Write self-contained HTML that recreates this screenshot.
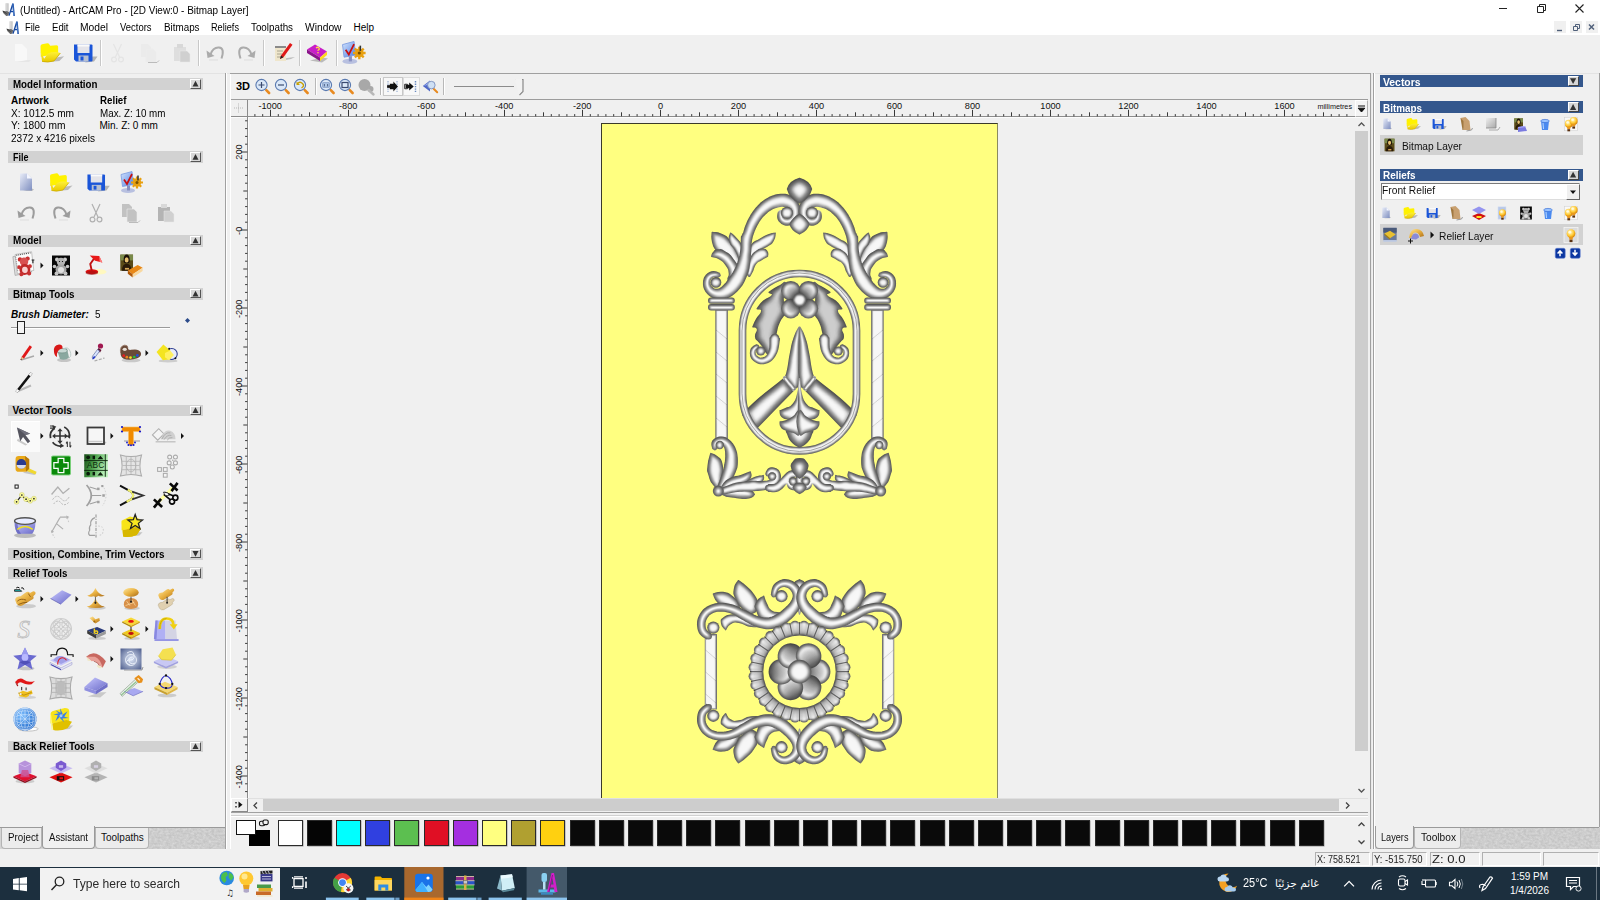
<!DOCTYPE html>
<html lang="en"><head><meta charset="utf-8"><title>(Untitled) - ArtCAM Pro - [2D View:0 - Bitmap Layer]</title>
<style>
html,body{margin:0;padding:0;}
body{width:1600px;height:900px;position:relative;overflow:hidden;background:#f0f0f0;font-family:"Liberation Sans","DejaVu Sans",sans-serif;font-size:10px;color:#000;}
body>div,body>span,body>svg{position:absolute;}
.t{white-space:nowrap;transform-origin:0 50%;display:block;}
.ov{pointer-events:none;}
svg{overflow:visible;display:block;}
</style></head><body>
<div style="left:0px;top:0px;width:1600px;height:35px;background:#fff;"></div>
<div style="left:0px;top:35px;width:1600px;height:832px;background:#f0f0f0;"></div>
<span class="t" style="left:19.5px;top:3.8px;font-size:10px;line-height:14px;transform:scaleX(0.994);">(Untitled) - ArtCAM Pro - [2D View:0 - Bitmap Layer]</span>
<span class="t" style="left:25px;top:20.6px;font-size:10px;line-height:14px;transform:scaleX(0.931);">File</span>
<span class="t" style="left:51.5px;top:20.6px;font-size:10px;line-height:14px;transform:scaleX(0.958);">Edit</span>
<span class="t" style="left:80px;top:20.6px;font-size:10px;line-height:14px;transform:scaleX(1.028);">Model</span>
<span class="t" style="left:120px;top:20.6px;font-size:10px;line-height:14px;transform:scaleX(0.945);">Vectors</span>
<span class="t" style="left:163.5px;top:20.6px;font-size:10px;line-height:14px;transform:scaleX(0.983);">Bitmaps</span>
<span class="t" style="left:211px;top:20.6px;font-size:10px;line-height:14px;transform:scaleX(0.916);">Reliefs</span>
<span class="t" style="left:251px;top:20.6px;font-size:10px;line-height:14px;transform:scaleX(0.981);">Toolpaths</span>
<span class="t" style="left:305px;top:20.6px;font-size:10px;line-height:14px;transform:scaleX(1.026);">Window</span>
<span class="t" style="left:353.5px;top:20.6px;font-size:10px;line-height:14px;">Help</span>
<svg style="left:2px;top:3px;" width="14" height="14" viewBox="0 0 14 14"><path d="M3.6 0.300h3v8.500h-3z" fill="#bdbdbd"/><path d="M4.4 0.300h1v8h-1z" fill="#e6e6e6"/><path d="M0.4 7.600q2.5 1 4.5 0.500l2.3 1.2-0.6 2.600q-1.2 1.4-2.6 0.800l-2.8-2.600z" fill="#6a6a6a"/><path d="M1 8.200l3.5 2.3" stroke="#3a3a3a" stroke-width="1"/><path d="M6.3 12.800l3.9-12.400h1.500l1.2 12.500h-1.500l-0.3-3.600h-2.300l-1.1 3.500z" fill="#17479e"/><path d="M9.3 8l1.3-4.6 0.3 4.600z" fill="#fff"/><path d="M10.7 0.400l1.2 12.5" stroke="#4f86d6" stroke-width="0.7"/></svg>
<svg style="left:6.3px;top:20.6px;" width="14" height="14" viewBox="0 0 14 14"><path d="M3.6 0.300h3v8.500h-3z" fill="#bdbdbd"/><path d="M4.4 0.300h1v8h-1z" fill="#e6e6e6"/><path d="M0.4 7.600q2.5 1 4.5 0.500l2.3 1.2-0.6 2.600q-1.2 1.4-2.6 0.800l-2.8-2.600z" fill="#6a6a6a"/><path d="M1 8.200l3.5 2.3" stroke="#3a3a3a" stroke-width="1"/><path d="M6.3 12.800l3.9-12.400h1.500l1.2 12.500h-1.500l-0.3-3.600h-2.300l-1.1 3.500z" fill="#17479e"/><path d="M9.3 8l1.3-4.6 0.3 4.600z" fill="#fff"/><path d="M10.7 0.400l1.2 12.5" stroke="#4f86d6" stroke-width="0.7"/></svg>
<svg style="left:1495px;top:0px;" width="105" height="18" viewBox="0 0 105 18"><path d="M4 8.5h8" stroke="#222" stroke-width="1" fill="none"/><path d="M42.5 6.5h6v6h-6z M44.5 6.5v-2h6v6h-2" stroke="#222" stroke-width="1" fill="none"/><path d="M80.5 4.5l8 8m0-8l-8 8" stroke="#222" stroke-width="1.1" fill="none"/></svg>
<div style="left:1552.5px;top:19.5px;width:14px;height:14px;background:#f0f0f0;border:1px solid #fff;box-sizing:border-box;"></div>
<div style="left:1568.5px;top:19.5px;width:14px;height:14px;background:#f0f0f0;border:1px solid #fff;box-sizing:border-box;"></div>
<div style="left:1584.5px;top:19.5px;width:14px;height:14px;background:#f0f0f0;border:1px solid #fff;box-sizing:border-box;"></div>
<svg style="left:1552px;top:19px;" width="48" height="16" viewBox="0 0 48 16"><path d="M5 11.5h5" stroke="#50607a" stroke-width="1.4"/><path d="M21.5 7.5h4v4h-4z M23.5 7.5v-2h4v4h-2" stroke="#50607a" stroke-width="1" fill="none"/><path d="M37 5.5l5 5m0-5l-5 5" stroke="#50607a" stroke-width="1.5" fill="none"/></svg>
<div style="left:99.5px;top:40px;width:1px;height:26px;background:#c8c8c8;"></div>
<div style="left:100.5px;top:40px;width:1px;height:26px;background:#fff;"></div>
<div style="left:197.5px;top:40px;width:1px;height:26px;background:#c8c8c8;"></div>
<div style="left:198.5px;top:40px;width:1px;height:26px;background:#fff;"></div>
<div style="left:263px;top:40px;width:1px;height:26px;background:#c8c8c8;"></div>
<div style="left:264px;top:40px;width:1px;height:26px;background:#fff;"></div>
<div style="left:299px;top:40px;width:1px;height:26px;background:#c8c8c8;"></div>
<div style="left:300px;top:40px;width:1px;height:26px;background:#fff;"></div>
<div style="left:335.5px;top:40px;width:1px;height:26px;background:#c8c8c8;"></div>
<div style="left:336.5px;top:40px;width:1px;height:26px;background:#fff;"></div>
<div style="left:0px;top:72.5px;width:1600px;height:1px;background:#e3e3e3;"></div>
<div style="left:225px;top:73px;width:1px;height:776px;background:#a0a0a0;"></div>
<div style="left:226px;top:73px;width:1px;height:776px;background:#fff;"></div>
<div style="left:230px;top:73px;width:1px;height:776px;background:#fff;"></div>
<div style="left:230px;top:73px;width:1140px;height:1px;background:#a0a0a0;"></div>
<div style="left:1370px;top:73px;width:1px;height:776px;background:#a0a0a0;"></div>
<div style="left:1371px;top:73px;width:1px;height:776px;background:#e8e8e8;"></div>
<div style="left:1373px;top:73px;width:1px;height:776px;background:#a0a0a0;"></div>
<div style="left:1374px;top:73px;width:1px;height:776px;background:#fff;"></div>
<div style="left:1598.5px;top:73px;width:1px;height:754px;background:#a0a0a0;"></div>
<div style="left:8px;top:77.5px;width:195px;height:12.5px;background:#d2d2d2;"></div>
<span class="t" style="left:12.5px;top:77.65px;font-size:10px;line-height:14px;font-weight:bold;transform:scaleX(0.975);">Model Information</span>
<div style="left:190px;top:78.7px;width:11px;height:10.1px;background:#d8d8d8;border-top:1px solid #fff;border-left:1px solid #fff;border-right:1px solid #555;border-bottom:1px solid #555;box-sizing:border-box;"></div>
<svg style="left:0;top:0" width="1600" height="900" class="ov"><polygon points="192.5,86.55 198.5,86.55 195.5,80.75" fill="#333"/></svg>
<span class="t" style="left:11px;top:94.1px;font-size:10px;line-height:14px;font-weight:bold;">Artwork</span>
<span class="t" style="left:99.5px;top:94.1px;font-size:10px;line-height:14px;font-weight:bold;transform:scaleX(0.973);">Relief</span>
<span class="t" style="left:11px;top:106.6px;font-size:10px;line-height:14px;transform:scaleX(1.012);">X: 1012.5 mm</span>
<span class="t" style="left:99.5px;top:106.6px;font-size:10px;line-height:14px;transform:scaleX(0.982);">Max. Z: 10 mm</span>
<span class="t" style="left:11px;top:119.1px;font-size:10px;line-height:14px;transform:scaleX(1.021);">Y: 1800 mm</span>
<span class="t" style="left:99.5px;top:119.1px;font-size:10px;line-height:14px;">Min. Z: 0 mm</span>
<span class="t" style="left:11px;top:131.6px;font-size:10px;line-height:14px;transform:scaleX(1.007);">2372 x 4216 pixels</span>
<div style="left:8px;top:151px;width:195px;height:12px;background:#d2d2d2;"></div>
<span class="t" style="left:12.5px;top:150.9px;font-size:10px;line-height:14px;font-weight:bold;transform:scaleX(0.900);">File</span>
<div style="left:190px;top:152.2px;width:11px;height:9.6px;background:#d8d8d8;border-top:1px solid #fff;border-left:1px solid #fff;border-right:1px solid #555;border-bottom:1px solid #555;box-sizing:border-box;"></div>
<svg style="left:0;top:0" width="1600" height="900" class="ov"><polygon points="192.5,159.8 198.5,159.8 195.5,154" fill="#333"/></svg>
<div style="left:8px;top:234.5px;width:195px;height:12px;background:#d2d2d2;"></div>
<span class="t" style="left:12.5px;top:234.4px;font-size:10px;line-height:14px;font-weight:bold;transform:scaleX(0.987);">Model</span>
<div style="left:190px;top:235.7px;width:11px;height:9.6px;background:#d8d8d8;border-top:1px solid #fff;border-left:1px solid #fff;border-right:1px solid #555;border-bottom:1px solid #555;box-sizing:border-box;"></div>
<svg style="left:0;top:0" width="1600" height="900" class="ov"><polygon points="192.5,243.3 198.5,243.3 195.5,237.5" fill="#333"/></svg>
<div style="left:8px;top:288px;width:195px;height:11.5px;background:#d2d2d2;"></div>
<span class="t" style="left:12.5px;top:287.65px;font-size:10px;line-height:14px;font-weight:bold;transform:scaleX(0.983);">Bitmap Tools</span>
<div style="left:190px;top:289.2px;width:11px;height:9.1px;background:#d8d8d8;border-top:1px solid #fff;border-left:1px solid #fff;border-right:1px solid #555;border-bottom:1px solid #555;box-sizing:border-box;"></div>
<svg style="left:0;top:0" width="1600" height="900" class="ov"><polygon points="192.5,296.55 198.5,296.55 195.5,290.75" fill="#333"/></svg>
<span class="t" style="left:11px;top:308.1px;font-size:10px;line-height:14px;font-weight:bold;font-style:italic;">Brush Diameter:</span>
<span class="t" style="left:94.5px;top:308.1px;font-size:10px;line-height:14px;transform:scaleX(0.989);">5</span>
<div style="left:11px;top:326.5px;width:159px;height:1px;background:#9a9a9a;"></div>
<div style="left:11px;top:327.5px;width:159px;height:1px;background:#fff;"></div>
<div style="left:16.5px;top:321px;width:8.5px;height:13px;background:#f4f4f4;border:1px solid #222;box-sizing:border-box;"></div>
<svg style="left:184px;top:317px;" width="7" height="7" viewBox="0 0 7 7"><path d="M3.5 1L6 3.5 3.5 6 1 3.5z" fill="#2b4a8a"/></svg>
<div style="left:8px;top:404.5px;width:195px;height:11.5px;background:#d2d2d2;"></div>
<span class="t" style="left:12.5px;top:404.15px;font-size:10px;line-height:14px;font-weight:bold;">Vector Tools</span>
<div style="left:190px;top:405.7px;width:11px;height:9.1px;background:#d8d8d8;border-top:1px solid #fff;border-left:1px solid #fff;border-right:1px solid #555;border-bottom:1px solid #555;box-sizing:border-box;"></div>
<svg style="left:0;top:0" width="1600" height="900" class="ov"><polygon points="192.5,413.05 198.5,413.05 195.5,407.25" fill="#333"/></svg>
<div style="left:8px;top:548px;width:195px;height:11.5px;background:#d2d2d2;"></div>
<span class="t" style="left:12.5px;top:547.65px;font-size:10px;line-height:14px;font-weight:bold;transform:scaleX(0.988);">Position, Combine, Trim Vectors</span>
<div style="left:190px;top:549.2px;width:11px;height:9.1px;background:#d8d8d8;border-top:1px solid #fff;border-left:1px solid #fff;border-right:1px solid #555;border-bottom:1px solid #555;box-sizing:border-box;"></div>
<svg style="left:0;top:0" width="1600" height="900" class="ov"><polygon points="192.5,550.95 198.5,550.95 195.5,556.75" fill="#333"/></svg>
<div style="left:8px;top:567px;width:195px;height:12px;background:#d2d2d2;"></div>
<span class="t" style="left:12.5px;top:566.9px;font-size:10px;line-height:14px;font-weight:bold;transform:scaleX(0.974);">Relief Tools</span>
<div style="left:190px;top:568.2px;width:11px;height:9.6px;background:#d8d8d8;border-top:1px solid #fff;border-left:1px solid #fff;border-right:1px solid #555;border-bottom:1px solid #555;box-sizing:border-box;"></div>
<svg style="left:0;top:0" width="1600" height="900" class="ov"><polygon points="192.5,575.8 198.5,575.8 195.5,570" fill="#333"/></svg>
<div style="left:8px;top:740.5px;width:195px;height:11.5px;background:#d2d2d2;"></div>
<span class="t" style="left:12.5px;top:740.15px;font-size:10px;line-height:14px;font-weight:bold;transform:scaleX(0.986);">Back Relief Tools</span>
<div style="left:190px;top:741.7px;width:11px;height:9.1px;background:#d8d8d8;border-top:1px solid #fff;border-left:1px solid #fff;border-right:1px solid #555;border-bottom:1px solid #555;box-sizing:border-box;"></div>
<svg style="left:0;top:0" width="1600" height="900" class="ov"><polygon points="192.5,749.05 198.5,749.05 195.5,743.25" fill="#333"/></svg>
<div style="left:11px;top:421px;width:28px;height:30px;background:#fafafa;border-top:1px solid #fff;border-left:1px solid #fff;"></div>
<div style="left:0px;top:827px;width:225px;height:22px;background:#d4d4d4;"></div>
<svg style="left:149px;top:827px" width="76" height="22"><filter id="tx" x="0" y="0" width="100%" height="100%"><feTurbulence type="fractalNoise" baseFrequency="0.35 0.5" numOctaves="2" seed="3"/><feColorMatrix type="matrix" values="0 0 0 0 0.86  0 0 0 0 0.86  0 0 0 0 0.86  0.9 0 0 0 -0.25"/></filter><rect width="76" height="22" fill="#c4c4c4"/><rect width="76" height="22" filter="url(#tx)"/></svg>
<div style="left:0px;top:826.5px;width:225px;height:1px;background:#9a9a9a;"></div>
<div style="left:1px;top:828px;width:41px;height:20.5px;background:#ececec;border:1px solid #b4b4b4;border-top:none;border-radius:0 0 4px 4px;box-sizing:border-box;"></div>
<span class="t" style="left:7.5px;top:831.3px;font-size:10px;line-height:14px;color:#111;transform:scaleX(0.980);">Project</span>
<div style="left:95px;top:828px;width:53.5px;height:20.5px;background:#ececec;border:1px solid #b4b4b4;border-top:none;border-radius:0 0 4px 4px;box-sizing:border-box;"></div>
<span class="t" style="left:101px;top:831.3px;font-size:10px;line-height:14px;color:#111;">Toolpaths</span>
<div style="left:42px;top:826px;width:53px;height:22.5px;background:#f0f0f0;border:1px solid #9a9a9a;border-top:none;border-radius:0 0 4px 4px;box-sizing:border-box;"></div>
<span class="t" style="left:49px;top:830.6px;font-size:10px;line-height:14px;color:#111;transform:scaleX(0.961);">Assistant</span>
<span class="t" style="left:236px;top:79.1px;font-size:11px;line-height:15px;font-weight:bold;">3D</span>
<div style="left:314.5px;top:78px;width:1px;height:17px;background:#b8b8b8;"></div>
<div style="left:315.5px;top:78px;width:1px;height:17px;background:#fff;"></div>
<div style="left:379.5px;top:78px;width:1px;height:17px;background:#b8b8b8;"></div>
<div style="left:380.5px;top:78px;width:1px;height:17px;background:#fff;"></div>
<div style="left:443px;top:78px;width:1px;height:17px;background:#b8b8b8;"></div>
<div style="left:444px;top:78px;width:1px;height:17px;background:#fff;"></div>
<div style="left:382.5px;top:77px;width:20px;height:19px;background:#f8f8f8;border:1px solid #c8c8c8;box-sizing:border-box;"></div>
<div style="left:403px;top:77px;width:17px;height:19px;background:#f8f8f8;border:1px solid #dcdcdc;box-sizing:border-box;"></div>
<div style="left:454px;top:85.5px;width:60px;height:1.6px;background:#8c8c8c;"></div>
<svg style="left:513px;top:78px;" width="12" height="19" viewBox="0 0 12 19"><path d="M2.5 1.5h7.5v12l-3.5 3.5" fill="none" stroke="#8a8a8a" stroke-width="1.2"/><path d="M2 1h7v12l-3 3" fill="#f2f2f2" stroke="none"/></svg>
<div style="left:231px;top:99px;width:1137px;height:1px;background:#9c9c9c;"></div>
<div style="left:231px;top:116.3px;width:1137px;height:1px;background:#8c8c8c;"></div>
<div style="left:231px;top:117.3px;width:1137px;height:1px;background:#fcfcfc;"></div>
<div style="left:247.3px;top:100px;width:1px;height:712px;background:#8c8c8c;"></div>
<div style="left:248.3px;top:117px;width:1px;height:695px;background:#fcfcfc;"></div>
<div style="left:231px;top:797.5px;width:1137px;height:1px;background:#e0e0e0;"></div>
<svg style="left:0;top:0" width="1600" height="900" class="ov"><path d="M254.90 114.10v2.20M262.70 114.10v2.20M270.50 109.80v6.50M278.30 114.10v2.20M286.10 114.10v2.20M293.90 114.10v2.20M301.70 114.10v2.20M309.50 112.30v4.00M317.30 114.10v2.20M325.10 114.10v2.20M332.90 114.10v2.20M340.70 114.10v2.20M348.50 109.80v6.50M356.30 114.10v2.20M364.10 114.10v2.20M371.90 114.10v2.20M379.70 114.10v2.20M387.50 112.30v4.00M395.30 114.10v2.20M403.10 114.10v2.20M410.90 114.10v2.20M418.70 114.10v2.20M426.50 109.80v6.50M434.30 114.10v2.20M442.10 114.10v2.20M449.90 114.10v2.20M457.70 114.10v2.20M465.50 112.30v4.00M473.30 114.10v2.20M481.10 114.10v2.20M488.90 114.10v2.20M496.70 114.10v2.20M504.50 109.80v6.50M512.30 114.10v2.20M520.10 114.10v2.20M527.90 114.10v2.20M535.70 114.10v2.20M543.50 112.30v4.00M551.30 114.10v2.20M559.10 114.10v2.20M566.90 114.10v2.20M574.70 114.10v2.20M582.50 109.80v6.50M590.30 114.10v2.20M598.10 114.10v2.20M605.90 114.10v2.20M613.70 114.10v2.20M621.50 112.30v4.00M629.30 114.10v2.20M637.10 114.10v2.20M644.90 114.10v2.20M652.70 114.10v2.20M660.50 109.80v6.50M668.30 114.10v2.20M676.10 114.10v2.20M683.90 114.10v2.20M691.70 114.10v2.20M699.50 112.30v4.00M707.30 114.10v2.20M715.10 114.10v2.20M722.90 114.10v2.20M730.70 114.10v2.20M738.50 109.80v6.50M746.30 114.10v2.20M754.10 114.10v2.20M761.90 114.10v2.20M769.70 114.10v2.20M777.50 112.30v4.00M785.30 114.10v2.20M793.10 114.10v2.20M800.90 114.10v2.20M808.70 114.10v2.20M816.50 109.80v6.50M824.30 114.10v2.20M832.10 114.10v2.20M839.90 114.10v2.20M847.70 114.10v2.20M855.50 112.30v4.00M863.30 114.10v2.20M871.10 114.10v2.20M878.90 114.10v2.20M886.70 114.10v2.20M894.50 109.80v6.50M902.30 114.10v2.20M910.10 114.10v2.20M917.90 114.10v2.20M925.70 114.10v2.20M933.50 112.30v4.00M941.30 114.10v2.20M949.10 114.10v2.20M956.90 114.10v2.20M964.70 114.10v2.20M972.50 109.80v6.50M980.30 114.10v2.20M988.10 114.10v2.20M995.90 114.10v2.20M1003.70 114.10v2.20M1011.50 112.30v4.00M1019.30 114.10v2.20M1027.10 114.10v2.20M1034.90 114.10v2.20M1042.70 114.10v2.20M1050.50 109.80v6.50M1058.30 114.10v2.20M1066.10 114.10v2.20M1073.90 114.10v2.20M1081.70 114.10v2.20M1089.50 112.30v4.00M1097.30 114.10v2.20M1105.10 114.10v2.20M1112.90 114.10v2.20M1120.70 114.10v2.20M1128.50 109.80v6.50M1136.30 114.10v2.20M1144.10 114.10v2.20M1151.90 114.10v2.20M1159.70 114.10v2.20M1167.50 112.30v4.00M1175.30 114.10v2.20M1183.10 114.10v2.20M1190.90 114.10v2.20M1198.70 114.10v2.20M1206.50 109.80v6.50M1214.30 114.10v2.20M1222.10 114.10v2.20M1229.90 114.10v2.20M1237.70 114.10v2.20M1245.50 112.30v4.00M1253.30 114.10v2.20M1261.10 114.10v2.20M1268.90 114.10v2.20M1276.70 114.10v2.20M1284.50 109.80v6.50M1292.30 114.10v2.20M1300.10 114.10v2.20M1307.90 114.10v2.20M1315.70 114.10v2.20M1323.50 112.30v4.00M1331.30 114.10v2.20M1339.10 114.10v2.20M1346.90 114.10v2.20M245.10 791.60h2.20M245.10 783.80h2.20M240.80 776.00h6.50M245.10 768.20h2.20M245.10 760.40h2.20M245.10 752.60h2.20M245.10 744.80h2.20M243.30 737.00h4.00M245.10 729.20h2.20M245.10 721.40h2.20M245.10 713.60h2.20M245.10 705.80h2.20M240.80 698.00h6.50M245.10 690.20h2.20M245.10 682.40h2.20M245.10 674.60h2.20M245.10 666.80h2.20M243.30 659.00h4.00M245.10 651.20h2.20M245.10 643.40h2.20M245.10 635.60h2.20M245.10 627.80h2.20M240.80 620.00h6.50M245.10 612.20h2.20M245.10 604.40h2.20M245.10 596.60h2.20M245.10 588.80h2.20M243.30 581.00h4.00M245.10 573.20h2.20M245.10 565.40h2.20M245.10 557.60h2.20M245.10 549.80h2.20M240.80 542.00h6.50M245.10 534.20h2.20M245.10 526.40h2.20M245.10 518.60h2.20M245.10 510.80h2.20M243.30 503.00h4.00M245.10 495.20h2.20M245.10 487.40h2.20M245.10 479.60h2.20M245.10 471.80h2.20M240.80 464.00h6.50M245.10 456.20h2.20M245.10 448.40h2.20M245.10 440.60h2.20M245.10 432.80h2.20M243.30 425.00h4.00M245.10 417.20h2.20M245.10 409.40h2.20M245.10 401.60h2.20M245.10 393.80h2.20M240.80 386.00h6.50M245.10 378.20h2.20M245.10 370.40h2.20M245.10 362.60h2.20M245.10 354.80h2.20M243.30 347.00h4.00M245.10 339.20h2.20M245.10 331.40h2.20M245.10 323.60h2.20M245.10 315.80h2.20M240.80 308.00h6.50M245.10 300.20h2.20M245.10 292.40h2.20M245.10 284.60h2.20M245.10 276.80h2.20M243.30 269.00h4.00M245.10 261.20h2.20M245.10 253.40h2.20M245.10 245.60h2.20M245.10 237.80h2.20M240.80 230.00h6.50M245.10 222.20h2.20M245.10 214.40h2.20M245.10 206.60h2.20M245.10 198.80h2.20M243.30 191.00h4.00M245.10 183.20h2.20M245.10 175.40h2.20M245.10 167.60h2.20M245.10 159.80h2.20M240.80 152.00h6.50M245.10 144.20h2.20M245.10 136.40h2.20M245.10 128.60h2.20M245.10 120.80h2.20" stroke="#222" stroke-width="0.9" fill="none"/><g font-family="Liberation Sans,sans-serif" font-size="9.2" fill="#111"><text x="270.2" y="109.3" text-anchor="middle">-1000</text><text x="348.2" y="109.3" text-anchor="middle">-800</text><text x="426.2" y="109.3" text-anchor="middle">-600</text><text x="504.2" y="109.3" text-anchor="middle">-400</text><text x="582.2" y="109.3" text-anchor="middle">-200</text><text x="660.5" y="109.3" text-anchor="middle">0</text><text x="738.5" y="109.3" text-anchor="middle">200</text><text x="816.5" y="109.3" text-anchor="middle">400</text><text x="894.5" y="109.3" text-anchor="middle">600</text><text x="972.5" y="109.3" text-anchor="middle">800</text><text x="1050.5" y="109.3" text-anchor="middle">1000</text><text x="1128.5" y="109.3" text-anchor="middle">1200</text><text x="1206.5" y="109.3" text-anchor="middle">1400</text><text x="1284.5" y="109.3" text-anchor="middle">1600</text><text transform="translate(242.4 152.0) rotate(-90)" text-anchor="middle">200</text><text transform="translate(242.4 230.8) rotate(-90)" text-anchor="middle">-0</text><text transform="translate(242.4 308.8) rotate(-90)" text-anchor="middle">-200</text><text transform="translate(242.4 386.8) rotate(-90)" text-anchor="middle">-400</text><text transform="translate(242.4 464.8) rotate(-90)" text-anchor="middle">-600</text><text transform="translate(242.4 542.8) rotate(-90)" text-anchor="middle">-800</text><text transform="translate(242.4 620.8) rotate(-90)" text-anchor="middle">-1000</text><text transform="translate(242.4 698.8) rotate(-90)" text-anchor="middle">-1200</text><text transform="translate(242.4 776.8) rotate(-90)" text-anchor="middle">-1400</text></g><text x="1317.5" y="109" font-family="Liberation Sans,sans-serif" font-size="7.6" fill="#111" textLength="34.5" lengthAdjust="spacingAndGlyphs">millimetres</text><path d="M234 108h9M238.5 103.5v9" stroke="#aaa" stroke-width="0.8" stroke-dasharray="1 1" fill="none"/></svg>
<div style="left:1354.5px;top:100px;width:13px;height:16.5px;background:#f4f4f4;border:1px solid #b0b0b0;border-top-color:#fff;border-left-color:#fff;box-sizing:border-box;"></div>
<svg style="left:1354.5px;top:100px;" width="13" height="17" viewBox="0 0 13 17"><path d="M3 6h7M3.2 8.2h6.6L6.5 12z" stroke="#111" stroke-width="1" fill="#111"/></svg>
<div style="left:601px;top:122.5px;width:396.5px;height:675px;background:#ffff80;border-left:1.2px solid #3a3a2a;border-top:1.2px solid #3a3a2a;border-right:1px solid #8a8a60;box-sizing:border-box;"></div>
<div style="left:1355px;top:117.5px;width:13px;height:680px;background:#f0f0f0;"></div>
<div style="left:1355px;top:131px;width:12.5px;height:619.5px;background:#cdcdcd;"></div>
<svg style="left:1355px;top:118px;" width="13" height="13" viewBox="0 0 13 13"><path d="M3.5 8l3-3 3 3" stroke="#555" stroke-width="1.3" fill="none"/></svg>
<svg style="left:1355px;top:784px;" width="13" height="13" viewBox="0 0 13 13"><path d="M3.5 5l3 3 3-3" stroke="#555" stroke-width="1.3" fill="none"/></svg>
<div style="left:248px;top:798.5px;width:1107px;height:12.5px;background:#f0f0f0;"></div>
<div style="left:262.5px;top:799px;width:1076.5px;height:11.5px;background:#cdcdcd;"></div>
<svg style="left:249px;top:798.5px;" width="13" height="13" viewBox="0 0 13 13"><path d="M8 3.5l-3 3 3 3" stroke="#444" stroke-width="1.3" fill="none"/></svg>
<svg style="left:1341px;top:798.5px;" width="13" height="13" viewBox="0 0 13 13"><path d="M5 3.5l3 3-3 3" stroke="#444" stroke-width="1.3" fill="none"/></svg>
<div style="left:231px;top:798px;width:16.5px;height:13.5px;background:#f0f0f0;border:1px solid #fff;border-right-color:#888;border-bottom-color:#888;box-sizing:border-box;"></div>
<svg style="left:231px;top:798px;" width="17" height="14" viewBox="0 0 17 14"><path d="M7.5 3.5l4 3.3-4 3.3z" fill="#111"/><path d="M5 4v1.4M5 8v1.4" stroke="#111" stroke-width="1.3"/></svg>
<div style="left:231px;top:811.5px;width:1137px;height:1px;background:#a0a0a0;"></div>
<div style="left:231px;top:814.8px;width:1137px;height:1px;background:#d0d0d0;"></div>
<div style="left:231px;top:815.8px;width:1137px;height:1px;background:#fff;"></div>
<div style="left:277.8px;top:820px;width:25px;height:25.5px;background:#ffffff;border:1px solid #2a2a2a;box-sizing:border-box;box-shadow:0.5px 0.5px 0 #999;"></div>
<div style="left:306.97px;top:820px;width:25px;height:25.5px;background:#050505;border:1px solid #2a2a2a;box-sizing:border-box;box-shadow:0.5px 0.5px 0 #999;"></div>
<div style="left:336.14px;top:820px;width:25px;height:25.5px;background:#00ffff;border:1px solid #2a2a2a;box-sizing:border-box;box-shadow:0.5px 0.5px 0 #999;"></div>
<div style="left:365.31px;top:820px;width:25px;height:25.5px;background:#3040e0;border:1px solid #2a2a2a;box-sizing:border-box;box-shadow:0.5px 0.5px 0 #999;"></div>
<div style="left:394.48px;top:820px;width:25px;height:25.5px;background:#5cbf50;border:1px solid #2a2a2a;box-sizing:border-box;box-shadow:0.5px 0.5px 0 #999;"></div>
<div style="left:423.65px;top:820px;width:25px;height:25.5px;background:#e00f24;border:1px solid #2a2a2a;box-sizing:border-box;box-shadow:0.5px 0.5px 0 #999;"></div>
<div style="left:452.82px;top:820px;width:25px;height:25.5px;background:#a42fe0;border:1px solid #2a2a2a;box-sizing:border-box;box-shadow:0.5px 0.5px 0 #999;"></div>
<div style="left:481.99px;top:820px;width:25px;height:25.5px;background:#ffff80;border:1px solid #2a2a2a;box-sizing:border-box;box-shadow:0.5px 0.5px 0 #999;"></div>
<div style="left:511.16px;top:820px;width:25px;height:25.5px;background:#b0a030;border:1px solid #2a2a2a;box-sizing:border-box;box-shadow:0.5px 0.5px 0 #999;"></div>
<div style="left:540.33px;top:820px;width:25px;height:25.5px;background:#ffd010;border:1px solid #2a2a2a;box-sizing:border-box;box-shadow:0.5px 0.5px 0 #999;"></div>
<div style="left:569.5px;top:820px;width:25px;height:25.5px;background:#0a0a0a;border:1px solid #2a2a2a;box-sizing:border-box;box-shadow:0.5px 0.5px 0 #999;"></div>
<div style="left:598.67px;top:820px;width:25px;height:25.5px;background:#0a0a0a;border:1px solid #2a2a2a;box-sizing:border-box;box-shadow:0.5px 0.5px 0 #999;"></div>
<div style="left:627.84px;top:820px;width:25px;height:25.5px;background:#0a0a0a;border:1px solid #2a2a2a;box-sizing:border-box;box-shadow:0.5px 0.5px 0 #999;"></div>
<div style="left:657.01px;top:820px;width:25px;height:25.5px;background:#0a0a0a;border:1px solid #2a2a2a;box-sizing:border-box;box-shadow:0.5px 0.5px 0 #999;"></div>
<div style="left:686.18px;top:820px;width:25px;height:25.5px;background:#0a0a0a;border:1px solid #2a2a2a;box-sizing:border-box;box-shadow:0.5px 0.5px 0 #999;"></div>
<div style="left:715.35px;top:820px;width:25px;height:25.5px;background:#0a0a0a;border:1px solid #2a2a2a;box-sizing:border-box;box-shadow:0.5px 0.5px 0 #999;"></div>
<div style="left:744.52px;top:820px;width:25px;height:25.5px;background:#0a0a0a;border:1px solid #2a2a2a;box-sizing:border-box;box-shadow:0.5px 0.5px 0 #999;"></div>
<div style="left:773.69px;top:820px;width:25px;height:25.5px;background:#0a0a0a;border:1px solid #2a2a2a;box-sizing:border-box;box-shadow:0.5px 0.5px 0 #999;"></div>
<div style="left:802.86px;top:820px;width:25px;height:25.5px;background:#0a0a0a;border:1px solid #2a2a2a;box-sizing:border-box;box-shadow:0.5px 0.5px 0 #999;"></div>
<div style="left:832.03px;top:820px;width:25px;height:25.5px;background:#0a0a0a;border:1px solid #2a2a2a;box-sizing:border-box;box-shadow:0.5px 0.5px 0 #999;"></div>
<div style="left:861.2px;top:820px;width:25px;height:25.5px;background:#0a0a0a;border:1px solid #2a2a2a;box-sizing:border-box;box-shadow:0.5px 0.5px 0 #999;"></div>
<div style="left:890.37px;top:820px;width:25px;height:25.5px;background:#0a0a0a;border:1px solid #2a2a2a;box-sizing:border-box;box-shadow:0.5px 0.5px 0 #999;"></div>
<div style="left:919.54px;top:820px;width:25px;height:25.5px;background:#0a0a0a;border:1px solid #2a2a2a;box-sizing:border-box;box-shadow:0.5px 0.5px 0 #999;"></div>
<div style="left:948.71px;top:820px;width:25px;height:25.5px;background:#0a0a0a;border:1px solid #2a2a2a;box-sizing:border-box;box-shadow:0.5px 0.5px 0 #999;"></div>
<div style="left:977.88px;top:820px;width:25px;height:25.5px;background:#0a0a0a;border:1px solid #2a2a2a;box-sizing:border-box;box-shadow:0.5px 0.5px 0 #999;"></div>
<div style="left:1007.05px;top:820px;width:25px;height:25.5px;background:#0a0a0a;border:1px solid #2a2a2a;box-sizing:border-box;box-shadow:0.5px 0.5px 0 #999;"></div>
<div style="left:1036.22px;top:820px;width:25px;height:25.5px;background:#0a0a0a;border:1px solid #2a2a2a;box-sizing:border-box;box-shadow:0.5px 0.5px 0 #999;"></div>
<div style="left:1065.39px;top:820px;width:25px;height:25.5px;background:#0a0a0a;border:1px solid #2a2a2a;box-sizing:border-box;box-shadow:0.5px 0.5px 0 #999;"></div>
<div style="left:1094.56px;top:820px;width:25px;height:25.5px;background:#0a0a0a;border:1px solid #2a2a2a;box-sizing:border-box;box-shadow:0.5px 0.5px 0 #999;"></div>
<div style="left:1123.73px;top:820px;width:25px;height:25.5px;background:#0a0a0a;border:1px solid #2a2a2a;box-sizing:border-box;box-shadow:0.5px 0.5px 0 #999;"></div>
<div style="left:1152.9px;top:820px;width:25px;height:25.5px;background:#0a0a0a;border:1px solid #2a2a2a;box-sizing:border-box;box-shadow:0.5px 0.5px 0 #999;"></div>
<div style="left:1182.07px;top:820px;width:25px;height:25.5px;background:#0a0a0a;border:1px solid #2a2a2a;box-sizing:border-box;box-shadow:0.5px 0.5px 0 #999;"></div>
<div style="left:1211.24px;top:820px;width:25px;height:25.5px;background:#0a0a0a;border:1px solid #2a2a2a;box-sizing:border-box;box-shadow:0.5px 0.5px 0 #999;"></div>
<div style="left:1240.41px;top:820px;width:25px;height:25.5px;background:#0a0a0a;border:1px solid #2a2a2a;box-sizing:border-box;box-shadow:0.5px 0.5px 0 #999;"></div>
<div style="left:1269.58px;top:820px;width:25px;height:25.5px;background:#0a0a0a;border:1px solid #2a2a2a;box-sizing:border-box;box-shadow:0.5px 0.5px 0 #999;"></div>
<div style="left:1298.75px;top:820px;width:25px;height:25.5px;background:#0a0a0a;border:1px solid #2a2a2a;box-sizing:border-box;box-shadow:0.5px 0.5px 0 #999;"></div>
<div style="left:249px;top:830px;width:20.5px;height:16px;background:#000;"></div>
<div style="left:236px;top:819.5px;width:20px;height:15.5px;background:#fff;border:1px solid #111;box-sizing:border-box;"></div>
<svg style="left:258px;top:819px;" width="12" height="9" viewBox="0 0 12 9"><rect x="1.5" y="2.2" width="5.2" height="4.6" rx="1.6" fill="none" stroke="#111" stroke-width="1.1"/><rect x="5" y="1" width="5.2" height="4.6" rx="1.6" fill="#f0f0f0" stroke="#111" stroke-width="1.1"/></svg>
<svg style="left:1355px;top:818px;" width="13" height="12" viewBox="0 0 13 12"><path d="M3.5 8l3-3 3 3" stroke="#444" stroke-width="1.3" fill="none"/></svg>
<svg style="left:1355px;top:836px;" width="13" height="12" viewBox="0 0 13 12"><path d="M3.5 4.5l3 3 3-3" stroke="#444" stroke-width="1.3" fill="none"/></svg>
<div style="left:1380px;top:75px;width:202.5px;height:12.2px;background:#34578d;"></div>
<span class="t" style="left:1383.3px;top:74.75px;font-size:10.5px;line-height:14.5px;font-weight:bold;color:#fff;transform:scaleX(0.988);">Vectors</span>
<div style="left:1567.5px;top:75.8px;width:11.5px;height:10.6px;background:#d6d6d6;border-top:1px solid #fff;border-left:1px solid #fff;border-right:1px solid #444;border-bottom:1px solid #444;box-sizing:border-box;"></div>
<svg style="left:0;top:0" width="1600" height="900" class="ov"><polygon points="1570,78.3 1576.2,78.3 1573.1,84.1" fill="#333"/></svg>
<div style="left:1380px;top:101px;width:202.5px;height:12.2px;background:#34578d;"></div>
<span class="t" style="left:1383.3px;top:100.75px;font-size:10.5px;line-height:14.5px;font-weight:bold;color:#fff;transform:scaleX(0.941);">Bitmaps</span>
<div style="left:1567.5px;top:101.8px;width:11.5px;height:10.6px;background:#d6d6d6;border-top:1px solid #fff;border-left:1px solid #fff;border-right:1px solid #444;border-bottom:1px solid #444;box-sizing:border-box;"></div>
<svg style="left:0;top:0" width="1600" height="900" class="ov"><polygon points="1570,109.9 1576.2,109.9 1573.1,104.1" fill="#333"/></svg>
<div style="left:1380px;top:168.8px;width:202.5px;height:12px;background:#34578d;"></div>
<span class="t" style="left:1383.3px;top:168.45px;font-size:10.5px;line-height:14.5px;font-weight:bold;color:#fff;transform:scaleX(0.944);">Reliefs</span>
<div style="left:1567.5px;top:169.6px;width:11.5px;height:10.4px;background:#d6d6d6;border-top:1px solid #fff;border-left:1px solid #fff;border-right:1px solid #444;border-bottom:1px solid #444;box-sizing:border-box;"></div>
<svg style="left:0;top:0" width="1600" height="900" class="ov"><polygon points="1570,177.6 1576.2,177.6 1573.1,171.8" fill="#333"/></svg>
<div style="left:1380px;top:135px;width:202.5px;height:20px;background:#d2d2d2;"></div>
<span class="t" style="left:1401.8px;top:138.85px;font-size:10.5px;line-height:14.5px;color:#111;transform:scaleX(0.970);">Bitmap Layer</span>
<div style="left:1380.5px;top:182.5px;width:199.5px;height:17.5px;background:#fff;border:1px solid #7a7a7a;border-right-color:#ddd;border-bottom-color:#ddd;box-sizing:border-box;"></div>
<div style="left:1566px;top:184px;width:13.5px;height:15.5px;background:#f0f0f0;border:1px solid #fff;border-right-color:#666;border-bottom-color:#666;box-sizing:border-box;"></div>
<svg style="left:1566px;top:184px;" width="14" height="16" viewBox="0 0 14 16"><path d="M4 6.5h6L7 10z" fill="#111"/></svg>
<span class="t" style="left:1382.3px;top:182.95px;font-size:10.5px;line-height:14.5px;color:#111;transform:scaleX(0.977);">Front Relief</span>
<div style="left:1380px;top:224.2px;width:202.5px;height:21.3px;background:#d2d2d2;"></div>
<span class="t" style="left:1439.3px;top:228.85px;font-size:10.5px;line-height:14.5px;color:#111;transform:scaleX(0.973);">Relief Layer</span>
<svg style="left:1428px;top:230px;" width="8" height="10" viewBox="0 0 8 10"><path d="M2.5 1.5l3.6 3.5-3.6 3.5z" fill="#111"/></svg>
<svg style="left:1555px;top:248px;" width="10.5" height="10.5" viewBox="0 0 10.5 10.5"><rect x="0.3" y="0.3" width="9.9" height="9.9" rx="1.5" fill="#0b36a0" stroke="#5b7bd0" stroke-width="0.6"/><path d="M5 8.2V3.2M2.6 5.4L5 2.8l2.4 2.6" stroke="#fff" stroke-width="1.5" fill="none"/></svg>
<svg style="left:1570px;top:248px;" width="10.5" height="10.5" viewBox="0 0 10.5 10.5"><rect x="0.3" y="0.3" width="9.9" height="9.9" rx="1.5" fill="#0b36a0" stroke="#5b7bd0" stroke-width="0.6"/><path d="M5 1.8v5M2.6 4.6L5 7.2l2.4-2.6" stroke="#fff" stroke-width="1.5" fill="none"/></svg>
<div style="left:1375px;top:827px;width:225px;height:22px;background:#d4d4d4;"></div>
<svg style="left:1461px;top:827px" width="139" height="22"><rect width="139" height="22" fill="#c4c4c4"/><rect width="139" height="22" filter="url(#tx)"/></svg>
<div style="left:1375px;top:826.5px;width:224px;height:1px;background:#9a9a9a;"></div>
<div style="left:1414px;top:828px;width:47px;height:20.5px;background:#ececec;border:1px solid #b4b4b4;border-top:none;border-radius:0 0 4px 4px;box-sizing:border-box;"></div>
<span class="t" style="left:1421px;top:831.3px;font-size:10px;line-height:14px;color:#111;transform:scaleX(1.015);">Toolbox</span>
<div style="left:1375px;top:826px;width:39px;height:22.5px;background:#f0f0f0;border:1px solid #9a9a9a;border-top:none;border-radius:0 0 4px 4px;box-sizing:border-box;"></div>
<span class="t" style="left:1380.5px;top:830.6px;font-size:10px;line-height:14px;color:#111;transform:scaleX(0.916);">Layers</span>
<div style="left:0px;top:849px;width:1600px;height:18.5px;background:#f0f0f0;"></div>
<div style="left:1314.5px;top:852px;width:55px;height:14px;border-left:1px solid #b0b0b0;border-top:1px solid #b0b0b0;border-right:1px solid #fff;border-bottom:1px solid #fff;box-sizing:border-box;"></div>
<span class="t" style="left:1316.5px;top:853.2px;font-size:10px;line-height:14px;color:#222;transform:scaleX(0.899);">X: 758.521</span>
<div style="left:1372px;top:852px;width:55px;height:14px;border-left:1px solid #b0b0b0;border-top:1px solid #b0b0b0;border-right:1px solid #fff;border-bottom:1px solid #fff;box-sizing:border-box;"></div>
<span class="t" style="left:1374px;top:853.2px;font-size:10px;line-height:14px;color:#222;transform:scaleX(0.948);">Y: -515.750</span>
<div style="left:1429.5px;top:852px;width:50px;height:14px;border-left:1px solid #b0b0b0;border-top:1px solid #b0b0b0;border-right:1px solid #fff;border-bottom:1px solid #fff;box-sizing:border-box;"></div>
<span class="t" style="left:1431.5px;top:853.2px;font-size:10px;line-height:14px;color:#222;transform:scaleX(1.310);">Z: 0.0</span>
<div style="left:1482px;top:852px;width:58.5px;height:14px;border-left:1px solid #b0b0b0;border-top:1px solid #b0b0b0;border-right:1px solid #fff;border-bottom:1px solid #fff;box-sizing:border-box;"></div>
<div style="left:1543px;top:852px;width:56px;height:14px;border-left:1px solid #b0b0b0;border-top:1px solid #b0b0b0;border-right:1px solid #fff;border-bottom:1px solid #fff;box-sizing:border-box;"></div>
<div style="left:0px;top:867px;width:1600px;height:33px;background:#1c2f3e;"></div>
<div style="left:40px;top:867.5px;width:240px;height:32.5px;background:#f2f2f2;"></div>
<span class="t" style="left:73px;top:875.85px;font-size:12.5px;line-height:16.5px;color:#2a2a2a;transform:scaleX(0.968);">Type here to search</span>
<svg style="left:48px;top:874px;" width="20" height="20" viewBox="0 0 20 20"><circle cx="11.5" cy="7.5" r="4.3" fill="none" stroke="#222" stroke-width="1.3"/><path d="M8.5 10.8L3.5 16" stroke="#222" stroke-width="1.4"/></svg>
<svg style="left:12px;top:876px;" width="16" height="16" viewBox="0 0 16 16"><path d="M1 2.9l5.8-.8v5.6H1zM7.7 2l7.3-1v6.7H7.7zM1 8.6h5.8v5.6L1 13.4zM7.7 8.6H15v6.7l-7.3-1z" fill="#fff"/></svg>
<span class="t" style="left:1243px;top:875.35px;font-size:12.5px;line-height:16.5px;color:#fff;transform:scaleX(0.877);">25°C</span>
<span class="t ar" style="left:1275px;top:876.1px;font-size:10.6px;line-height:14.6px;color:#fff;font-family:'DejaVu Sans',sans-serif;direction:rtl;">غائم جزئيًا</span>
<span class="t c" style="left:1510px;top:869.6px;font-size:10px;line-height:14px;color:#fff;width:39px;text-align:center;">1:59 PM</span>
<span class="t c" style="left:1510px;top:884.1px;font-size:10px;line-height:14px;color:#fff;width:39px;text-align:center;">1/4/2026</span>
<div style="left:1596px;top:867px;width:1px;height:33px;background:#6a7782;"></div>
<svg style="left:0;top:0" width="1600" height="900" class="ov"><defs>
<linearGradient id="gFold" x1="0" y1="0" x2="0" y2="1"><stop offset="0" stop-color="#fff23a"/><stop offset="1" stop-color="#e8c800"/></linearGradient>
<linearGradient id="gGold" x1="0" y1="0" x2="1" y2="1"><stop offset="0" stop-color="#ffe9a0"/><stop offset="0.5" stop-color="#e8b040"/><stop offset="1" stop-color="#a86a18"/></linearGradient>
<linearGradient id="gLil" x1="0" y1="0" x2="1" y2="1"><stop offset="0" stop-color="#c8c8ff"/><stop offset="1" stop-color="#6a6ac8"/></linearGradient>
<linearGradient id="gDoc" x1="0" y1="0" x2="1" y2="1"><stop offset="0" stop-color="#e8ecf8"/><stop offset="1" stop-color="#7f8fc0"/></linearGradient>
<linearGradient id="gGrey" x1="0" y1="0" x2="1" y2="1"><stop offset="0" stop-color="#eeeeee"/><stop offset="1" stop-color="#a8a8a8"/></linearGradient>
<linearGradient id="gMon" x1="0" y1="0" x2="1" y2="1"><stop offset="0" stop-color="#d8e8ff"/><stop offset="1" stop-color="#4a7ae0"/></linearGradient>
<radialGradient id="gBulb" cx="0.4" cy="0.35" r="0.7"><stop offset="0" stop-color="#fffbd0"/><stop offset="0.6" stop-color="#ffc830"/><stop offset="1" stop-color="#d07800"/></radialGradient>
<radialGradient id="gBall" cx="0.35" cy="0.35" r="0.8"><stop offset="0" stop-color="#7fc0ff"/><stop offset="1" stop-color="#0f58c0"/></radialGradient>
</defs><g transform="translate(21 53)"><path d="M-6 -9h7l5 5v12h-12z" fill="#f8f8f8"/><path d="M-4 9h12l2-2h-4z" fill="#e6e6e6"/></g><g transform="translate(51 53) scale(1.05)"><path d="M-3 8.5l11-1 4.5-4.5-6 1z" fill="#777" opacity="0.45"/><path d="M-10 -6.500q0-1.5 1.5-1.800l5-1q1.5 0 2 1.200l0.8 1.3 6-0.700q1.5 0 1.5 1.500v6.500l-16.5 3z" fill="#fff200"/><path d="M-9.8 -1.500l1.3 9.500q5 1.5 11.5-0.500l6-7.500q-6-2-12 0.500l-3.5 5z" fill="url(#gFold)"/><path d="M-8.5 8q5 1.5 11.5-0.500l6-7.5" stroke="#c8a800" stroke-width="0.7" fill="none"/></g><g transform="translate(83 53)"><path d="M2 9.5l9-1 3.5-5h-5z" fill="#777" opacity="0.5"/><path d="M-9 -8.5h17.5q1 0 1 1v15q0 1-1 1h-15.5l-2-2z" fill="#1a55d8"/><path d="M-5.5 -8.5h12v8.5h-12z" fill="#e4e4ea"/><path d="M-5.5 -8.5h12v2h-12z" fill="#fafafa"/><path d="M-4.5 2.5h10v6h-10z" fill="#b8c0d0"/><path d="M-2.5 3.5h3v4h-3z" fill="#1a55d8"/></g><g transform="translate(117.5 53)"><g opacity="1" fill="none" stroke="#e4e4e4" stroke-width="1.2"><path d="M-4 -9l6 13M4 -9l-6 13"/><circle cx="-3.5" cy="6.5" r="2.4"/><circle cx="3.5" cy="6.5" r="2.4"/></g></g><g transform="translate(149 53)"><g opacity="1"><path d="M-8 -9h7l3 3v10h-10z" fill="#ebebeb"/><path d="M-3 -4h7l3 3v10h-10z" fill="#ebebeb" stroke="#ececec" stroke-width="0.6"/><path d="M-1 9.5h9l2-2" stroke="#bbb" fill="none"/></g></g><g transform="translate(182 53)"><g opacity="1"><path d="M-8 -6h12v14h-12z" fill="#dedede"/><path d="M-5 -9h6v4h-6z" fill="#d8d8d8"/><path d="M-2 -2h7l3 3v8h-10z" fill="#d0d0d0" stroke="#e8e8e8" stroke-width="0.5"/></g></g><g transform="translate(216 53)"><path d="M-5.5 1.5Q-3 -6 3 -5.5T5.5 5.5" fill="none" stroke="#ababab" stroke-width="2"/><path d="M-9.5 -2.5l1 7.5 7-2z" fill="#ababab"/><path d="M-7 7h9" stroke="#ddd" stroke-width="1"/></g><g transform="translate(246 53)"><g transform="scale(-1 1)"><path d="M-5.5 1.5Q-3 -6 3 -5.5T5.5 5.5" fill="none" stroke="#ababab" stroke-width="2"/><path d="M-9.5 -2.5l1 7.5 7-2z" fill="#ababab"/><path d="M-7 7h9" stroke="#ddd" stroke-width="1"/></g></g><g transform="translate(283 53)"><path d="M-4 8l12-2 4-2-8 1z" fill="#888" opacity="0.5"/><path d="M-8 -7h11v15h-11z" fill="#efe6cc"/><path d="M-8 -7h11v2h-11z" fill="#8a8a8a"/><path d="M-6 -2h6M-6 1h5M-6 4h4" stroke="#9a9484" stroke-width="0.8"/><path d="M-3 6l1-3.5 9-12.5 2.5 1.8-9 12.5z" fill="#e01818"/><path d="M-3 6l1-3.5 2.4 1.8z" fill="#222"/></g><g transform="translate(317 53.5)"><path d="M-7 7l12 2 6-4-6-1z" fill="#777" opacity="0.45"/><path d="M-10 -4l8-5 12 7-7 6z" fill="#c81ec8"/><path d="M-10 -4l13 8v3.5l-13-8z" fill="#8a148a"/><path d="M3 4l7-6v3.5l-7 6z" fill="#ffd820"/><path d="M-1 -5.5q2-1.5 3 0t-1.5 2.5" stroke="#ffe040" stroke-width="1.3" fill="none"/><circle cx="1" cy="-0.8" r="0.8" fill="#ffe040"/></g><g transform="translate(353 53) scale(1.05)"><ellipse cx="-3" cy="8" rx="7" ry="2.5" fill="#b8c0e0"/><path d="M-4 3h3v5h-3z" fill="#8890c0"/><path d="M-10 -8l11-3 1.5 13-11 2z" fill="url(#gMon)" stroke="#7a9ae0" stroke-width="0.8"/><path d="M-7 -3l3 4.5 5-10" stroke="#c81010" stroke-width="1.7" fill="none"/><g transform="translate(6 0)"><circle r="4.2" fill="#e8a010"/><path d="M0-6v12M-6 0h12M-4.2-4.2l8.4 8.4M4.2-4.2l-8.4 8.4" stroke="#e8a010" stroke-width="2.2"/><circle r="1.5" fill="#7a5200"/><path d="M1 -7v5" stroke="#333" stroke-width="1.5"/></g></g><g transform="translate(26 182.5)"><g opacity="1"><path d="M-3 8.5l9 0 2-1.5-2-1z" fill="#888" opacity="0.5"/><path d="M-6 -9h7l5 5v12h-12z" fill="url(#gDoc)"/><path d="M1 -9v5h5z" fill="#f4f6ff"/></g></g><g transform="translate(60 182.5)"><path d="M-3 8.5l11-1 4.5-4.5-6 1z" fill="#777" opacity="0.45"/><path d="M-10 -6.500q0-1.5 1.5-1.800l5-1q1.5 0 2 1.200l0.8 1.3 6-0.700q1.5 0 1.5 1.500v6.500l-16.5 3z" fill="#fff200"/><path d="M-9.8 -1.500l1.3 9.500q5 1.5 11.5-0.500l6-7.500q-6-2-12 0.500l-3.5 5z" fill="url(#gFold)"/><path d="M-8.5 8q5 1.5 11.5-0.500l6-7.5" stroke="#c8a800" stroke-width="0.7" fill="none"/></g><g transform="translate(96 182.5) scale(0.95)"><path d="M2 9.5l9-1 3.5-5h-5z" fill="#777" opacity="0.5"/><path d="M-9 -8.5h17.5q1 0 1 1v15q0 1-1 1h-15.5l-2-2z" fill="#1a55d8"/><path d="M-5.5 -8.5h12v8.5h-12z" fill="#e4e4ea"/><path d="M-5.5 -8.5h12v2h-12z" fill="#fafafa"/><path d="M-4.5 2.5h10v6h-10z" fill="#b8c0d0"/><path d="M-2.5 3.5h3v4h-3z" fill="#1a55d8"/></g><g transform="translate(131 182.5)"><ellipse cx="-3" cy="8" rx="7" ry="2.5" fill="#b8c0e0"/><path d="M-4 3h3v5h-3z" fill="#8890c0"/><path d="M-10 -8l11-3 1.5 13-11 2z" fill="url(#gMon)" stroke="#7a9ae0" stroke-width="0.8"/><path d="M-7 -3l3 4.5 5-10" stroke="#c81010" stroke-width="1.7" fill="none"/><g transform="translate(6 0)"><circle r="4.2" fill="#e8a010"/><path d="M0-6v12M-6 0h12M-4.2-4.2l8.4 8.4M4.2-4.2l-8.4 8.4" stroke="#e8a010" stroke-width="2.2"/><circle r="1.5" fill="#7a5200"/><path d="M1 -7v5" stroke="#333" stroke-width="1.5"/></g></g><g transform="translate(27 213)"><path d="M-5.5 1.5Q-3 -6 3 -5.5T5.5 5.5" fill="none" stroke="#9c9c9c" stroke-width="2"/><path d="M-9.5 -2.5l1 7.5 7-2z" fill="#9c9c9c"/><path d="M-7 7h9" stroke="#ddd" stroke-width="1"/></g><g transform="translate(61 213)"><g transform="scale(-1 1)"><path d="M-5.5 1.5Q-3 -6 3 -5.5T5.5 5.5" fill="none" stroke="#9c9c9c" stroke-width="2"/><path d="M-9.5 -2.5l1 7.5 7-2z" fill="#9c9c9c"/><path d="M-7 7h9" stroke="#ddd" stroke-width="1"/></g></g><g transform="translate(96 213)"><g opacity="1" fill="none" stroke="#b0b0b0" stroke-width="1.2"><path d="M-4 -9l6 13M4 -9l-6 13"/><circle cx="-3.5" cy="6.5" r="2.4"/><circle cx="3.5" cy="6.5" r="2.4"/></g></g><g transform="translate(130 213)"><g opacity="1"><path d="M-8 -9h7l3 3v10h-10z" fill="#c2c2c2"/><path d="M-3 -4h7l3 3v10h-10z" fill="#c2c2c2" stroke="#ececec" stroke-width="0.6"/><path d="M-1 9.5h9l2-2" stroke="#bbb" fill="none"/></g></g><g transform="translate(166 213)"><g opacity="1"><path d="M-8 -6h12v14h-12z" fill="#b4b4b4"/><path d="M-5 -9h6v4h-6z" fill="#d8d8d8"/><path d="M-2 -2h7l3 3v8h-10z" fill="#d0d0d0" stroke="#e8e8e8" stroke-width="0.5"/></g></g><g transform="translate(25 265.5) scale(1.1)"><path d="M-11 -8l15-3 2 17-15 3z" fill="#e0e0e0" stroke="#9a9a9a" stroke-width="0.6"/><path d="M-9 -10l15-2.5 2 17-15 3z" fill="#fbfbfb" stroke="#aaa" stroke-width="0.6"/><path d="M-8 -9.300l13-2.2" stroke="#555" stroke-width="1" stroke-dasharray="1 0.8"/><path d="M-8.5 -8l2 14" stroke="#888" stroke-width="0.8" stroke-dasharray="1 1"/><g transform="translate(0 0) rotate(-6)"><circle cx="-4" cy="-6" r="2" fill="#c83030"/><circle cx="3" cy="-6" r="2" fill="#c83030"/><circle cx="-0.5" cy="-3.5" r="3.8" fill="#d85050"/><ellipse cx="-0.5" cy="3.5" rx="5" ry="5" fill="#c02828"/><ellipse cx="-0.5" cy="4" rx="2.6" ry="2.8" fill="#f8d0d0"/><circle cx="-5.5" cy="1" r="1.7" fill="#c83030"/><circle cx="4.5" cy="1" r="1.7" fill="#c83030"/><circle cx="-4" cy="7.5" r="1.9" fill="#c83030"/><circle cx="3" cy="7.5" r="1.9" fill="#c83030"/></g><path d="M6 -5h2.500M7.2 -5v3" stroke="#222" stroke-width="1"/></g><g transform="translate(42 265.5)"><path d="M-1.5 -3l3 3-3 3z" fill="#111"/></g><g transform="translate(61 265.5)"><g transform="scale(1)"><rect x="-9" y="-10" width="18" height="20" fill="#080808"/><circle cx="-4" cy="-6" r="2" fill="#ccc"/><circle cx="4" cy="-6" r="2" fill="#ccc"/><circle cx="0" cy="-3.5" r="4.2" fill="#b4b4b4"/><ellipse cx="0" cy="4" rx="5.5" ry="5" fill="#a4a4a4"/><ellipse cx="0" cy="4.5" rx="3" ry="3" fill="#e0e0e0"/><circle cx="-6.5" cy="1" r="1.8" fill="#c4c4c4"/><circle cx="6.5" cy="1" r="1.8" fill="#c4c4c4"/><circle cx="-4.5" cy="8" r="2" fill="#c4c4c4"/><circle cx="4.5" cy="8" r="2" fill="#c4c4c4"/><circle cx="-1.5" cy="-4" r="0.6"/><circle cx="1.5" cy="-4" r="0.6"/></g></g><g transform="translate(95 265) scale(1.05)"><ellipse cx="4" cy="6.5" rx="7" ry="2.6" fill="#fff8c0"/><ellipse cx="-3" cy="6.5" rx="6" ry="2.4" fill="#e01010"/><ellipse cx="-3" cy="7.5" rx="6" ry="2" fill="#901010" opacity="0.5"/><path d="M-3 6l-1.5-7 3.5-5" stroke="#c01010" stroke-width="1.8" fill="none"/><path d="M-5 -9l9 0.5 3 6-7-1.500z" fill="#e81818"/><path d="M4 -8.500l3 6-2.5-0.600z" fill="#ff8080"/></g><g transform="translate(130 266) scale(1.1)"><g transform="translate(-2.5 -3)"><g transform="scale(1.05)"><rect x="-6" y="-7" width="11" height="14" fill="#5a4a18"/><rect x="-6" y="-7" width="11" height="5" fill="#7a8a4a"/><path d="M-4.5 7q0-6 4-6t4 6z" fill="#2a1a08"/><path d="M-3.2 -1.5q0-5.5 2.7-5.5t2.7 5.5q0 2-2.7 2t-2.7-2z" fill="#1a1008"/><ellipse cx="-0.5" cy="-2.4" rx="1.7" ry="2.3" fill="#e8c070"/><path d="M-2 4.5h3.5v1.5h-3.5z" fill="#d8a858"/></g></g><path d="M-2 4l9-5 4.5 2.5-9 6z" fill="#e88818"/><path d="M-2 4l4.5 3.500v3l-4.5-3.500z" fill="#b05808"/><path d="M2.5 7.500l9-6v3l-9 6z" fill="#f8d8a0"/></g><g transform="translate(26 353)"><path d="M-5 7l13-4" stroke="#aaa" stroke-width="1.5"/><path d="M-5.5 7l1.2-3.2 8-11.5 2.3 1.6-8 11.500z" fill="#e01818"/><path d="M-5.5 7l1.2-3.2 2.3 1.600z" fill="#e8c890"/><path d="M-5.5 7l0.5-1.4 1 0.700z" fill="#222"/></g><g transform="translate(42 353)"><path d="M-1.5 -3l3 3-3 3z" fill="#111"/></g><g transform="translate(61 353)"><ellipse cx="3" cy="7" rx="7" ry="2" fill="#999" opacity="0.5"/><path d="M-4 -3l10-1.5 2 9q-4 3.5-9 1.500z" fill="#8aa8a0"/><ellipse cx="1" cy="-2.3" rx="5.2" ry="2.2" fill="#c8d8d4" stroke="#6a8880" stroke-width="0.6"/><path d="M-7 -1q-1-7 5-7.5 4 0 3.5 4-3 0-4.5 2.500t-1 6q-2.5-1-3-5z" fill="#d81818"/><path d="M2 -4q5-3 7 2t-1 7" stroke="#b8c8c4" stroke-width="0.9" fill="none"/></g><g transform="translate(77 353)"><path d="M-1.5 -3l3 3-3 3z" fill="#111"/></g><g transform="translate(97.5 353)"><path d="M-3 8l10-3" stroke="#aaa" stroke-width="1.2" stroke-dasharray="3 1.5"/><circle cx="3" cy="-7" r="2.6" fill="#a01850"/><path d="M1 -5l3 2-1.5 2.5-3-2z" fill="#601030"/><path d="M0 -3.500l2.2 1.5-5.5 7.5-2-0.5 0.3-1.800z" fill="#d8e4ff" stroke="#4a5a90" stroke-width="0.6"/><path d="M-3.5 3l1.5 1-2.5 2.5-0.8-0.600z" fill="#1830c8"/></g><g transform="translate(130 353) scale(1.05)"><ellipse cx="1" cy="7" rx="9" ry="1.8" fill="#999" opacity="0.450"/><path d="M-9 0q-1-7 4-7.5 3 0 3 2.500t3 2q7-1.5 9 2t-3 6q-7 2.5-13 0.5-3-1.5-3-5.500z" fill="#6a4a38"/><path d="M-9 0q-1-7 4-7.5 3 0 3 2.5" stroke="#9a7a68" stroke-width="0.8" fill="none"/><ellipse cx="-5" cy="-3.5" rx="2" ry="1.6" fill="#e8e0d8"/><circle cx="-6" cy="2.5" r="1.3" fill="#e82020"/><circle cx="-3" cy="4" r="1.3" fill="#f08020"/><circle cx="0.5" cy="4.3" r="1.3" fill="#f0e020"/><circle cx="4" cy="3.8" r="1.3" fill="#20c040"/><circle cx="7" cy="2.3" r="1.3" fill="#2050e0"/></g><g transform="translate(147 353)"><path d="M-1.5 -3l3 3-3 3z" fill="#111"/></g><g transform="translate(166 353) scale(1.05)"><ellipse cx="2" cy="7.5" rx="9" ry="1.6" fill="#999" opacity="0.4"/><circle cx="5.5" cy="1" r="5.2" fill="#e8ecf8" stroke="#2a3a90" stroke-width="1"/><path d="M-9 -1l6.5-7 6.5 5.5-2 5.5 2 3-7 1z" fill="#f4e420"/><path d="M-1 0l5-2.5 3.5 4.5-4.5 5-4-3z" fill="#fff060"/><circle cx="9" cy="5" r="0.9" fill="#111"/><circle cx="3" cy="-4" r="0.9" fill="#111"/></g><g transform="translate(25 382.5)"><path d="M-8 9l14-6" stroke="#b8b8b8" stroke-width="2"/><path d="M-8.5 9.500l15-19" stroke="#111" stroke-width="2.6"/><path d="M4.5 -7l2-2.5" stroke="#f4f4f4" stroke-width="2.6"/><path d="M-8.5 9.500l1.8-2.3" stroke="#f8f8f8" stroke-width="2.6"/></g><g transform="translate(24.5 436) scale(0.95)"><path d="M-7 3l10 6-2 1-9-5z" fill="#aaa" opacity="0.6"/><path d="M-8 -9l14 6.5-5 1.5 5 6.5-2.5 2-5-6.5-3 4.500z" fill="#55555f"/><path d="M-8 -9l14 6.5-5 1.500z" fill="#70707c"/></g><g transform="translate(42 436)"><path d="M-1.5 -3l3 3-3 3z" fill="#111"/></g><g transform="translate(60 436) scale(1.05)"><g fill="none" stroke="#333" stroke-width="1.7"><path d="M-9 2a9 9 0 0 1 4-9.5"/><path d="M4 -8.500a9 9 0 0 1 5 8"/><path d="M-7 6a9 9 0 0 0 8 3.5"/></g><path d="M-7.5 -10l4 1-2.5 3z M9.5 2.500l-3.5-2.5 4-1.500z M4 9.500l-4 2 0.5-4.500z" fill="#333"/><path d="M0 -5.500v11M-5.5 0h11" stroke="#333" stroke-width="1.5"/><path d="M0 -7.500l2.5 3h-5zM0 7.500l2.5-3h-5zM-7.5 0l3-2.500v5zM7.5 0l-3-2.500v5z" fill="#333"/><path d="M-9.5 -9.500h4M-9.5 -7.500h4" stroke="#333" stroke-width="1"/><path d="M7 5.500v5M9.5 5.500v5M5.8 7l1.2-1.800M10.7 9l-1.2 1.8" stroke="#333" stroke-width="1"/></g><g transform="translate(96 436)"><path d="M-6 8h14l2-2" stroke="#bbb" stroke-width="1.4" fill="none"/><rect x="-8.5" y="-8.5" width="16.5" height="16.5" fill="#f6f6f6" stroke="#3a3a3a" stroke-width="1.8"/><path d="M-7 5.500h13.5" stroke="#c8c8c8" stroke-width="1.5"/></g><g transform="translate(112 436)"><path d="M-1.5 -3l3 3-3 3z" fill="#111"/></g><g transform="translate(131 436)"><path d="M-7 5h16" stroke="#aaa" stroke-width="1.2"/><path d="M-9 -9h18v4.500h-6.500v13.500h-5v-13.500h-6.500z" fill="#f08a00"/><path d="M-9 -9h18v4.500h-6.500v13.500h-5v-13.500h-6.500z" fill="none" stroke="#f8c060" stroke-width="0.6"/><g fill="#1818c8"><circle cx="-9" cy="-9" r="1.1"/><circle cx="9" cy="-9" r="1.1"/><circle cx="-9" cy="-4.5" r="1.1"/><circle cx="9" cy="-4.5" r="1.1"/><circle cx="-2.5" cy="9" r="1.1"/><circle cx="2.5" cy="9" r="1.1"/><circle cx="0" cy="9.3" r="1"/><circle cx="-4" cy="6.5" r="0.9"/><circle cx="4" cy="6.5" r="0.9"/></g></g><g transform="translate(164 436) scale(1.05)"><path d="M-11 -1l6-6 5 5-6 6z" fill="#f4f4f4" stroke="#b0b0b0" stroke-width="1"/><path d="M-3 3q3-10 9-8 5 2 5 8z" fill="#d0d0d0"/><path d="M-2 3q3-7 8-6M0 3.500q3-5 7-4M3 4q2-3 5-2.5" stroke="#a8a8a8" stroke-width="0.8" fill="none"/><path d="M-8 5.500h19" stroke="#c4c4c4" stroke-width="1.4"/></g><g transform="translate(182.5 436)"><path d="M-1.5 -3l3 3-3 3z" fill="#111"/></g><g transform="translate(25 465.5) scale(1.05)"><path d="M-2 7l11 2 2-2-8-2z" fill="#999" opacity="0.5"/><path d="M2 2l9 4-1 2.5-9-3.500z" fill="#f0d830"/><path d="M-9 -6q0-3 3-3h6l4 3v9l-3 3h-7q-3 0-3-3z" fill="#e8a818"/><path d="M0 -9l4 3v9l-3 3z" fill="#b87808"/><circle cx="-3.5" cy="-1.5" r="4.6" fill="#2a3a90"/><path d="M-8 -0.500a4.6 4.6 0 0 0 9 0z" fill="#d8dcf0"/></g><g transform="translate(61 465.5) scale(0.95)"><rect x="-10" y="-10" width="20" height="20" rx="1.5" fill="#0a8a0a" stroke="#7ad07a" stroke-width="1"/><path d="M-3 -7.500h6v4.500h4.500v6h-4.500v4.500h-6v-4.500h-4.500v-6h4.500z" fill="none" stroke="#fff" stroke-width="1.3"/></g><g transform="translate(96 465.5) scale(0.98)"><defs><linearGradient id="gabc" x1="0" y1="0" x2="1" y2="0.3"><stop offset="0" stop-color="#164a16"/><stop offset="0.450" stop-color="#4aa04a"/><stop offset="1" stop-color="#b8f0b8"/></linearGradient></defs><rect x="-12" y="-11.5" width="24" height="23.5" fill="url(#gabc)"/><path d="M-12 -5h24M-12 5h24M9.5 -11.500v23" stroke="#0a200a" stroke-width="0.9"/><text x="-9.5" y="3" font-size="8.5" font-family="Liberation Sans,sans-serif" fill="#0c2a0c" textLength="18">ABC</text><circle cx="-8" cy="-8.3" r="1.9" fill="#0a1a0a"/><rect x="-3.5" y="-10" width="2.5" height="3.6" fill="#0a1a0a"/><path d="M1.5 -6.500l3-3.5 3 3.500z" fill="#0a1a0a"/><circle cx="-8" cy="8.3" r="1.9" fill="#0a1a0a"/><rect x="-3.5" y="6.5" width="2.5" height="3.6" fill="#0a1a0a"/><path d="M1.5 10.200l3-3.5 3 3.500z" fill="#0a1a0a"/></g><g transform="translate(131 465.5) scale(1.05)"><path d="M-10 -10q10 3 20 0-3 10 0 20-10-3-20 0 3-10 0-20z" fill="#e4e4e4" stroke="#aaa" stroke-width="1"/><g stroke="#b0b0b0" stroke-width="0.7" fill="none"><path d="M-8.5 -4h17M-8 0h16M-8.5 4h17M-4.5 -8.500v17M0 -8v16M4.5 -8.500v17"/><ellipse cx="0" cy="0" rx="4.5" ry="6"/></g></g><g transform="translate(166 465.5) scale(1.05)"><g fill="#f4f4f4" stroke="#aaa" stroke-width="1"><rect x="-8" y="2" width="3.6" height="3.6"/><rect x="-2.5" y="2" width="3.6" height="3.6"/><rect x="-2.5" y="7.5" width="3.6" height="3.6"/><circle cx="3.5" cy="-8" r="1.9"/><circle cx="9" cy="-8" r="1.9"/><circle cx="3" cy="-2.5" r="1.9"/><circle cx="9" cy="-2.5" r="1.9"/><circle cx="6" cy="1.5" r="1.9"/></g><circle cx="6.5" cy="-5" r="0.6" fill="#999"/></g><g transform="translate(25 495.5) scale(1.05)"><path d="M-8 6l5-6.5 5 6 6-2.5" stroke="#222" stroke-width="1.2" fill="none"/><circle cx="-8" cy="6" r="2.3" fill="#ffffa0" stroke="#c8c860" stroke-width="0.5"/><circle cx="-8" cy="6" r="0.8" fill="#222"/><circle cx="-3" cy="-0.5" r="2.3" fill="#ffffa0" stroke="#c8c860" stroke-width="0.5"/><circle cx="-3" cy="-0.5" r="0.8" fill="#222"/><circle cx="1" cy="3.5" r="2.3" fill="#ffffa0" stroke="#c8c860" stroke-width="0.5"/><circle cx="1" cy="3.5" r="0.8" fill="#222"/><circle cx="5" cy="5" r="2.3" fill="#ffffa0" stroke="#c8c860" stroke-width="0.5"/><circle cx="5" cy="5" r="0.8" fill="#222"/><circle cx="8.5" cy="3" r="2.3" fill="#ffffa0" stroke="#c8c860" stroke-width="0.5"/><circle cx="8.5" cy="3" r="0.8" fill="#222"/><rect x="-9.5" y="-10" width="3" height="3" fill="#fff" stroke="#111" stroke-width="0.9"/></g><g transform="translate(61 495.5) scale(1.05)"><g fill="none" stroke="#b0b0b0"><path d="M-9 -1l6-7 5 6 6-5" stroke-width="1.3"/><path d="M-8 4q4-6 8-1t8-2M-7 8q4-5 7-1t8-1" stroke-width="0.8" stroke-dasharray="2 1"/></g></g><g transform="translate(96 495.5) scale(1.05)"><g fill="none" stroke="#a0a0a0"><path d="M-9 -10q9 10 0 20" stroke-width="1.6"/><path d="M-6 -8l7 2M-4 0h9M-6 8l7-2" stroke-width="1"/><path d="M6 -10q7 10 0 20" stroke-width="0.8" stroke-dasharray="1.5 1.5" stroke="#c8c8c8"/></g><g fill="#a0a0a0"><rect x="1" y="-7.5" width="2.4" height="2.4"/><rect x="6" y="-1.2" width="2.4" height="2.4"/><rect x="1" y="5" width="2.4" height="2.4"/><rect x="5" y="-10" width="2" height="2"/></g></g><g transform="translate(131 495.5) scale(1.1)"><path d="M-10 -9l10 5.500q4 3.5 0 7l-10 5.5" fill="none" stroke="#111" stroke-width="1.8"/><path d="M-3 -5.200l3 1.700q4 3.5 0 7l-4 2.2" fill="none" stroke="#f0f070" stroke-width="2"/><path d="M-2 -9l12 9-12 9" fill="none" stroke="#444" stroke-width="0" /><path d="M1 -3.500l10 3.5-10 3.5" fill="none" stroke="#333" stroke-width="1.6"/></g><g transform="translate(166 495.5) scale(1.1)"><path d="M-7 6l13-13" stroke="#ffffa0" stroke-width="3"/><path d="M-11 3.500l7.5 7M-4.5 3l-6.5 8" stroke="#080808" stroke-width="2.4"/><path d="M3.5 -11l7 6.500M10.5 -11.500l-5.5 7.5" stroke="#080808" stroke-width="2.4"/><g fill="none" stroke="#080808" stroke-width="1.5"><circle cx="5.5" cy="5.5" r="2.3"/><circle cx="8.5" cy="2" r="2.3"/><path d="M4 4l-6-5M7 0.500l-8.5-3.5"/></g><path d="M-2.5 -3l4 0.5 1.5 2.5-3.5 0z" fill="#f4f4f4" stroke="#111" stroke-width="0.6"/></g><g transform="translate(25 526) scale(1.1)"><ellipse cx="0" cy="8.5" rx="10" ry="2.5" fill="#888" opacity="0.5"/><path d="M-9.5 -4q0 8 3 11h13q3-3 3-11z" fill="url(#gLil)"/><path d="M-9.5 -4q0 8 3 11h3q-4-4-3-11z" fill="#5050b0" opacity="0.6"/><ellipse cx="0" cy="-4.5" rx="9.5" ry="3" fill="#e8ecff" stroke="#555" stroke-width="1.2"/><path d="M-7 3q7-5 14 0" stroke="#f0e020" stroke-width="1.4" fill="none"/></g><g transform="translate(61 526) scale(1.05)"><g fill="none" stroke="#b0b0b0" stroke-width="1.1"><path d="M-9 6l8-14M-4 -2l6 5M-1 -8.500h6"/><path d="M-8 8l2 3M3 -9q5 1 4 7" stroke-dasharray="1.5 1.5" stroke="#ccc"/></g><path d="M5 -10l3 1.5-3 1.500zM-9.5 4l0.5 3 2.5-1.500z" fill="#b0b0b0"/></g><g transform="translate(96 526) scale(1.05)"><path d="M0 -11v22" stroke="#888" stroke-width="0.9" stroke-dasharray="3 1.2 1 1.2"/><path d="M-1 -8q-5 2-4 7-2 2-1 5-2 3 0 5h5" fill="none" stroke="#a0a0a0" stroke-width="1.1"/><path d="M2 0q5 0 5 4t-4 5" fill="none" stroke="#d0d0d0" stroke-width="1" stroke-dasharray="1.5 1.5"/></g><g transform="translate(131 526) scale(1.05)"><path d="M-2 10l10-1 3-3h-7z" fill="#999" opacity="0.5"/><path d="M-9 -5l8-4 9 2v9l-17 2z" fill="#f8e418"/><path d="M-9 -5l1.5 15q6 1.5 13-1.500l4-6.500q-7-1-12 1.500l-3.5 5z" fill="url(#gFold)"/><path d="M-8 4l13-3 4.5 1.5-4 6q-7 3-13 1.500z" fill="#d8b800"/><path d="M4 -11l1.8 5 5.2 0.3-4 3.2 1.5 5-4.5-3-4.5 3 1.5-5-4-3.2 5.2-0.300z" fill="#f8e820" stroke="#222" stroke-width="1.2"/></g><g transform="translate(25 599) scale(1.1)"><ellipse cx="1" cy="6.5" rx="9" ry="2" fill="#888" opacity="0.350"/><path d="M-9 1q0-3.5 5-3.500l4-3q3-2 4.5 0l3-1.500q2.5 0 2 2.500l-2 2q1 2-1 3l-9 5.500q-3 1-5-1.500z" fill="url(#gGold)"/><path d="M-7 2q3-3 8-1M-6 5q4-2 8-2M3 -5l2 3" stroke="#8a5810" stroke-width="0.8" fill="none"/><path d="M-9.5 -8.500h5l1.5 1.500h-6.500z" fill="#20c0c0" stroke="#111" stroke-width="0.7"/><path d="M-8 -10q1.5-1.5 3 0M-3.5 -10q2-1 2.5 1.5" stroke="#111" stroke-width="0.9" fill="none"/></g><g transform="translate(42 599)"><path d="M-1.5 -3l3 3-3 3z" fill="#111"/></g><g transform="translate(61 598) scale(1.05)"><path d="M-10 0.500l11-8 9 4.5-10 9z" fill="url(#gLil)"/><path d="M-10 0.500l10 5.5" stroke="#5050a8" stroke-width="0.6"/></g><g transform="translate(77 599)"><path d="M-1.5 -3l3 3-3 3z" fill="#111"/></g><g transform="translate(96 599) scale(1.1)"><ellipse cx="1" cy="8" rx="8" ry="1.8" fill="#888" opacity="0.350"/><path d="M-8.5 7q6-1.5 8-8 2 6.5 8.5 8-8 2.5-16.5 0z" fill="url(#gGold)"/><path d="M-8 -3q5-1 7.5-7 2.5 6 8.5 7-4 1.5-6 0-2 2-4 0.5-3 1-6-0.500z" fill="url(#gGold)"/><path d="M-0.5 -2v5" stroke="#555" stroke-width="0.8"/><circle cx="-0.5" cy="3.5" r="1" fill="#222"/></g><g transform="translate(131 599) scale(1.1)"><ellipse cx="1" cy="8.5" rx="7" ry="1.6" fill="#888" opacity="0.350"/><ellipse cx="0" cy="-6" rx="7" ry="4" fill="url(#gGold)"/><path d="M-6.5 5q0-6 6.5-6t6.5 6q0 4-6.5 4t-6.5-4z" fill="#d89048"/><path d="M-4 2l3 4M1 1l3 5M-5 6l8-3" stroke="#f8d8a0" stroke-width="0.7"/><path d="M0 -2v4" stroke="#444" stroke-width="0.8"/><circle cx="0" cy="2.5" r="1" fill="#222"/></g><g transform="translate(166 599) scale(1.1)"><g transform="translate(0 -4) scale(0.780)"><path d="M-9 1q0-3.5 5-3.500l4-3q3-2 4.5 0l3-1.500q2.5 0 2 2.500l-2 2q1 2-1 3l-9 5.500q-3 1-5-1.500z" fill="url(#gGold)"/></g><g transform="translate(0 5) scale(0.780)"><path d="M-9 1q0-3.5 5-3.500l4-3q3-2 4.5 0l3-1.500q2.5 0 2 2.500l-2 2q1 2-1 3l-9 5.500q-3 1-5-1.500z" fill="#e0d0b0" stroke="#b8a888" stroke-width="0.6"/></g><path d="M1 -2v5" stroke="#333" stroke-width="0.8"/><circle cx="1" cy="3.5" r="0.9" fill="#222"/></g><g transform="translate(25 629)"><text x="-7.5" y="8.5" font-size="25" font-style="italic" font-family="Liberation Serif,serif" fill="#f4f4f4" stroke="#c0c0c0" stroke-width="0.9">S</text></g><g transform="translate(61 629) scale(1.1)"><g fill="none" stroke="#cdcdcd" stroke-width="1"><circle r="9.5"/><circle r="6.2"/><path d="M-6.5 -6.500l13 13M6.5 -6.500l-13 13M-9 0l9-9 9 9-9 9z"/><circle cx="-4" cy="-4" r="3.2"/><circle cx="4" cy="-4" r="3.2"/><circle cx="-4" cy="4" r="3.2"/><circle cx="4" cy="4" r="3.2"/></g></g><g transform="translate(96 628) scale(1.1)"><ellipse cx="1" cy="9.5" rx="8" ry="1.5" fill="#888" opacity="0.350"/><path d="M-8 2l9-3 8 3.5-9 4z" fill="#2a3a7a"/><path d="M-8 2l8 4.500v3l-8-4.500z" fill="#3a3a3a"/><path d="M0 6.500l9-4v3l-9 4z" fill="#9a9a9a"/><path d="M-1.5 0.500v4q3 1.5 3-0.500t-3-1" stroke="#f0d020" stroke-width="1.3" fill="none"/><path d="M-6 -9l3-1.5 2.5 2.5 3.5-1 0.5 2.5-4 2.500z" fill="url(#gGold)"/><circle cx="-1.5" cy="-6" r="0.9" fill="#a06810"/></g><g transform="translate(112 629)"><path d="M-1.5 -3l3 3-3 3z" fill="#111"/></g><g transform="translate(131 628) scale(1.1)"><ellipse cx="1" cy="9.5" rx="7" ry="1.5" fill="#888" opacity="0.350"/><path d="M-8 4.500l8-3.5 8 3.5-8 4z" fill="#f0c820"/><path d="M-8 4.500l8 4v1.500l-8-4z" fill="#b08808"/><path d="M0 8.500l8-4v1.500l-8 4z" fill="#d0a010"/><ellipse cx="0" cy="5" rx="2.5" ry="1.3" fill="#c01010"/><path d="M-8 -6l8-3.5 8 3.5-8 4z" fill="#f8d838"/><path d="M-8 -6l8 4v1.300l-8-4z" fill="#b08808"/><path d="M0 -2l8-4v1.300l-8 4z" fill="#d0a010"/><ellipse cx="0" cy="-6" rx="2.6" ry="1.2" fill="#e81010"/><path d="M0 -1v4" stroke="#333" stroke-width="1"/></g><g transform="translate(147 629)"><path d="M-1.5 -3l3 3-3 3z" fill="#111"/></g><g transform="translate(166 629) scale(1.05)"><path d="M-11 10.500h23" stroke="#7878e0" stroke-width="1.4"/><path d="M-10 -8h9.500v17.500h-11z" fill="#b0b0f4"/><path d="M-0.5 -8h9.500l1.5 17.500h-11z" fill="#d4d4e4"/><path d="M-10 -8l-1.5 17.500h2.500l1-17.500z" fill="#8888e0"/><path d="M-6 0q0-10 6.5-10t6.5 6" fill="none" stroke="#f0d010" stroke-width="2.6"/><path d="M3.5 -4.500h7.500l-3.5 5z" fill="#f0d010"/><path d="M-6 0q0-10 6.5-10" fill="none" stroke="#a08800" stroke-width="0.5"/></g><g transform="translate(25 659) scale(1.05)"><ellipse cx="1" cy="9" rx="8" ry="1.8" fill="#888" opacity="0.4"/><path d="M0 -11l3.2 7 8 0.8-6 5.2 2 8-7.2-4.2-7.2 4.2 2-8-6-5.2 8-0.800z" fill="#6a6ad0"/><path d="M0 -11l3.2 7-3.2 5-3.2-5z" fill="#9a9af0"/><path d="M0 1l5.2 2-5.2 2.8-5.2-2.800z" fill="#5050b8"/><circle cx="0" cy="-1.5" r="3.2" fill="#b8b8ff"/></g><g transform="translate(61 658) scale(1.1)"><path d="M-9 -1v-2h5q0-6 5-6t5 6h5v2" fill="none" stroke="#111" stroke-width="1"/><path d="M-10 2l10-4 10 4-10 5z" fill="#c8c8f8"/><path d="M-7 2q3-5 8-3.500t7 3l-8 4z" fill="#a0a0e8"/><path d="M-10 4l10 5 10-5v2l-10 5-10-5z" fill="#e8e8f8" stroke="#8080c0" stroke-width="0.4"/><path d="M-3 6q0-5 3-6t5 2" fill="none" stroke="#e02020" stroke-width="1"/><path d="M-9 6l9 4.5" stroke="#2020a0" stroke-width="0.8"/></g><g transform="translate(96 659) scale(1.1)"><path d="M-9 -2q8-8 18 4l-3 6q-3-7-8-8z" fill="#c86860"/><path d="M-9 -2l5 4q4-1 7 4l3 2q-2-8-7-10z" fill="#e8a098"/><path d="M-9 -2l1.5 3.5 3.5 0.500z" fill="#f0e8c8"/><path d="M3 6l3 2-2.5 0.500q-3-1-2.5-3z" fill="#f0e8c8"/><path d="M-2 2q4 1 5 4" stroke="#a04840" stroke-width="0.6" fill="none"/></g><g transform="translate(112 659)"><path d="M-1.5 -3l3 3-3 3z" fill="#111"/></g><g transform="translate(131 659)"><defs><radialGradient id="gbr" cx="0.5" cy="0.5" r="0.7"><stop offset="0" stop-color="#dfe8f8"/><stop offset="1" stop-color="#4a5a8a"/></radialGradient></defs><path d="M-7 11h18l1-3" stroke="#999" fill="none"/><rect x="-10.5" y="-10.5" width="21" height="21" fill="url(#gbr)"/><g fill="none" stroke="#f4f8ff" stroke-width="0.9" opacity="0.9"><path d="M-4 -6q6-4 7 2t-6 5q-4 3 2 5M2 -2q-5 0-4 4t6 2"/><circle cx="0" cy="1" r="5.5"/></g></g><g transform="translate(166 658) scale(1.1)"><ellipse cx="1" cy="8" rx="9" ry="2" fill="#888" opacity="0.3"/><path d="M-11 3l11-5 11 5-11 5z" fill="#c8c8f4"/><path d="M-11 3l11 5 11-5v1.500l-11 5-11-5z" fill="#a0a0e0"/><path d="M-7 -2l4-6 9-1.5 3 6.5-4 5-9-0.500z" fill="#f4e050"/><path d="M-7 -2l3 3.5 9 0.5 4-5" fill="none" stroke="#d8c030" stroke-width="0.6"/></g><g transform="translate(25 687.5) scale(1.1)"><ellipse cx="2" cy="9" rx="8" ry="1.5" fill="#888" opacity="0.3"/><path d="M-9 -5q4-5 8-2t10 1l-3 3q-5 1-8-1t-5 1z" fill="#e01818"/><path d="M-9 -5l3 3-1 1z" fill="#a01010"/><path d="M-6 5l4-2 4 1 4-1.5 1 3-6 3.5-6-1z" fill="#f0c020"/><path d="M-6 5l5 2 7-2.5" stroke="#a07808" stroke-width="0.6" fill="none"/><path d="M-3 -0.500v3M1 0v2.5" stroke="#222" stroke-width="0.9"/><circle cx="-4" cy="6" r="1" fill="#e8e8f8"/><circle cx="4.5" cy="7" r="0.9" fill="#d0d0f0"/></g><g transform="translate(61 688) scale(1.1)"><path d="M-10 -10q10 3 20 0-3 10 0 20-10-3-20 0 3-10 0-20z" fill="#dcdcdc" stroke="#aaa" stroke-width="1"/><g stroke="#b0b0b0" stroke-width="0.7" fill="none"><path d="M-8.5 -4h17M-8 0h16M-8.5 4h17M-4.5 -8.500v17M0 -8v16M4.5 -8.500v17"/><ellipse cx="0" cy="0" rx="4.5" ry="6"/></g><path d="M-3.5 -6.500q3.5 1.5 7 0v13q-3.5-1.5-7 0z" fill="#bcbcbc"/></g><g transform="translate(96 687) scale(1.05)"><path d="M-8 9l12 1 6-5-6 0z" fill="#999" opacity="0.450"/><path d="M-11 0l10-9 12 5.5-11 7z" fill="url(#gLil)"/><path d="M0 3.500l11-7v3.500l-11 7z" fill="#7070c8"/><path d="M-11 0l11 3.500v3.500l-11-4z" fill="#9090e0"/></g><g transform="translate(131 687) scale(1.1)"><path d="M-6 4l9-3 8 3-9 4z" fill="#a8a8f0"/><path d="M-10 6l14-13 2.5 2.5-14.5 13z" fill="#e8f0e8" stroke="#8a9a8a" stroke-width="0.6"/><path d="M-9 7.500l14-12.5" stroke="#90c090" stroke-width="1"/><path d="M3 -8l4-3 4 4-1 3-3 0.500z" fill="#e8901c"/><path d="M6 -8l2 2" stroke="#fff0d0" stroke-width="1.2"/><path d="M-6 4l8 4 9-4" fill="none" stroke="#7070c0" stroke-width="0.6"/></g><g transform="translate(166 686) scale(1.05)"><ellipse cx="1" cy="9" rx="9" ry="1.8" fill="#888" opacity="0.350"/><path d="M-11 1l10-5 12 5-10 5.500z" fill="#f4d870"/><path d="M-11 1l12 5.500v2l-12-5.500z" fill="#c8a030"/><path d="M1 6.500l10-5.500v2l-10 5.500z" fill="#e0b848"/><path d="M-6 -2q2-7 6-8 5 2 6 8 0 4-5 4t-7-4z" fill="none" stroke="#2a2ac8" stroke-width="1.1"/><g fill="#111"><circle cx="0" cy="-10" r="1.1"/><circle cx="-6" cy="-2" r="1.1"/><circle cx="6" cy="-2" r="1.1"/><circle cx="0" cy="2" r="1.1"/></g></g><g transform="translate(25 719) scale(1.1)"><ellipse cx="3" cy="9" rx="9" ry="2" fill="#fff" stroke="#bbb" stroke-width="0.8"/><circle r="10.5" fill="url(#gBall)"/><g fill="none" stroke="#e8f4ff" stroke-width="0.55" opacity="0.85"><circle r="10"/><ellipse rx="10" ry="4"/><ellipse rx="4" ry="10"/><ellipse rx="7.5" ry="10"/><ellipse rx="10" ry="7.5"/><path d="M-7 -7l14 14M7 -7l-14 14M-10 0h20M0 -10v20"/></g></g><g transform="translate(61 719) scale(1.1)"><path d="M-2 10l10-1 3-3h-7z" fill="#999" opacity="0.450"/><path d="M-9.5 -4q0-3 3-3.500l10-2.500q4 0 4 3v9l-17 2z" fill="#f8e418"/><path d="M-8 4l13-3 5 1.5-4 6q-7 3-13 1.500z" fill="#e0c000"/><path d="M-9.5 -4l1.5 14" stroke="#fff880" stroke-width="1"/><g fill="#4080e0" transform="translate(0 -3)"><path d="M0 0l-1-7 2.5 5zM0 0l6-4-3 5zM0 0l7 2-6 0.500zM0 0l3 6-4-4zM0 0l-5 5 2-5.500zM0 0l-7-1 6-1.500zM0 0l-5-5 5 2.500z"/></g><circle cx="0" cy="-3" r="1.4" fill="#a0c8ff"/></g><g transform="translate(25 772) scale(1.05)"><ellipse cx="0" cy="9" rx="9" ry="1.8" fill="#888" opacity="0.350"/><path d="M-11 4l11-4 11 4-11 5z" fill="#e01030"/><path d="M-11 4l11 5 11-5v1.500l-11 5-11-5z" fill="#901020"/><path d="M-6 -8l6-3 6 3v9l-6 3-6-3z" fill="#b088d8" opacity="0.9"/><path d="M-3 -2h6l1.5 7h-9z" fill="#d05090" opacity="0.8"/><path d="M-6 -8l6 3 6-3" fill="none" stroke="#d8c0f0" stroke-width="0.7"/></g><g transform="translate(61 772) scale(1.05)"><path d="M-11 5l11-4.5 11 4.5-11 5z" fill="#e01010"/><path d="M-4 4h7v4h-7z" fill="#101010"/><path d="M-1.5 5h3.500v2h-3.500z" fill="#e01010"/><path d="M-11 -3.500l11-4.5 11 4.5-11 5z" fill="#b8a8f0" opacity="0.750"/><path d="M-5 -8l5-3 5 3v4l-5 3-5-3z" fill="#7a5ad0"/><path d="M-2 -6.500h4v2.500h-4z" fill="#e8e0f8" opacity="0.7"/></g><g transform="translate(96 772) scale(1.05)"><path d="M-11 5l11-4.5 11 4.5-11 5z" fill="#b4b4b4"/><path d="M-4 4h7v4h-7z" fill="#8a8a8a"/><path d="M-1.5 5h3.500v2h-3.500z" fill="#b4b4b4"/><path d="M-11 -3.500l11-4.5 11 4.5-11 5z" fill="#d8d8d8" opacity="0.750"/><path d="M-5 -8l5-3 5 3v4l-5 3-5-3z" fill="#b0b0b0"/><path d="M-2 -6.500h4v2.500h-4z" fill="#e8e0f8" opacity="0.7"/></g><g transform="translate(262.5 86)"><path d="M3.8 4.2l2.8 2.8" stroke="#e88a20" stroke-width="2.6" stroke-linecap="round"/><circle cx="-1" cy="-1" r="5.6" fill="#dbe8f8" stroke="#5a7ab0" stroke-width="1.1"/><path d="M-4 -1h6M-1 -4v6" stroke="#3a4a70" stroke-width="1.2"/></g><g transform="translate(282 86)"><path d="M3.8 4.2l2.8 2.8" stroke="#e88a20" stroke-width="2.6" stroke-linecap="round"/><circle cx="-1" cy="-1" r="5.6" fill="#dbe8f8" stroke="#5a7ab0" stroke-width="1.1"/><path d="M-4 -1h6" stroke="#3a4a70" stroke-width="1.2"/></g><g transform="translate(301 86)"><path d="M3.8 4.2l2.8 2.8" stroke="#e88a20" stroke-width="2.6" stroke-linecap="round"/><circle cx="-1" cy="-1" r="5.6" fill="#dbe8f8" stroke="#5a7ab0" stroke-width="1.1"/><path d="M-3.5 -2.5q2.5-2.5 5 0t-1 4.5" stroke="#c8a000" stroke-width="1.4" fill="none"/><path d="M-4.5 -4.5v3.5h3.5z" fill="#c8a000"/></g><g transform="translate(327 86)"><path d="M3.8 4.2l2.8 2.8" stroke="#e88a20" stroke-width="2.6" stroke-linecap="round"/><circle cx="-1" cy="-1" r="5.6" fill="#dbe8f8" stroke="#5a7ab0" stroke-width="1.1"/><rect x="-4.2" y="-3.2" width="6.4" height="4.4" fill="#b0c8e8" stroke="#5a7ab0" stroke-width="0.6"/><path d="M-2.6 -2v2.4M0.6 -2v2.4" stroke="#3a4a70" stroke-width="0.8"/></g><g transform="translate(346 86)"><path d="M3.8 4.2l2.8 2.8" stroke="#e88a20" stroke-width="2.6" stroke-linecap="round"/><circle cx="-1" cy="-1" r="5.6" fill="#dbe8f8" stroke="#5a7ab0" stroke-width="1.1"/><rect x="-4" y="-3.5" width="6" height="5" fill="none" stroke="#3a4a70" stroke-width="1.2"/></g><g transform="translate(365.5 86)"><circle cx="-1" cy="-1" r="6" fill="#a8a8a8"/><circle cx="5" cy="3" r="3" fill="#a8a8a8"/><path d="M3 4l5 4.5" stroke="#b8b8b8" stroke-width="2.4" stroke-linecap="round"/></g><g transform="translate(392.5 86.5) scale(0.9)"><path d="M-5 -6v12M5 -6v12" stroke="#6a8ac0" stroke-width="1" stroke-dasharray="1.5 1.2"/><path d="M-2 -3h4v-2.5l5 5.5-5 5.5v-2.5h-4z" fill="#111" transform="translate(-1 0)"/><path d="M-6 -1.5h4v3h-4z" fill="#111"/></g><g transform="translate(411 86.5) scale(0.9)"><path d="M5 -6v12" stroke="#6a8ac0" stroke-width="1.6" stroke-dasharray="1.5 1.2"/><path d="M-6 -2h4v-2.5l5 4.5-5 4.5v-2.5h-4z" fill="#111"/><path d="M-7 -2.5h3v5h-3z" fill="none" stroke="#111" stroke-width="1"/></g><g transform="translate(430 86) scale(0.9)"><path d="M-8 0l8-6v12z" fill="#5068c8"/><path d="M-7 0l7-5v3z" fill="#9ab0f0"/><path d="M4 3l4 4" stroke="#e88a20" stroke-width="2.2" stroke-linecap="round"/><circle cx="1.5" cy="-1" r="4.2" fill="#cfe0f4" stroke="#7a90c0" stroke-width="1"/></g><g transform="translate(1387 124)"><g transform="scale(0.62)"><g opacity="1"><path d="M-3 8.5l9 0 2-1.5-2-1z" fill="#888" opacity="0.5"/><path d="M-6 -9h7l5 5v12h-12z" fill="url(#gDoc)"/><path d="M1 -9v5h5z" fill="#f4f6ff"/></g></g></g><g transform="translate(1413 124)"><g transform="scale(0.64)"><path d="M-3 8.5l11-1 4.5-4.5-6 1z" fill="#777" opacity="0.45"/><path d="M-10 -6.500q0-1.5 1.5-1.800l5-1q1.5 0 2 1.200l0.8 1.3 6-0.700q1.5 0 1.5 1.500v6.500l-16.5 3z" fill="#fff200"/><path d="M-9.8 -1.500l1.3 9.500q5 1.5 11.5-0.500l6-7.500q-6-2-12 0.500l-3.5 5z" fill="url(#gFold)"/><path d="M-8.5 8q5 1.5 11.5-0.500l6-7.5" stroke="#c8a800" stroke-width="0.7" fill="none"/></g></g><g transform="translate(1438 124)"><g transform="scale(0.6)"><path d="M2 9.5l9-1 3.5-5h-5z" fill="#777" opacity="0.5"/><path d="M-9 -8.5h17.5q1 0 1 1v15q0 1-1 1h-15.5l-2-2z" fill="#1a55d8"/><path d="M-5.5 -8.5h12v8.5h-12z" fill="#e4e4ea"/><path d="M-5.5 -8.5h12v2h-12z" fill="#fafafa"/><path d="M-4.5 2.5h10v6h-10z" fill="#b8c0d0"/><path d="M-2.5 3.5h3v4h-3z" fill="#1a55d8"/></g></g><g transform="translate(1465.5 124)"><path d="M-5 -6l5-1 4 4 1 9-7 0-1-6z" fill="#c8a070"/><path d="M-5 -6l3 3 0 9-1 0-1-6z" fill="#a07840"/><path d="M1 7l5-1 1-2" stroke="#999" fill="none"/></g><g transform="translate(1492 124)"><path d="M-6 -6h10v10h-10z" fill="url(#gGrey)"/><path d="M-3 6h9l2-3" stroke="#aaa" fill="none"/><path d="M4 -6v10h-10" stroke="#888" fill="none" stroke-width="0.8"/></g><g transform="translate(1519 124)"><g transform="scale(0.8)"><rect x="-6" y="-7" width="11" height="14" fill="#5a4a18"/><rect x="-6" y="-7" width="11" height="5" fill="#7a8a4a"/><path d="M-4.5 7q0-6 4-6t4 6z" fill="#2a1a08"/><path d="M-3.2 -1.5q0-5.5 2.7-5.5t2.7 5.5q0 2-2.7 2t-2.7-2z" fill="#1a1008"/><ellipse cx="-0.5" cy="-2.4" rx="1.7" ry="2.3" fill="#e8c070"/><path d="M-2 4.5h3.5v1.5h-3.5z" fill="#d8a858"/></g><path d="M-1 3l7-1 2 5-9 1z" fill="#7a7ae0"/><path d="M-1 3l7-1 0.5 1-7 1z" fill="#b0b0ff"/></g><g transform="translate(1545 124)"><path d="M-4 -3h8l-1 9h-6z" fill="#4a8af0"/><ellipse cx="0" cy="-3" rx="4.3" ry="1.6" fill="#9ac4ff" stroke="#3a70d8" stroke-width="0.7"/><path d="M-2 -1l0.5 6" stroke="#b8d8ff" stroke-width="1"/></g><g transform="translate(1571 124) scale(0.9)"><rect x="-7" y="-7.5" width="14" height="15" fill="#f8f8f8" stroke="#d0d0d0" stroke-width="0.6"/><g transform="translate(-2.5 1.5) scale(0.95)"><circle cx="0" cy="-2" r="4.6" fill="url(#gBulb)"/><path d="M-2.2 1.5h4.4l-0.6 3h-3.2z" fill="#e89820"/><path d="M-1.6 4.5h3.2v2.5h-3.2z" fill="#5a3010"/><circle cx="-1.3" cy="-3.5" r="1.4" fill="#fffbe0"/></g><g transform="translate(3 -1.5) scale(0.95)"><circle cx="0" cy="-2" r="4.6" fill="url(#gBulb)"/><path d="M-2.2 1.5h4.4l-0.6 3h-3.2z" fill="#e89820"/><path d="M-1.6 4.5h3.2v2.5h-3.2z" fill="#5a3010"/><circle cx="-1.3" cy="-3.5" r="1.4" fill="#fffbe0"/></g></g><g transform="translate(1390 145)"><g transform="scale(0.9)"><rect x="-6" y="-7" width="11" height="14" fill="#5a4a18"/><rect x="-6" y="-7" width="11" height="5" fill="#7a8a4a"/><path d="M-4.5 7q0-6 4-6t4 6z" fill="#2a1a08"/><path d="M-3.2 -1.5q0-5.5 2.7-5.5t2.7 5.5q0 2-2.7 2t-2.7-2z" fill="#1a1008"/><ellipse cx="-0.5" cy="-2.4" rx="1.7" ry="2.3" fill="#e8c070"/><path d="M-2 4.5h3.5v1.5h-3.5z" fill="#d8a858"/></g></g><g transform="translate(1386 213)"><g transform="scale(0.62)"><g opacity="1"><path d="M-3 8.5l9 0 2-1.5-2-1z" fill="#888" opacity="0.5"/><path d="M-6 -9h7l5 5v12h-12z" fill="url(#gDoc)"/><path d="M1 -9v5h5z" fill="#f4f6ff"/></g></g></g><g transform="translate(1410 213)"><g transform="scale(0.64)"><path d="M-3 8.5l11-1 4.5-4.5-6 1z" fill="#777" opacity="0.45"/><path d="M-10 -6.500q0-1.5 1.5-1.800l5-1q1.5 0 2 1.200l0.8 1.3 6-0.700q1.5 0 1.5 1.500v6.500l-16.5 3z" fill="#fff200"/><path d="M-9.8 -1.500l1.3 9.500q5 1.5 11.5-0.500l6-7.500q-6-2-12 0.500l-3.5 5z" fill="url(#gFold)"/><path d="M-8.5 8q5 1.5 11.5-0.500l6-7.5" stroke="#c8a800" stroke-width="0.7" fill="none"/></g></g><g transform="translate(1432 213)"><g transform="scale(0.6)"><path d="M2 9.5l9-1 3.5-5h-5z" fill="#777" opacity="0.5"/><path d="M-9 -8.5h17.5q1 0 1 1v15q0 1-1 1h-15.5l-2-2z" fill="#1a55d8"/><path d="M-5.5 -8.5h12v8.5h-12z" fill="#e4e4ea"/><path d="M-5.5 -8.5h12v2h-12z" fill="#fafafa"/><path d="M-4.5 2.5h10v6h-10z" fill="#b8c0d0"/><path d="M-2.5 3.5h3v4h-3z" fill="#1a55d8"/></g></g><g transform="translate(1455.5 213)"><path d="M-5 -6l5-1 4 4 1 9-7 0-1-6z" fill="#c8a070"/><path d="M-5 -6l3 3 0 9-1 0-1-6z" fill="#a07840"/><path d="M1 7l5-1 1-2" stroke="#999" fill="none"/></g><g transform="translate(1479 213)"><path d="M-7 3l7-3 7 3-7 4z" fill="#d01010"/><path d="M-2.5 3h5v2h-5z" fill="#ffe020"/><path d="M-7 -3l7-3.5 7 3.5-7 4z" fill="#8a8af0" opacity="0.9"/></g><g transform="translate(1502 213) scale(0.9)"><path d="M-4.5 -7h9v14h-9z" fill="#b8c8e8"/><path d="M-4.5 -7h9v14h-9z" fill="none" stroke="#dfe6f4" stroke-width="0.6"/><g transform="translate(0.5 1.5) scale(0.85)"><circle cx="0" cy="-2" r="4.6" fill="url(#gBulb)"/><path d="M-2.2 1.5h4.4l-0.6 3h-3.2z" fill="#e89820"/><path d="M-1.6 4.5h3.2v2.5h-3.2z" fill="#5a3010"/><circle cx="-1.3" cy="-3.5" r="1.4" fill="#fffbe0"/></g></g><g transform="translate(1526 213)"><g transform="scale(0.65)"><rect x="-9" y="-10" width="18" height="20" fill="#080808"/><circle cx="-4" cy="-6" r="2" fill="#ccc"/><circle cx="4" cy="-6" r="2" fill="#ccc"/><circle cx="0" cy="-3.5" r="4.2" fill="#b4b4b4"/><ellipse cx="0" cy="4" rx="5.5" ry="5" fill="#a4a4a4"/><ellipse cx="0" cy="4.5" rx="3" ry="3" fill="#e0e0e0"/><circle cx="-6.5" cy="1" r="1.8" fill="#c4c4c4"/><circle cx="6.5" cy="1" r="1.8" fill="#c4c4c4"/><circle cx="-4.5" cy="8" r="2" fill="#c4c4c4"/><circle cx="4.5" cy="8" r="2" fill="#c4c4c4"/><circle cx="-1.5" cy="-4" r="0.6"/><circle cx="1.5" cy="-4" r="0.6"/></g></g><g transform="translate(1548 213)"><path d="M-4 -3h8l-1 9h-6z" fill="#4a8af0"/><ellipse cx="0" cy="-3" rx="4.3" ry="1.6" fill="#9ac4ff" stroke="#3a70d8" stroke-width="0.7"/><path d="M-2 -1l0.5 6" stroke="#b8d8ff" stroke-width="1"/></g><g transform="translate(1571 213) scale(0.9)"><rect x="-7" y="-7.5" width="14" height="15" fill="#f8f8f8" stroke="#d0d0d0" stroke-width="0.6"/><g transform="translate(-2.5 1.5) scale(0.95)"><circle cx="0" cy="-2" r="4.6" fill="url(#gBulb)"/><path d="M-2.2 1.5h4.4l-0.6 3h-3.2z" fill="#e89820"/><path d="M-1.6 4.5h3.2v2.5h-3.2z" fill="#5a3010"/><circle cx="-1.3" cy="-3.5" r="1.4" fill="#fffbe0"/></g><g transform="translate(3 -1.5) scale(0.95)"><circle cx="0" cy="-2" r="4.6" fill="url(#gBulb)"/><path d="M-2.2 1.5h4.4l-0.6 3h-3.2z" fill="#e89820"/><path d="M-1.6 4.5h3.2v2.5h-3.2z" fill="#5a3010"/><circle cx="-1.3" cy="-3.5" r="1.4" fill="#fffbe0"/></g></g><g transform="translate(1390 234.5) scale(0.95)"><rect x="-7" y="-7" width="14" height="13" fill="#6a7a9a"/><rect x="-7" y="-7" width="14" height="5" fill="#4a5a7a"/><path d="M-6 -1l6-3 6 4-6 4z" fill="#e8c030"/><path d="M-6 -1l6 5v1.5l-6-5z" fill="#a88010"/><rect x="-7" y="6" width="14" height="1.5" fill="#b8c8e8"/></g><g transform="translate(1416 235)"><path d="M-7 3q1-10 8-9 6 1 7 7l-4 1q-1-4-4-4.5-3.5-0.5-4 5z" fill="url(#gGold)"/><path d="M-5 4q1-6 5-5.5 3 0.5 3 4l-3 2z" fill="#8a8ad8"/><path d="M-8 6h5M-5.5 3.500v5" stroke="#111" stroke-width="1"/></g><rect x="1564" y="227.5" width="14" height="15" fill="#dcdcdc" stroke="#f4f4f4" stroke-width="0.8"/><g transform="translate(1571 235.5)"><g transform="translate(0 0) scale(0.95)"><circle cx="0" cy="-2" r="4.6" fill="url(#gBulb)"/><path d="M-2.2 1.5h4.4l-0.6 3h-3.2z" fill="#e89820"/><path d="M-1.6 4.5h3.2v2.5h-3.2z" fill="#5a3010"/><circle cx="-1.3" cy="-3.5" r="1.4" fill="#fffbe0"/></g></g></svg>
<svg style="left:0;top:0" width="1600" height="900" class="ov"><defs><radialGradient id="pgB" gradientUnits="userSpaceOnUse" cx="799.5" cy="671.7" r="31"><stop offset="0.3" stop-color="#7c7c7c"/><stop offset="0.55" stop-color="#bcbcbc"/><stop offset="0.8" stop-color="#ececec"/><stop offset="1" stop-color="#fff"/></radialGradient><radialGradient id="pgR" gradientUnits="userSpaceOnUse" cx="799.5" cy="671.7" r="51"><stop offset="0.7" stop-color="#a4a4a4"/><stop offset="0.84" stop-color="#e0e0e0"/><stop offset="1" stop-color="#fff"/></radialGradient><radialGradient id="pgT" gradientUnits="userSpaceOnUse" cx="799.6" cy="299.8" r="19"><stop offset="0.3" stop-color="#707070"/><stop offset="0.6" stop-color="#c4c4c4"/><stop offset="1" stop-color="#fff"/></radialGradient><filter id="rS" x="-20%" y="-20%" width="140%" height="140%" color-interpolation-filters="sRGB"><feColorMatrix in="SourceGraphic" type="luminanceToAlpha" result="h0"/><feGaussianBlur in="h0" stdDeviation="0.8" result="ha"/><feGaussianBlur in="h0" stdDeviation="1.2" result="hb"/><feComposite in="ha" in2="hb" operator="arithmetic" k1="0" k2="0.5" k3="0.5" k4="0" result="h"/><feDiffuseLighting in="h" surfaceScale="2.8" diffuseConstant="1" lighting-color="#f7f7f7" result="lit"><feDistantLight azimuth="90" elevation="88"/></feDiffuseLighting><feComponentTransfer in="lit" result="lit2"><feFuncR type="gamma" exponent="1.0"/><feFuncG type="gamma" exponent="1.0"/><feFuncB type="gamma" exponent="1.0"/></feComponentTransfer><feComposite in="lit2" in2="SourceGraphic" operator="arithmetic" k1="1" k2="0" k3="0" k4="0" result="cut"/><feMorphology in="SourceAlpha" operator="erode" radius="0.5" result="er"/><feComposite in="SourceAlpha" in2="er" operator="out" result="edge"/><feFlood flood-color="#2a2a2a" flood-opacity="0.15"/><feComposite in2="edge" operator="in" result="edgec"/><feMerge><feMergeNode in="cut"/><feMergeNode in="edgec"/></feMerge></filter><filter id="rM" x="-20%" y="-20%" width="140%" height="140%" color-interpolation-filters="sRGB"><feColorMatrix in="SourceGraphic" type="luminanceToAlpha" result="h0"/><feGaussianBlur in="h0" stdDeviation="1.4" result="ha"/><feGaussianBlur in="h0" stdDeviation="2" result="hb"/><feComposite in="ha" in2="hb" operator="arithmetic" k1="0" k2="0.5" k3="0.5" k4="0" result="h"/><feDiffuseLighting in="h" surfaceScale="5.2" diffuseConstant="1" lighting-color="#f7f7f7" result="lit"><feDistantLight azimuth="90" elevation="88"/></feDiffuseLighting><feComponentTransfer in="lit" result="lit2"><feFuncR type="gamma" exponent="1.0"/><feFuncG type="gamma" exponent="1.0"/><feFuncB type="gamma" exponent="1.0"/></feComponentTransfer><feComposite in="lit2" in2="SourceGraphic" operator="arithmetic" k1="1" k2="0" k3="0" k4="0" result="cut"/><feMorphology in="SourceAlpha" operator="erode" radius="0.5" result="er"/><feComposite in="SourceAlpha" in2="er" operator="out" result="edge"/><feFlood flood-color="#2a2a2a" flood-opacity="0.15"/><feComposite in2="edge" operator="in" result="edgec"/><feMerge><feMergeNode in="cut"/><feMergeNode in="edgec"/></feMerge></filter><filter id="rL" x="-20%" y="-20%" width="140%" height="140%" color-interpolation-filters="sRGB"><feColorMatrix in="SourceGraphic" type="luminanceToAlpha" result="h0"/><feGaussianBlur in="h0" stdDeviation="2" result="ha"/><feGaussianBlur in="h0" stdDeviation="3" result="hb"/><feComposite in="ha" in2="hb" operator="arithmetic" k1="0" k2="0.5" k3="0.5" k4="0" result="h"/><feDiffuseLighting in="h" surfaceScale="7.5" diffuseConstant="1" lighting-color="#f7f7f7" result="lit"><feDistantLight azimuth="90" elevation="88"/></feDiffuseLighting><feComponentTransfer in="lit" result="lit2"><feFuncR type="gamma" exponent="1.0"/><feFuncG type="gamma" exponent="1.0"/><feFuncB type="gamma" exponent="1.0"/></feComponentTransfer><feComposite in="lit2" in2="SourceGraphic" operator="arithmetic" k1="1" k2="0" k3="0" k4="0" result="cut"/><feMorphology in="SourceAlpha" operator="erode" radius="0.5" result="er"/><feComposite in="SourceAlpha" in2="er" operator="out" result="edge"/><feFlood flood-color="#2a2a2a" flood-opacity="0.15"/><feComposite in2="edge" operator="in" result="edgec"/><feMerge><feMergeNode in="cut"/><feMergeNode in="edgec"/></feMerge></filter><filter id="rX" x="-20%" y="-20%" width="140%" height="140%" color-interpolation-filters="sRGB"><feColorMatrix in="SourceGraphic" type="luminanceToAlpha" result="h0"/><feGaussianBlur in="h0" stdDeviation="3.2" result="ha"/><feGaussianBlur in="h0" stdDeviation="4.8" result="hb"/><feComposite in="ha" in2="hb" operator="arithmetic" k1="0" k2="0.5" k3="0.5" k4="0" result="h"/><feDiffuseLighting in="h" surfaceScale="12" diffuseConstant="1" lighting-color="#f7f7f7" result="lit"><feDistantLight azimuth="90" elevation="88"/></feDiffuseLighting><feComponentTransfer in="lit" result="lit2"><feFuncR type="gamma" exponent="1.0"/><feFuncG type="gamma" exponent="1.0"/><feFuncB type="gamma" exponent="1.0"/></feComponentTransfer><feComposite in="lit2" in2="SourceGraphic" operator="arithmetic" k1="1" k2="0" k3="0" k4="0" result="cut"/><feMorphology in="SourceAlpha" operator="erode" radius="0.5" result="er"/><feComposite in="SourceAlpha" in2="er" operator="out" result="edge"/><feFlood flood-color="#2a2a2a" flood-opacity="0.15"/><feComposite in2="edge" operator="in" result="edgec"/><feMerge><feMergeNode in="cut"/><feMergeNode in="edgec"/></feMerge></filter></defs><g filter="url(#rL)"><path d="M712.2 232.5C715.4 233.2 715.9 231.4 722 234.6C728.1 237.7 725.3 235.7 730.6 241.9C735.9 248.1 733.8 244 737.9 253.3C742 262.6 742 261.8 742.8 269.8C743.6 277.7 743.2 277.1 740.3 277.1C737.5 277.1 738.5 275.7 734.2 269.8C729.9 263.9 732 264.9 727.5 259.4C723 253.9 724.6 256.5 720.8 253.3C717 250 718.9 253.4 716.1 249.6C713.4 245.8 713.9 247.6 712.6 241.9C711.3 236.2 712.3 235.6 712.2 232.5z" fill="#fff" stroke="#fff" stroke-width="1.3" stroke-linejoin="round"/></g><g filter="url(#rM)"><path d="M730.6 233.1C732.6 235 732.7 234.1 736.7 239C740.7 243.9 739.9 240.8 742.5 247.8C745.2 254.8 745.1 255.1 744.6 260C744.1 264.9 743.8 265.3 740.9 262.4C738.1 259.6 739.7 258.4 736.1 251.4C732.4 244.5 731.8 247.8 729.9 241.7C728.1 235.6 730.4 235.9 730.6 233.1z" fill="#fff" stroke="#fff" stroke-width="1.3" stroke-linejoin="round"/></g><g filter="url(#rL)"><path d="M711.6 256.4C712.3 255 711.7 254.3 713.7 252.2C715.7 250.1 713.9 250.1 717.7 250C721.5 249.9 719.8 248.6 725.1 252C730.4 255.4 728.9 253.2 733.6 260.2C738.3 267.2 738.1 264.6 739.1 273C740.1 281.4 740.1 282.6 736.7 285.2C733.2 287.9 731.2 285 728.7 280.9C726.3 276.9 730.1 278.2 729.3 273C728.5 267.8 729.5 270.1 726.3 265.4C723 260.7 724.4 262 719.6 258.9C714.7 255.9 714.2 257.2 711.6 256.4z" fill="#fff" stroke="#fff" stroke-width="1.3" stroke-linejoin="round"/></g><g filter="url(#rM)"><path d="M775.2 233.1C772.9 233.7 773.5 232.9 768.4 234.9C763.4 237 765.6 235.8 759.9 239.2C754.2 242.7 755 240 751.3 245.3C747.7 250.6 749.1 249.4 748.9 255.1C748.7 260.8 749.1 262 750.7 262.4C752.4 262.9 750.3 260.6 753.8 256.3C757.2 252.1 756.2 253.3 761.1 249.6C766 245.9 764.4 248.4 768.4 245.3C772.5 242.3 771.1 244.5 773.3 240.4C775.6 236.4 774.6 235.5 775.2 233.1z" fill="#fff" stroke="#fff" stroke-width="1.3" stroke-linejoin="round"/></g><g filter="url(#rM)"><path d="M767.5 256.3C767.3 254.8 768.5 254.1 767 251.7C765.5 249.3 766.4 249.4 762.9 249.2C759.4 249.1 760.5 248.2 756.5 251.2C752.4 254.2 753.6 252.4 750.7 258.2C747.9 264 748.6 262.6 747.9 268.6C747.2 274.5 747.3 274.7 748.6 275.9C750 277.1 749.6 276.2 751.9 272.2C754.3 268.2 752.5 268.1 755.6 263.9C758.7 259.8 757.4 262.3 761.4 259.8C765.3 257.2 765.5 257.5 767.5 256.3z" fill="#fff" stroke="#fff" stroke-width="1.3" stroke-linejoin="round"/></g><g filter="url(#rL)"><path d="M741.6 236.3L741.5 237.5L741.5 239.2L741.4 241.1L741.4 243.2L741.3 245.2L741.2 247.1L741 248.9L740.8 250.6L740.5 252.3L740.3 254L740 255.7L739.6 257.4L739 259.2L738.4 261.1L737.8 263L737.1 264.9L736.4 266.6L735.6 268.3L734.8 269.9L733.9 271.5L733 273.1L732 274.7L730.9 276.1L729.8 277.5L728.9 279L728 280.5L727 281.8L726 283.1L725 284.2L724.1 285.2L723.3 286.1L722.4 286.9L721.6 287.6L720.8 288.1L720.1 288.6L719.4 288.9L718.7 289.2L717.9 289.4L717 289.5L716.1 289.4L715.2 289.3L714.4 289.2L713.7 288.8L712.9 288.3L712.1 287.6L711.4 286.9L710.8 286.2L710.4 285.5L710.1 284.8L709.9 283.8L709.8 282.7L709.8 281.6L709.9 280.7L710 280L710.3 279.4L710.7 278.7L711.3 278.1L712 277.5L712.7 277L713.2 276.7L713.6 276.6L714.3 276.5L715.3 276.7L716.3 276.9L717.3 277.1L718.1 277.2L719.1 273.2L718.5 273L717.6 272.6L716.4 272.2L715 271.8L713.4 271.6L711.8 271.8L710.3 272.3L709 273L707.7 273.9L706.5 275L705.5 276.3L704.6 277.7L704.1 279.3L703.7 281L703.6 282.7L703.6 284.4L703.8 286.2L704.2 287.8L704.9 289.5L705.7 291L706.7 292.4L707.9 293.7L709.1 294.9L710.5 295.9L712 296.9L713.6 297.7L715.3 298.3L717.1 298.8L719 299.1L720.9 299.1L722.9 298.9L724.8 298.4L726.7 297.8L728.5 297.1L730.3 296.1L732.1 295.1L733.8 293.7L735.5 292.3L737.1 290.7L738.6 289.1L740.1 287.3L741.5 285.6L742.7 283.6L743.8 281.6L744.8 279.5L745.8 277.3L746.7 275.1L747.5 272.8L748.1 270.5L748.7 268.2L749.1 265.8L749.4 263.6L749.7 261.4L749.9 259.3L750.1 257.2L750.3 255.2L750.4 253.2L750.5 251.3L750.5 249.4L750.5 247.6L750.5 245.5L750.5 243.3L750.5 241.2L750.4 239.2L750.4 237.5L750.4 236.3z" fill="#fff" stroke="#fff" stroke-width="1.3" stroke-linejoin="round"/><circle cx="718.6" cy="275.2" r="2.1" fill="#fff"/><circle cx="746" cy="236.3" r="4.4" fill="#fff"/><path d="M750.5 251.6L750.5 250.5L750.6 249L750.7 247.3L750.8 245.5L750.9 243.7L751.1 242.2L751.3 240.8L751.6 239.4L751.9 238L752.2 236.6L752.6 235.2L753.1 233.9L753.6 232.5L754.1 231.1L754.7 229.7L755.3 228.3L756 226.9L756.7 225.5L757.4 224.1L758.2 222.8L759 221.4L759.9 220.1L760.8 218.9L761.7 217.7L762.8 216.4L764 215.2L765.2 214L766.4 212.9L767.6 211.8L768.7 211L770 210.2L771.2 209.4L772.5 208.7L773.8 208.2L775.1 207.7L776.4 207.3L777.7 206.9L779.1 206.6L780.4 206.4L781.6 206.2L782.7 206.2L783.6 206.3L784.5 206.3L785.4 206.5L786.3 206.7L787.2 207.1L788 207.4L788.6 207.8L789.2 208.2L789.9 208.9L790.6 209.6L791.2 210.5L791.6 211.3L791.9 211.9L792 212.5L791.9 213.4L791.6 214.5L791.2 215.5L790.8 216.4L790.4 217.1L790 217.6L789.3 218.1L788.5 218.5L787.7 218.9L786.9 219.1L786.4 219.2L786 219.2L785.3 218.9L784.6 218.6L783.8 218.1L783.3 217.6L783 217.3L782.8 217L782.7 216.3L782.8 215.4L782.8 214.3L782.9 213.3L783 212.5L778.4 212.1L778.3 212.7L778.1 213.7L777.9 214.9L777.8 216.4L777.9 218L778.4 219.6L779.2 221L780.3 222.1L781.4 223.1L782.8 224L784.3 224.6L785.9 225L787.6 225.1L789.2 224.9L790.8 224.4L792.4 223.8L794 222.9L795.4 221.8L796.6 220.5L797.6 219L798.5 217.3L799.2 215.5L799.8 213.6L800 211.6L799.9 209.5L799.6 207.5L799 205.6L798.2 203.7L797.2 201.9L796 200.3L794.5 198.8L792.8 197.6L791 196.5L789.2 195.6L787.2 194.9L785.1 194.4L782.9 194.3L780.7 194.4L778.6 194.6L776.6 195L774.6 195.5L772.7 196.1L770.8 196.9L769 197.7L767.2 198.7L765.4 199.8L763.7 201L762 202.2L760.4 203.6L758.9 205.1L757.5 206.7L756.1 208.2L754.8 209.8L753.6 211.4L752.5 213L751.4 214.6L750.5 216.3L749.6 217.9L748.7 219.5L747.9 221.1L747.2 222.8L746.5 224.5L745.8 226.1L745.2 227.8L744.7 229.5L744.2 231.1L743.8 232.8L743.4 234.5L743 236.1L742.8 237.8L742.5 239.4L742.3 241.1L742.2 243L742 245L742 247L742 248.8L741.9 250.3L741.9 251.3z" fill="#fff" stroke="#fff" stroke-width="1.3" stroke-linejoin="round"/><circle cx="780.7" cy="212.3" r="2.3" fill="#fff"/><circle cx="746.2" cy="251.4" r="4.3" fill="#fff"/></g><g filter="url(#rM)"><circle cx="715.9" cy="282.4" r="5.4" fill="#fff"/></g><g filter="url(#rM)"><circle cx="787" cy="212.9" r="6.1" fill="#fff"/></g><g filter="url(#rS)"><rect x="715.3" y="309" width="12.6" height="130" fill="#fff"/><path d="M716 330l11 9M716 352l11 9M716 374l11 9M716 396l11 9M716 418l11 9" stroke="#d0d0d0" stroke-width="0.8"/></g><g filter="url(#rM)"><rect x="708" y="297.4" width="26.8" height="6.3" rx="3" fill="#fff"/></g><g filter="url(#rM)"><rect x="708" y="304.1" width="26.8" height="6.3" rx="3" fill="#fff"/></g><g filter="url(#rX)"><path d="M786.2 284.2C784.5 280.3 783.9 284 778.2 286.7C772.5 289.4 772.1 290.5 769.1 292.3C770.1 293.4 773.9 292.7 772.1 295.6C770.3 298.5 768.5 296.8 763.6 301.1C758.6 305.5 759.3 306.2 757.2 308.7C758.7 309.5 762 307.5 761.7 311.1C761.5 314.7 759.4 314.2 756.5 319.4C753.5 324.7 754.1 324.4 752.9 326.8C754.4 327.5 756.5 325.7 757.4 329C758.3 332.2 755.2 332.4 755.6 336.6C756 340.7 756.2 338.2 758.7 341.4C761.1 344.7 759.7 342.1 762.9 346.3C766.2 350.6 764.8 353.1 768.4 354.3C772.1 355.5 771.8 354.3 773.9 350C776.1 345.7 774 347.6 774.8 341.4C775.6 335.3 774.8 338.2 776.4 331.7C777.9 325.1 776.8 327.8 779.4 321.9C782.1 316 782.3 318.4 784.3 313.9C786.4 309.5 786 313.5 785.6 308.4C785.1 303.4 782.9 306.7 783.1 298.7C783.3 290.6 787.8 288.2 786.2 284.2z" fill="#d4d4d4" stroke="#d4d4d4" stroke-width="1.3" stroke-linejoin="round"/></g><g filter="url(#rM)"><path d="M770.2 337.9L770.2 339.4L770.2 341.3L770.2 343.6L770.1 345.8L769.9 347.9L769.7 349.5L769.3 350.8L768.9 352.2L768.4 353.4L767.8 354.4L767.2 355.4L766.5 356.1L765.7 356.7L764.8 357.3L763.7 357.7L762.7 358.1L761.7 358.2L760.9 358.3L760.1 358.1L759.1 357.8L758.1 357.2L757.1 356.6L756.3 355.9L755.8 355.3L755.5 354.8L755.2 354L755 353.1L755 352.2L755 351.3L755.1 350.7L755.2 350.3L755.7 349.8L756.4 349.2L757.1 348.7L757.9 348.1L758.4 347.7L756.5 344.9L756 345.2L755.2 345.6L754.2 346.1L753.1 346.9L752 347.9L751.2 349.2L750.8 350.5L750.6 351.9L750.5 353.4L750.7 355L751 356.5L751.7 358L752.7 359.3L753.9 360.5L755.3 361.5L756.8 362.4L758.4 363.2L760.1 363.6L761.9 363.7L763.7 363.6L765.4 363.2L767.2 362.7L768.8 361.9L770.4 360.9L771.8 359.7L773.1 358.4L774.2 356.9L775.2 355.3L776.2 353.5L777 351.6L777.7 349.4L778.2 346.8L778.6 344.3L778.9 342L779.2 340.1L779.4 338.7z" fill="#fff" stroke="#fff" stroke-width="1.3" stroke-linejoin="round"/><circle cx="757.4" cy="346.3" r="1.7" fill="#fff"/><circle cx="774.8" cy="338.3" r="4.6" fill="#fff"/></g><g filter="url(#rM)"><circle cx="760.7" cy="351" r="4.6" fill="#fff"/></g><g filter="url(#rX)"><path d="M784.1 378.4C772.4 388.3 760.7 395.5 748.6 408.2C736.6 421 746.7 410.9 747.9 416.6C749.1 422.3 749.1 421.9 752.3 425.4C755.6 428.9 755.9 426.5 757.7 427.1C769.5 414.9 781.7 402.4 793.5 390.3C790.4 386.4 787.2 382.3 784.1 378.4z" fill="#fff" stroke="#fff" stroke-width="1.3" stroke-linejoin="round"/></g><g filter="url(#rL)"><path d="M799.2 327.1C797.6 330.4 797.2 328.9 794.4 337.1C791.5 345.3 792.9 341.2 790.7 351.8C788.5 362.4 789.5 360.4 787.8 368.9C786 377.4 786.1 374.5 785.3 377.2C788.5 381.1 791.9 385.1 795.1 389.1C796.5 386 797.7 390.7 799.2 379.9C800.8 369.1 799.9 374.3 799.9 356.7C799.9 339.1 799.4 336.8 799.2 327.1z" fill="#fff" stroke="#fff" stroke-width="1.3" stroke-linejoin="round"/></g><g filter="url(#rS)"><path d="M784.8 378.2L793.4 388.7" fill="none" stroke="#fff" stroke-width="4.2" stroke-linecap="round" stroke-linejoin="round"/></g><g filter="url(#rL)"><path d="M710.8 453.5C712.9 454.6 713.4 453.5 717.1 456.8C720.8 460.2 720.1 457.2 721.8 463.6C723.4 469.9 722.7 468.2 722 475.8C721.3 483.3 722.3 483.1 719.6 486.2C716.8 489.2 717.2 488.7 713.7 484.9C710.2 481.2 710.9 481.1 709 474.8C707.2 468.5 707.5 473.1 708.1 466C708.6 458.9 709.9 457.6 710.8 453.5z" fill="#fff" stroke="#fff" stroke-width="1.3" stroke-linejoin="round"/></g><g filter="url(#rM)"><path d="M736.4 458.7C735 456.4 734.6 448.1 732 451.9C729.5 455.8 728.7 464.8 728.7 470.3C728.7 475.8 729.5 472.3 732 468.4C734.6 464.6 735 461.9 736.4 458.7z" fill="#fff" stroke="#fff" stroke-width="1.3" stroke-linejoin="round"/></g><g filter="url(#rL)"><path d="M722.2 489.3L723.3 488.6L724.6 487.4L726.1 486L727.7 484.3L729.4 482.4L730.9 480.5L732 478.5L733.1 476.5L734.1 474.3L735.1 472L736 469.6L736.8 467.2L737.1 464.7L737.2 462.3L737.2 459.8L737.1 457.5L736.8 455.2L736.5 453L735.9 451L735.2 449L734.4 447.1L733.4 445.4L732.3 443.7L731.1 442.3L729.8 440.9L728.4 439.7L726.9 438.7L725.3 437.9L723.6 437.4L721.8 437.1L720 437.1L718.3 437.5L716.7 438.1L715.3 438.8L714 439.8L712.8 441L712.1 442.8L712 444.4L712.2 445.8L712.5 447L712.7 447.9L712.8 448.5L717 448L717 447.3L716.9 446.3L716.8 445.3L716.8 444.4L716.9 444L717 444L717.3 443.9L717.9 443.6L718.8 443.3L719.7 443.1L720.5 443L720.9 443.1L721.4 443.4L722.1 443.9L722.8 444.5L723.5 445.3L724.1 446.1L724.6 447L724.9 447.9L725.3 449.1L725.5 450.3L725.7 451.6L725.8 453.1L725.8 454.5L725.9 456.1L725.8 457.8L725.7 459.6L725.5 461.4L725.2 463.1L724.8 464.8L724.6 466.5L724.2 468.3L723.7 470.2L723 472.2L722.4 474.1L721.7 475.9L721.2 477.8L720.5 479.8L719.8 481.8L719 483.7L718.4 485.4L718.1 486.7z" fill="#fff" stroke="#fff" stroke-width="1.3" stroke-linejoin="round"/><circle cx="714.9" cy="448.3" r="2.1" fill="#fff"/><circle cx="720.2" cy="488" r="2.4" fill="#fff"/></g><g filter="url(#rM)"><circle cx="719.8" cy="445" r="4.2" fill="#fff"/></g><g filter="url(#rL)"><path d="M750.4 471.9C750.1 474.2 752.6 474.7 749.5 478.8C746.4 483 747.3 481.6 740.9 484.3C734.6 487.1 736.7 485.1 730.6 487C724.4 489 724.9 491.3 722.6 490.2C720.4 489.1 721 487.7 723.8 483.7C726.7 479.7 725.5 481 731.2 478.2C736.9 475.5 734.5 477.7 740.9 475.5C747.3 473.4 747.2 473.1 750.4 471.9z" fill="#fff" stroke="#fff" stroke-width="1.3" stroke-linejoin="round"/></g><g filter="url(#rM)"><path d="M763.3 475.5C762.8 477.5 765.1 478.3 761.7 481.6C758.3 485 759.3 483.8 753.2 485.6C747.1 487.3 744.2 489.1 743.4 487C742.6 485 744.1 483.3 750.7 479.4C757.4 475.6 759.2 476.8 763.3 475.5z" fill="#fff" stroke="#fff" stroke-width="1.3" stroke-linejoin="round"/></g><g filter="url(#rL)"><path d="M754.4 494.4C752.6 492.9 754.8 492.3 748.9 489.8C743 487.4 745 487.2 736.7 487C728.3 486.8 728.5 486.8 723.8 489.2C719.1 491.7 718.3 491.6 722.6 494.4C726.9 497.1 727.9 496.4 736.7 497.5C745.4 498.7 743 498.8 748.9 497.8C754.8 496.7 752.6 495.5 754.4 494.4z" fill="#fff" stroke="#fff" stroke-width="1.3" stroke-linejoin="round"/></g><g filter="url(#rM)"><path d="M724 493.8L725.5 493.5L727.6 493.1L730 492.6L732.5 492.1L735.1 491.6L737.4 491.4L739.6 491.1L741.9 491L744.4 490.9L746.8 490.9L749.3 490.8L751.6 490.8L753.7 490.6L755.8 490.4L757.9 490.3L760 490.1L762.1 489.9L764.1 489.6L765.9 489.1L767.6 488.7L769.3 488.1L770.8 487.5L772.3 486.8L773.7 486L775 485.2L776.2 484.3L777.4 483.2L778.5 482L779.4 480.7L780 479.2L780.3 477.5L780.3 475.9L780 474.3L779.5 472.8L778.9 471.4L777.9 470.1L776.6 469.2L775.2 468.5L773.8 468.1L772.4 468L771 468L769.5 468.4L768.1 469.3L767.3 470.5L766.7 471.6L766.3 472.6L766 473.5L765.8 474L769.1 475.6L769.5 475L769.9 474.2L770.3 473.4L770.8 472.7L771.1 472.4L771.1 472.4L771.3 472.5L771.9 472.6L772.7 472.8L773.4 473.1L774 473.4L774.1 473.6L774.2 473.9L774.5 474.6L774.6 475.4L774.7 476.2L774.6 476.9L774.5 477.3L774.2 477.6L773.8 478.1L773.2 478.6L772.4 479.2L771.5 479.7L770.6 480.2L769.6 480.5L768.5 480.8L767.3 481.1L766 481.3L764.5 481.4L763 481.6L761.4 481.6L759.6 481.6L757.7 481.6L755.6 481.5L753.4 481.5L751.1 481.5L748.8 481.8L746.3 482L743.8 482.3L741.2 482.6L738.6 482.9L736 483.4L733.3 484.2L730.7 485.1L728.1 486L725.7 486.9L723.8 487.7L722.4 488.4z" fill="#fff" stroke="#fff" stroke-width="1.3" stroke-linejoin="round"/><circle cx="767.5" cy="474.8" r="1.8" fill="#fff"/><circle cx="723.2" cy="491.1" r="2.8" fill="#fff"/></g><g filter="url(#rM)"><circle cx="772.1" cy="476.4" r="4.2" fill="#fff"/></g><g filter="url(#rM)"><path d="M768.4 491.3L769.3 491.3L770.6 491.4L772.3 491.5L774.2 491.5L776.3 491.3L778.4 490.6L780.3 489.5L781.9 488.2L783.3 486.8L784.5 485.4L785.6 484.1L786.7 483L787.8 481.7L788.9 480.5L789.8 479.3L790.6 478.4L791.3 477.8L791.9 477.4L792.6 477.1L793.5 476.9L794.5 476.7L795.4 476.7L796 476.8L796.2 476.8L796.3 476.8L796.5 477.2L796.9 477.9L797.1 478.8L797.3 479.7L797.3 480.4L797.2 481.1L796.9 482.1L796.5 483.1L796 484L795.5 484.6L795.3 484.9L795.1 485.1L794.5 485.2L793.8 485.2L793 485.1L792.3 485L791.9 484.9L791.8 484.8L791.5 484.3L791.2 483.6L790.9 482.8L790.6 482L790.4 481.4L787.1 482.4L787.2 482.9L787.3 483.7L787.5 484.7L787.9 485.9L788.5 487.1L789.5 488.2L790.7 488.9L791.9 489.4L793.3 489.7L794.7 489.8L796.3 489.7L797.8 489.1L799.1 488.1L800.2 486.8L801 485.5L801.8 484L802.3 482.5L802.7 480.9L802.7 479.4L802.6 477.8L802.2 476.2L801.7 474.7L800.8 473.2L799.4 471.9L797.7 471.1L796 470.7L794.2 470.6L792.5 470.7L790.8 471.1L789 471.7L787.4 472.7L786.1 473.9L784.9 475.1L783.9 476.3L783 477.3L782 478.4L780.8 479.5L779.6 480.8L778.4 482L777.3 483L776.3 483.7L775.6 484.2L774.8 484.4L773.6 484.6L772.3 484.7L770.8 484.7L769.5 484.7L768.5 484.7z" fill="#fff" stroke="#fff" stroke-width="1.3" stroke-linejoin="round"/><circle cx="788.7" cy="481.9" r="1.7" fill="#fff"/><circle cx="768.4" cy="488" r="3.3" fill="#fff"/></g><g filter="url(#rM)"><circle cx="793.1" cy="481.3" r="4.2" fill="#fff"/></g><g filter="url(#rL)"><circle cx="718.3" cy="491.1" r="5.5" fill="#fff"/></g><g filter="url(#rL)"><g transform="translate(1599 0) scale(-1 1)"><path d="M712.2 232.5C715.4 233.2 715.9 231.4 722 234.6C728.1 237.7 725.3 235.7 730.6 241.9C735.9 248.1 733.8 244 737.9 253.3C742 262.6 742 261.8 742.8 269.8C743.6 277.7 743.2 277.1 740.3 277.1C737.5 277.1 738.5 275.7 734.2 269.8C729.9 263.9 732 264.9 727.5 259.4C723 253.9 724.6 256.5 720.8 253.3C717 250 718.9 253.4 716.1 249.6C713.4 245.8 713.9 247.6 712.6 241.9C711.3 236.2 712.3 235.6 712.2 232.5z" fill="#fff" stroke="#fff" stroke-width="1.3" stroke-linejoin="round"/></g></g><g filter="url(#rM)"><g transform="translate(1599 0) scale(-1 1)"><path d="M730.6 233.1C732.6 235 732.7 234.1 736.7 239C740.7 243.9 739.9 240.8 742.5 247.8C745.2 254.8 745.1 255.1 744.6 260C744.1 264.9 743.8 265.3 740.9 262.4C738.1 259.6 739.7 258.4 736.1 251.4C732.4 244.5 731.8 247.8 729.9 241.7C728.1 235.6 730.4 235.9 730.6 233.1z" fill="#fff" stroke="#fff" stroke-width="1.3" stroke-linejoin="round"/></g></g><g filter="url(#rL)"><g transform="translate(1599 0) scale(-1 1)"><path d="M711.6 256.4C712.3 255 711.7 254.3 713.7 252.2C715.7 250.1 713.9 250.1 717.7 250C721.5 249.9 719.8 248.6 725.1 252C730.4 255.4 728.9 253.2 733.6 260.2C738.3 267.2 738.1 264.6 739.1 273C740.1 281.4 740.1 282.6 736.7 285.2C733.2 287.9 731.2 285 728.7 280.9C726.3 276.9 730.1 278.2 729.3 273C728.5 267.8 729.5 270.1 726.3 265.4C723 260.7 724.4 262 719.6 258.9C714.7 255.9 714.2 257.2 711.6 256.4z" fill="#fff" stroke="#fff" stroke-width="1.3" stroke-linejoin="round"/></g></g><g filter="url(#rM)"><g transform="translate(1599 0) scale(-1 1)"><path d="M775.2 233.1C772.9 233.7 773.5 232.9 768.4 234.9C763.4 237 765.6 235.8 759.9 239.2C754.2 242.7 755 240 751.3 245.3C747.7 250.6 749.1 249.4 748.9 255.1C748.7 260.8 749.1 262 750.7 262.4C752.4 262.9 750.3 260.6 753.8 256.3C757.2 252.1 756.2 253.3 761.1 249.6C766 245.9 764.4 248.4 768.4 245.3C772.5 242.3 771.1 244.5 773.3 240.4C775.6 236.4 774.6 235.5 775.2 233.1z" fill="#fff" stroke="#fff" stroke-width="1.3" stroke-linejoin="round"/></g></g><g filter="url(#rM)"><g transform="translate(1599 0) scale(-1 1)"><path d="M767.5 256.3C767.3 254.8 768.5 254.1 767 251.7C765.5 249.3 766.4 249.4 762.9 249.2C759.4 249.1 760.5 248.2 756.5 251.2C752.4 254.2 753.6 252.4 750.7 258.2C747.9 264 748.6 262.6 747.9 268.6C747.2 274.5 747.3 274.7 748.6 275.9C750 277.1 749.6 276.2 751.9 272.2C754.3 268.2 752.5 268.1 755.6 263.9C758.7 259.8 757.4 262.3 761.4 259.8C765.3 257.2 765.5 257.5 767.5 256.3z" fill="#fff" stroke="#fff" stroke-width="1.3" stroke-linejoin="round"/></g></g><g filter="url(#rL)"><g transform="translate(1599 0) scale(-1 1)"><path d="M741.6 236.3L741.5 237.5L741.5 239.2L741.4 241.1L741.4 243.2L741.3 245.2L741.2 247.1L741 248.9L740.8 250.6L740.5 252.3L740.3 254L740 255.7L739.6 257.4L739 259.2L738.4 261.1L737.8 263L737.1 264.9L736.4 266.6L735.6 268.3L734.8 269.9L733.9 271.5L733 273.1L732 274.7L730.9 276.1L729.8 277.5L728.9 279L728 280.5L727 281.8L726 283.1L725 284.2L724.1 285.2L723.3 286.1L722.4 286.9L721.6 287.6L720.8 288.1L720.1 288.6L719.4 288.9L718.7 289.2L717.9 289.4L717 289.5L716.1 289.4L715.2 289.3L714.4 289.2L713.7 288.8L712.9 288.3L712.1 287.6L711.4 286.9L710.8 286.2L710.4 285.5L710.1 284.8L709.9 283.8L709.8 282.7L709.8 281.6L709.9 280.7L710 280L710.3 279.4L710.7 278.7L711.3 278.1L712 277.5L712.7 277L713.2 276.7L713.6 276.6L714.3 276.5L715.3 276.7L716.3 276.9L717.3 277.1L718.1 277.2L719.1 273.2L718.5 273L717.6 272.6L716.4 272.2L715 271.8L713.4 271.6L711.8 271.8L710.3 272.3L709 273L707.7 273.9L706.5 275L705.5 276.3L704.6 277.7L704.1 279.3L703.7 281L703.6 282.7L703.6 284.4L703.8 286.2L704.2 287.8L704.9 289.5L705.7 291L706.7 292.4L707.9 293.7L709.1 294.9L710.5 295.9L712 296.9L713.6 297.7L715.3 298.3L717.1 298.8L719 299.1L720.9 299.1L722.9 298.9L724.8 298.4L726.7 297.8L728.5 297.1L730.3 296.1L732.1 295.1L733.8 293.7L735.5 292.3L737.1 290.7L738.6 289.1L740.1 287.3L741.5 285.6L742.7 283.6L743.8 281.6L744.8 279.5L745.8 277.3L746.7 275.1L747.5 272.8L748.1 270.5L748.7 268.2L749.1 265.8L749.4 263.6L749.7 261.4L749.9 259.3L750.1 257.2L750.3 255.2L750.4 253.2L750.5 251.3L750.5 249.4L750.5 247.6L750.5 245.5L750.5 243.3L750.5 241.2L750.4 239.2L750.4 237.5L750.4 236.3z" fill="#fff" stroke="#fff" stroke-width="1.3" stroke-linejoin="round"/><circle cx="718.6" cy="275.2" r="2.1" fill="#fff"/><circle cx="746" cy="236.3" r="4.4" fill="#fff"/><path d="M750.5 251.6L750.5 250.5L750.6 249L750.7 247.3L750.8 245.5L750.9 243.7L751.1 242.2L751.3 240.8L751.6 239.4L751.9 238L752.2 236.6L752.6 235.2L753.1 233.9L753.6 232.5L754.1 231.1L754.7 229.7L755.3 228.3L756 226.9L756.7 225.5L757.4 224.1L758.2 222.8L759 221.4L759.9 220.1L760.8 218.9L761.7 217.7L762.8 216.4L764 215.2L765.2 214L766.4 212.9L767.6 211.8L768.7 211L770 210.2L771.2 209.4L772.5 208.7L773.8 208.2L775.1 207.7L776.4 207.3L777.7 206.9L779.1 206.6L780.4 206.4L781.6 206.2L782.7 206.2L783.6 206.3L784.5 206.3L785.4 206.5L786.3 206.7L787.2 207.1L788 207.4L788.6 207.8L789.2 208.2L789.9 208.9L790.6 209.6L791.2 210.5L791.6 211.3L791.9 211.9L792 212.5L791.9 213.4L791.6 214.5L791.2 215.5L790.8 216.4L790.4 217.1L790 217.6L789.3 218.1L788.5 218.5L787.7 218.9L786.9 219.1L786.4 219.2L786 219.2L785.3 218.9L784.6 218.6L783.8 218.1L783.3 217.6L783 217.3L782.8 217L782.7 216.3L782.8 215.4L782.8 214.3L782.9 213.3L783 212.5L778.4 212.1L778.3 212.7L778.1 213.7L777.9 214.9L777.8 216.4L777.9 218L778.4 219.6L779.2 221L780.3 222.1L781.4 223.1L782.8 224L784.3 224.6L785.9 225L787.6 225.1L789.2 224.9L790.8 224.4L792.4 223.8L794 222.9L795.4 221.8L796.6 220.5L797.6 219L798.5 217.3L799.2 215.5L799.8 213.6L800 211.6L799.9 209.5L799.6 207.5L799 205.6L798.2 203.7L797.2 201.9L796 200.3L794.5 198.8L792.8 197.6L791 196.5L789.2 195.6L787.2 194.9L785.1 194.4L782.9 194.3L780.7 194.4L778.6 194.6L776.6 195L774.6 195.5L772.7 196.1L770.8 196.9L769 197.7L767.2 198.7L765.4 199.8L763.7 201L762 202.2L760.4 203.6L758.9 205.1L757.5 206.7L756.1 208.2L754.8 209.8L753.6 211.4L752.5 213L751.4 214.6L750.5 216.3L749.6 217.9L748.7 219.5L747.9 221.1L747.2 222.8L746.5 224.5L745.8 226.1L745.2 227.8L744.7 229.5L744.2 231.1L743.8 232.8L743.4 234.5L743 236.1L742.8 237.8L742.5 239.4L742.3 241.1L742.2 243L742 245L742 247L742 248.8L741.9 250.3L741.9 251.3z" fill="#fff" stroke="#fff" stroke-width="1.3" stroke-linejoin="round"/><circle cx="780.7" cy="212.3" r="2.3" fill="#fff"/><circle cx="746.2" cy="251.4" r="4.3" fill="#fff"/></g></g><g filter="url(#rM)"><g transform="translate(1599 0) scale(-1 1)"><circle cx="715.9" cy="282.4" r="5.4" fill="#fff"/></g></g><g filter="url(#rM)"><g transform="translate(1599 0) scale(-1 1)"><circle cx="787" cy="212.9" r="6.1" fill="#fff"/></g></g><g filter="url(#rS)"><g transform="translate(1599 0) scale(-1 1)"><rect x="715.3" y="309" width="12.6" height="130" fill="#fff"/><path d="M716 330l11 9M716 352l11 9M716 374l11 9M716 396l11 9M716 418l11 9" stroke="#d0d0d0" stroke-width="0.8"/></g></g><g filter="url(#rM)"><g transform="translate(1599 0) scale(-1 1)"><rect x="708" y="297.4" width="26.8" height="6.3" rx="3" fill="#fff"/></g></g><g filter="url(#rM)"><g transform="translate(1599 0) scale(-1 1)"><rect x="708" y="304.1" width="26.8" height="6.3" rx="3" fill="#fff"/></g></g><g filter="url(#rX)"><g transform="translate(1599 0) scale(-1 1)"><path d="M786.2 284.2C784.5 280.3 783.9 284 778.2 286.7C772.5 289.4 772.1 290.5 769.1 292.3C770.1 293.4 773.9 292.7 772.1 295.6C770.3 298.5 768.5 296.8 763.6 301.1C758.6 305.5 759.3 306.2 757.2 308.7C758.7 309.5 762 307.5 761.7 311.1C761.5 314.7 759.4 314.2 756.5 319.4C753.5 324.7 754.1 324.4 752.9 326.8C754.4 327.5 756.5 325.7 757.4 329C758.3 332.2 755.2 332.4 755.6 336.6C756 340.7 756.2 338.2 758.7 341.4C761.1 344.7 759.7 342.1 762.9 346.3C766.2 350.6 764.8 353.1 768.4 354.3C772.1 355.5 771.8 354.3 773.9 350C776.1 345.7 774 347.6 774.8 341.4C775.6 335.3 774.8 338.2 776.4 331.7C777.9 325.1 776.8 327.8 779.4 321.9C782.1 316 782.3 318.4 784.3 313.9C786.4 309.5 786 313.5 785.6 308.4C785.1 303.4 782.9 306.7 783.1 298.7C783.3 290.6 787.8 288.2 786.2 284.2z" fill="#d4d4d4" stroke="#d4d4d4" stroke-width="1.3" stroke-linejoin="round"/></g></g><g filter="url(#rM)"><g transform="translate(1599 0) scale(-1 1)"><path d="M770.2 337.9L770.2 339.4L770.2 341.3L770.2 343.6L770.1 345.8L769.9 347.9L769.7 349.5L769.3 350.8L768.9 352.2L768.4 353.4L767.8 354.4L767.2 355.4L766.5 356.1L765.7 356.7L764.8 357.3L763.7 357.7L762.7 358.1L761.7 358.2L760.9 358.3L760.1 358.1L759.1 357.8L758.1 357.2L757.1 356.6L756.3 355.9L755.8 355.3L755.5 354.8L755.2 354L755 353.1L755 352.2L755 351.3L755.1 350.7L755.2 350.3L755.7 349.8L756.4 349.2L757.1 348.7L757.9 348.1L758.4 347.7L756.5 344.9L756 345.2L755.2 345.6L754.2 346.1L753.1 346.9L752 347.9L751.2 349.2L750.8 350.5L750.6 351.9L750.5 353.4L750.7 355L751 356.5L751.7 358L752.7 359.3L753.9 360.5L755.3 361.5L756.8 362.4L758.4 363.2L760.1 363.6L761.9 363.7L763.7 363.6L765.4 363.2L767.2 362.7L768.8 361.9L770.4 360.9L771.8 359.7L773.1 358.4L774.2 356.9L775.2 355.3L776.2 353.5L777 351.6L777.7 349.4L778.2 346.8L778.6 344.3L778.9 342L779.2 340.1L779.4 338.7z" fill="#fff" stroke="#fff" stroke-width="1.3" stroke-linejoin="round"/><circle cx="757.4" cy="346.3" r="1.7" fill="#fff"/><circle cx="774.8" cy="338.3" r="4.6" fill="#fff"/></g></g><g filter="url(#rM)"><g transform="translate(1599 0) scale(-1 1)"><circle cx="760.7" cy="351" r="4.6" fill="#fff"/></g></g><g filter="url(#rX)"><g transform="translate(1599 0) scale(-1 1)"><path d="M784.1 378.4C772.4 388.3 760.7 395.5 748.6 408.2C736.6 421 746.7 410.9 747.9 416.6C749.1 422.3 749.1 421.9 752.3 425.4C755.6 428.9 755.9 426.5 757.7 427.1C769.5 414.9 781.7 402.4 793.5 390.3C790.4 386.4 787.2 382.3 784.1 378.4z" fill="#fff" stroke="#fff" stroke-width="1.3" stroke-linejoin="round"/></g></g><g filter="url(#rL)"><g transform="translate(1599 0) scale(-1 1)"><path d="M799.2 327.1C797.6 330.4 797.2 328.9 794.4 337.1C791.5 345.3 792.9 341.2 790.7 351.8C788.5 362.4 789.5 360.4 787.8 368.9C786 377.4 786.1 374.5 785.3 377.2C788.5 381.1 791.9 385.1 795.1 389.1C796.5 386 797.7 390.7 799.2 379.9C800.8 369.1 799.9 374.3 799.9 356.7C799.9 339.1 799.4 336.8 799.2 327.1z" fill="#fff" stroke="#fff" stroke-width="1.3" stroke-linejoin="round"/></g></g><g filter="url(#rS)"><g transform="translate(1599 0) scale(-1 1)"><path d="M784.8 378.2L793.4 388.7" fill="none" stroke="#fff" stroke-width="4.2" stroke-linecap="round" stroke-linejoin="round"/></g></g><g filter="url(#rL)"><g transform="translate(1599 0) scale(-1 1)"><path d="M710.8 453.5C712.9 454.6 713.4 453.5 717.1 456.8C720.8 460.2 720.1 457.2 721.8 463.6C723.4 469.9 722.7 468.2 722 475.8C721.3 483.3 722.3 483.1 719.6 486.2C716.8 489.2 717.2 488.7 713.7 484.9C710.2 481.2 710.9 481.1 709 474.8C707.2 468.5 707.5 473.1 708.1 466C708.6 458.9 709.9 457.6 710.8 453.5z" fill="#fff" stroke="#fff" stroke-width="1.3" stroke-linejoin="round"/></g></g><g filter="url(#rM)"><g transform="translate(1599 0) scale(-1 1)"><path d="M736.4 458.7C735 456.4 734.6 448.1 732 451.9C729.5 455.8 728.7 464.8 728.7 470.3C728.7 475.8 729.5 472.3 732 468.4C734.6 464.6 735 461.9 736.4 458.7z" fill="#fff" stroke="#fff" stroke-width="1.3" stroke-linejoin="round"/></g></g><g filter="url(#rL)"><g transform="translate(1599 0) scale(-1 1)"><path d="M722.2 489.3L723.3 488.6L724.6 487.4L726.1 486L727.7 484.3L729.4 482.4L730.9 480.5L732 478.5L733.1 476.5L734.1 474.3L735.1 472L736 469.6L736.8 467.2L737.1 464.7L737.2 462.3L737.2 459.8L737.1 457.5L736.8 455.2L736.5 453L735.9 451L735.2 449L734.4 447.1L733.4 445.4L732.3 443.7L731.1 442.3L729.8 440.9L728.4 439.7L726.9 438.7L725.3 437.9L723.6 437.4L721.8 437.1L720 437.1L718.3 437.5L716.7 438.1L715.3 438.8L714 439.8L712.8 441L712.1 442.8L712 444.4L712.2 445.8L712.5 447L712.7 447.9L712.8 448.5L717 448L717 447.3L716.9 446.3L716.8 445.3L716.8 444.4L716.9 444L717 444L717.3 443.9L717.9 443.6L718.8 443.3L719.7 443.1L720.5 443L720.9 443.1L721.4 443.4L722.1 443.9L722.8 444.5L723.5 445.3L724.1 446.1L724.6 447L724.9 447.9L725.3 449.1L725.5 450.3L725.7 451.6L725.8 453.1L725.8 454.5L725.9 456.1L725.8 457.8L725.7 459.6L725.5 461.4L725.2 463.1L724.8 464.8L724.6 466.5L724.2 468.3L723.7 470.2L723 472.2L722.4 474.1L721.7 475.9L721.2 477.8L720.5 479.8L719.8 481.8L719 483.7L718.4 485.4L718.1 486.7z" fill="#fff" stroke="#fff" stroke-width="1.3" stroke-linejoin="round"/><circle cx="714.9" cy="448.3" r="2.1" fill="#fff"/><circle cx="720.2" cy="488" r="2.4" fill="#fff"/></g></g><g filter="url(#rM)"><g transform="translate(1599 0) scale(-1 1)"><circle cx="719.8" cy="445" r="4.2" fill="#fff"/></g></g><g filter="url(#rL)"><g transform="translate(1599 0) scale(-1 1)"><path d="M750.4 471.9C750.1 474.2 752.6 474.7 749.5 478.8C746.4 483 747.3 481.6 740.9 484.3C734.6 487.1 736.7 485.1 730.6 487C724.4 489 724.9 491.3 722.6 490.2C720.4 489.1 721 487.7 723.8 483.7C726.7 479.7 725.5 481 731.2 478.2C736.9 475.5 734.5 477.7 740.9 475.5C747.3 473.4 747.2 473.1 750.4 471.9z" fill="#fff" stroke="#fff" stroke-width="1.3" stroke-linejoin="round"/></g></g><g filter="url(#rM)"><g transform="translate(1599 0) scale(-1 1)"><path d="M763.3 475.5C762.8 477.5 765.1 478.3 761.7 481.6C758.3 485 759.3 483.8 753.2 485.6C747.1 487.3 744.2 489.1 743.4 487C742.6 485 744.1 483.3 750.7 479.4C757.4 475.6 759.2 476.8 763.3 475.5z" fill="#fff" stroke="#fff" stroke-width="1.3" stroke-linejoin="round"/></g></g><g filter="url(#rL)"><g transform="translate(1599 0) scale(-1 1)"><path d="M754.4 494.4C752.6 492.9 754.8 492.3 748.9 489.8C743 487.4 745 487.2 736.7 487C728.3 486.8 728.5 486.8 723.8 489.2C719.1 491.7 718.3 491.6 722.6 494.4C726.9 497.1 727.9 496.4 736.7 497.5C745.4 498.7 743 498.8 748.9 497.8C754.8 496.7 752.6 495.5 754.4 494.4z" fill="#fff" stroke="#fff" stroke-width="1.3" stroke-linejoin="round"/></g></g><g filter="url(#rM)"><g transform="translate(1599 0) scale(-1 1)"><path d="M724 493.8L725.5 493.5L727.6 493.1L730 492.6L732.5 492.1L735.1 491.6L737.4 491.4L739.6 491.1L741.9 491L744.4 490.9L746.8 490.9L749.3 490.8L751.6 490.8L753.7 490.6L755.8 490.4L757.9 490.3L760 490.1L762.1 489.9L764.1 489.6L765.9 489.1L767.6 488.7L769.3 488.1L770.8 487.5L772.3 486.8L773.7 486L775 485.2L776.2 484.3L777.4 483.2L778.5 482L779.4 480.7L780 479.2L780.3 477.5L780.3 475.9L780 474.3L779.5 472.8L778.9 471.4L777.9 470.1L776.6 469.2L775.2 468.5L773.8 468.1L772.4 468L771 468L769.5 468.4L768.1 469.3L767.3 470.5L766.7 471.6L766.3 472.6L766 473.5L765.8 474L769.1 475.6L769.5 475L769.9 474.2L770.3 473.4L770.8 472.7L771.1 472.4L771.1 472.4L771.3 472.5L771.9 472.6L772.7 472.8L773.4 473.1L774 473.4L774.1 473.6L774.2 473.9L774.5 474.6L774.6 475.4L774.7 476.2L774.6 476.9L774.5 477.3L774.2 477.6L773.8 478.1L773.2 478.6L772.4 479.2L771.5 479.7L770.6 480.2L769.6 480.5L768.5 480.8L767.3 481.1L766 481.3L764.5 481.4L763 481.6L761.4 481.6L759.6 481.6L757.7 481.6L755.6 481.5L753.4 481.5L751.1 481.5L748.8 481.8L746.3 482L743.8 482.3L741.2 482.6L738.6 482.9L736 483.4L733.3 484.2L730.7 485.1L728.1 486L725.7 486.9L723.8 487.7L722.4 488.4z" fill="#fff" stroke="#fff" stroke-width="1.3" stroke-linejoin="round"/><circle cx="767.5" cy="474.8" r="1.8" fill="#fff"/><circle cx="723.2" cy="491.1" r="2.8" fill="#fff"/></g></g><g filter="url(#rM)"><g transform="translate(1599 0) scale(-1 1)"><circle cx="772.1" cy="476.4" r="4.2" fill="#fff"/></g></g><g filter="url(#rM)"><g transform="translate(1599 0) scale(-1 1)"><path d="M768.4 491.3L769.3 491.3L770.6 491.4L772.3 491.5L774.2 491.5L776.3 491.3L778.4 490.6L780.3 489.5L781.9 488.2L783.3 486.8L784.5 485.4L785.6 484.1L786.7 483L787.8 481.7L788.9 480.5L789.8 479.3L790.6 478.4L791.3 477.8L791.9 477.4L792.6 477.1L793.5 476.9L794.5 476.7L795.4 476.7L796 476.8L796.2 476.8L796.3 476.8L796.5 477.2L796.9 477.9L797.1 478.8L797.3 479.7L797.3 480.4L797.2 481.1L796.9 482.1L796.5 483.1L796 484L795.5 484.6L795.3 484.9L795.1 485.1L794.5 485.2L793.8 485.2L793 485.1L792.3 485L791.9 484.9L791.8 484.8L791.5 484.3L791.2 483.6L790.9 482.8L790.6 482L790.4 481.4L787.1 482.4L787.2 482.9L787.3 483.7L787.5 484.7L787.9 485.9L788.5 487.1L789.5 488.2L790.7 488.9L791.9 489.4L793.3 489.7L794.7 489.8L796.3 489.7L797.8 489.1L799.1 488.1L800.2 486.8L801 485.5L801.8 484L802.3 482.5L802.7 480.9L802.7 479.4L802.6 477.8L802.2 476.2L801.7 474.7L800.8 473.2L799.4 471.9L797.7 471.1L796 470.7L794.2 470.6L792.5 470.7L790.8 471.1L789 471.7L787.4 472.7L786.1 473.9L784.9 475.1L783.9 476.3L783 477.3L782 478.4L780.8 479.5L779.6 480.8L778.4 482L777.3 483L776.3 483.7L775.6 484.2L774.8 484.4L773.6 484.6L772.3 484.7L770.8 484.7L769.5 484.7L768.5 484.7z" fill="#fff" stroke="#fff" stroke-width="1.3" stroke-linejoin="round"/><circle cx="788.7" cy="481.9" r="1.7" fill="#fff"/><circle cx="768.4" cy="488" r="3.3" fill="#fff"/></g></g><g filter="url(#rM)"><g transform="translate(1599 0) scale(-1 1)"><circle cx="793.1" cy="481.3" r="4.2" fill="#fff"/></g></g><g filter="url(#rL)"><g transform="translate(1599 0) scale(-1 1)"><circle cx="718.3" cy="491.1" r="5.5" fill="#fff"/></g></g><g filter="url(#rM)"><path d="M742.5 330.5A57 57 0 0 1 856.5 330.5V393.9A57 57 0 0 1 742.5 393.9z" fill="none" stroke="#fff" stroke-width="7.6" stroke-linecap="round" stroke-linejoin="round"/><path d="M742 330.5A57.5 57.5 0 0 1 857 330.5V393.9A57.5 57.5 0 0 1 742 393.9z" fill="none" stroke="#a0a0a0" stroke-width="0.9" stroke-linecap="round" stroke-linejoin="round"/></g><g filter="url(#rX)"><path d="M799.5 178.5 Q809 181 811.5 189 Q809 198 799.5 203 Q790 198 787.5 189 Q790 181 799.5 178.5z" fill="#fff" stroke="#fff" stroke-width="1.3" stroke-linejoin="round"/></g><g filter="url(#rL)"><path d="M799.5 234 Q807.5 230 809 224 Q806 218 799.5 214 Q793 218 790 224 Q791.5 230 799.5 234z" fill="#fff" stroke="#fff" stroke-width="1.3" stroke-linejoin="round"/></g><g filter="url(#rL)"><circle cx="790.8" cy="290.8" r="9.8" fill="url(#pgT)"/></g><g filter="url(#rL)"><circle cx="808.4" cy="290.8" r="9.8" fill="url(#pgT)"/></g><g filter="url(#rL)"><circle cx="790.8" cy="308.6" r="9.8" fill="url(#pgT)"/></g><g filter="url(#rL)"><circle cx="808.4" cy="308.6" r="9.8" fill="url(#pgT)"/></g><g filter="url(#rM)"><circle cx="799.6" cy="299.8" r="6.9" fill="#fff"/></g><g filter="url(#rX)"><path d="M799.6 447.1C797.4 445.6 796.7 446.6 792.9 442.8C789.1 438.9 789.7 440.1 788.2 435.4C786.8 430.8 784.8 432.4 788.6 428.7C792.4 425.1 792.3 424.4 799.6 424.4C806.9 424.4 806.8 425.1 810.6 428.7C814.4 432.4 812.4 430.8 811 435.4C809.6 440.1 810.1 438.9 806.3 442.8C802.5 446.6 801.8 445.6 799.6 447.1z" fill="#fff" stroke="#fff" stroke-width="1.3" stroke-linejoin="round"/></g><g filter="url(#rX)"><path d="M799.6 458.7C804.1 458.7 803.8 459.1 806.3 462.3C808.9 465.6 808.1 464.4 807.3 468.4C806.5 472.5 806.5 471.3 803.9 474.6C801.3 477.8 801 477 799.6 478.2C798.2 477 797.9 477.8 795.3 474.6C792.8 471.3 792.7 472.5 791.9 468.4C791.1 464.4 790.3 465.6 792.9 462.3C795.5 459.1 795.1 458.7 799.6 458.7z" fill="#fff" stroke="#fff" stroke-width="1.3" stroke-linejoin="round"/></g><g filter="url(#rL)"><path d="M799.6 493.5C798 492.3 796.6 492.5 794.7 489.8C792.9 487.2 792.5 487.8 794.1 485.6C795.7 483.3 795.9 483.1 799.6 483.1C803.3 483.1 803.5 483.3 805.1 485.6C806.7 487.8 806.3 487.2 804.5 489.8C802.7 492.5 801.2 492.3 799.6 493.5z" fill="#fff" stroke="#fff" stroke-width="1.3" stroke-linejoin="round"/></g><g filter="url(#rL)"><path d="M780.1 410.7C781.9 410 781.3 410.7 785.6 408.6C789.8 406.5 788.8 409.4 792.9 404.3C797 399.2 795.5 401.9 797.8 393.3C800 384.8 799 383.5 799.6 378.7C799.7 391.6 801.4 403.5 800 417.8C798.6 432 799.3 421 795.3 421.4C791.3 421.9 792.5 420.6 788 419C783.5 417.4 784.5 419.3 781.9 416.6C779.2 413.8 780.7 412.6 780.1 410.7z" fill="#fff" stroke="#fff" stroke-width="1.3" stroke-linejoin="round"/></g><g filter="url(#rL)"><path d="M780.1 422C781.9 421.6 781.3 422.4 785.6 420.8C789.8 419.1 788.1 420 792.9 417.1C797.7 414.3 797.6 407.3 800 412.2C802.3 417.2 802.3 425.4 800 432C797.6 438.6 797.7 432.7 792.9 432C788.1 431.3 789.4 431.7 785.6 429.9C781.7 428.2 783.1 429.5 781.3 426.9C779.4 424.2 780.5 423.6 780.1 422z" fill="#fff" stroke="#fff" stroke-width="1.3" stroke-linejoin="round"/></g><g filter="url(#rL)"><g transform="translate(1599 0) scale(-1 1)"><path d="M780.1 410.7C781.9 410 781.3 410.7 785.6 408.6C789.8 406.5 788.8 409.4 792.9 404.3C797 399.2 795.5 401.9 797.8 393.3C800 384.8 799 383.5 799.6 378.7C799.7 391.6 801.4 403.5 800 417.8C798.6 432 799.3 421 795.3 421.4C791.3 421.9 792.5 420.6 788 419C783.5 417.4 784.5 419.3 781.9 416.6C779.2 413.8 780.7 412.6 780.1 410.7z" fill="#fff" stroke="#fff" stroke-width="1.3" stroke-linejoin="round"/></g></g><g filter="url(#rL)"><g transform="translate(1599 0) scale(-1 1)"><path d="M780.1 422C781.9 421.6 781.3 422.4 785.6 420.8C789.8 419.1 788.1 420 792.9 417.1C797.7 414.3 797.6 407.3 800 412.2C802.3 417.2 802.3 425.4 800 432C797.6 438.6 797.7 432.7 792.9 432C788.1 431.3 789.4 431.7 785.6 429.9C781.7 428.2 783.1 429.5 781.3 426.9C779.4 424.2 780.5 423.6 780.1 422z" fill="#fff" stroke="#fff" stroke-width="1.3" stroke-linejoin="round"/></g></g><g filter="url(#rS)"><rect x="704.8" y="634" width="12.2" height="75.4" fill="#fff"/><path d="M705.5 650l10.500 9M705.5 672l10.500 9M705.5 694l10.500 9" stroke="#d0d0d0" stroke-width="0.8"/></g><g filter="url(#rS)"><g transform="translate(1599 0) scale(-1 1)"><rect x="704.8" y="634" width="12.2" height="75.4" fill="#fff"/><path d="M705.5 650l10.500 9M705.5 672l10.500 9M705.5 694l10.500 9" stroke="#d0d0d0" stroke-width="0.8"/></g></g><g filter="url(#rL)"><path d="M799.5 579.6C797.5 581.6 794.5 580.1 793.4 585.7C792.3 591.3 794.6 588.8 796.2 596.4C797.8 604.1 797.2 602.8 798.3 608.7C799.4 614.6 799.1 612.4 799.5 614.2C799.9 612.4 799.6 614.6 800.7 608.7C801.8 602.8 801.2 604.1 802.8 596.4C804.4 588.8 806.7 591.3 805.6 585.7C804.5 580.1 801.5 581.6 799.5 579.6z" fill="#fff" stroke="#fff" stroke-width="1.3" stroke-linejoin="round"/></g><g filter="url(#rL)"><g transform="translate(0 1343.4) scale(1 -1)"><path d="M799.5 579.6C797.5 581.6 794.5 580.1 793.4 585.7C792.3 591.3 794.6 588.8 796.2 596.4C797.8 604.1 797.2 602.8 798.3 608.7C799.4 614.6 799.1 612.4 799.5 614.2C799.9 612.4 799.6 614.6 800.7 608.7C801.8 602.8 801.2 604.1 802.8 596.4C804.4 588.8 806.7 591.3 805.6 585.7C804.5 580.1 801.5 581.6 799.5 579.6z" fill="#fff" stroke="#fff" stroke-width="1.3" stroke-linejoin="round"/></g></g><g filter="url(#rL)"><path d="M713.3 594C716.6 593.5 717 591.8 723.1 592.5C729.2 593.3 726.6 592.4 731.7 596.2C736.8 600 737 599.7 738.4 604C739.8 608.4 740.2 608.7 735.9 609.3C731.7 609.8 731.5 607.9 725.6 605.6C719.6 603.4 722.3 606.4 718.2 602.6C714.1 598.7 714.9 596.8 713.3 594z" fill="#fff" stroke="#fff" stroke-width="1.3" stroke-linejoin="round"/></g><g filter="url(#rL)"><path d="M738.4 580.6C741 582.6 741.2 581.8 746.3 586.7C751.5 591.6 750.4 589.4 753.9 595.2C757.4 601 757 598.1 756.7 604C756.4 609.9 757.3 611.2 753.1 612.9C748.8 614.7 749.5 613.9 743.9 609.3C738.3 604.7 739.5 605.9 736.3 599.1C733.1 592.4 733.7 595.3 734.4 589.1C735 582.9 737.1 583.4 738.4 580.6z" fill="#fff" stroke="#fff" stroke-width="1.3" stroke-linejoin="round"/></g><g filter="url(#rL)"><path d="M763.7 596.2C764.6 598.7 763.9 598.9 766.5 603.8C769.1 608.7 766.7 607.4 771.4 610.9C776.1 614.3 779.3 611.2 780.6 614.2C781.8 617.2 780.8 618.3 775.1 619.9C769.4 621.5 769.4 621.9 763.4 619.1C757.5 616.2 759.4 616.9 757.1 611.4C754.8 605.9 754.3 607.6 756.5 602.6C758.7 597.5 761.3 598.3 763.7 596.2z" fill="#fff" stroke="#fff" stroke-width="1.3" stroke-linejoin="round"/></g><g filter="url(#rM)"><path d="M725.6 629.7C724.3 627.6 722.1 627.4 721.6 623.3C721.2 619.3 720.6 620.2 724.3 617.5C728.1 614.7 726.4 615.2 732.9 615C739.4 614.9 737 614.7 743.9 617C750.8 619.3 747.1 619.3 753.7 621.9C760.2 624.5 764.3 623.3 763.4 624.8C762.6 626.3 759.4 627.2 751.2 626.4C743.1 625.6 745.9 623.3 739 622.4C732.1 621.4 734.9 621.1 730.4 623.6C726 626 727.2 627.7 725.6 629.7z" fill="#fff" stroke="#fff" stroke-width="1.3" stroke-linejoin="round"/></g><g filter="url(#rL)"><path d="M710.6 633.7L709.8 633.1L708.8 632.3L707.7 631.5L706.7 630.7L706.1 630L705.7 629.3L705.4 628.4L705.1 627.2L704.9 625.8L704.9 624.3L704.9 622.9L705.2 621.7L705.5 620.5L706.1 619.1L706.8 617.7L707.7 616.5L708.6 615.4L709.6 614.4L710.7 613.6L712 612.9L713.6 612.2L715.2 611.7L716.9 611.2L718.6 611L720.4 610.9L722.3 611L724.4 611.2L726.5 611.6L728.6 612.1L730.5 612.6L732.3 613.3L734 614.2L735.9 615.3L737.8 616.4L739.8 617.7L741.9 618.8L743.9 619.9L745.8 621.1L747.9 622.3L750 623.5L752.2 624.6L754.5 625.6L756.8 626.4L759 627.1L761.3 627.7L763.7 628.2L766.1 628.5L768.6 628.6L771.1 628.4L773.5 628L775.7 627.4L777.9 626.7L780 625.9L782 625L784 623.9L785.9 622.6L787.7 621.2L789.3 619.8L790.9 618.4L792.4 617L793.8 615.5L795.2 613.9L796.5 612.2L797.8 610.5L798.9 608.6L799.9 606.7L800.7 604.9L801.3 602.9L801.8 601L802.1 598.9L802.1 596.8L801.9 594.7L801.4 592.6L800.7 590.6L799.7 588.8L798.6 587L797.3 585.3L795.8 583.9L794.2 582.7L792.4 581.6L790.5 580.8L788.5 580.2L786.5 579.8L784.4 579.7L782.4 580L780.5 580.6L778.7 581.5L777 582.5L775.5 583.7L774.2 585.1L773.2 586.9L772.5 588.8L772.1 590.7L771.8 592.4L771.6 593.8L771.4 594.7L776.2 595.8L776.5 594.8L776.8 593.4L777.2 591.9L777.6 590.5L778.1 589.4L778.6 588.7L779.3 588.1L780.3 587.5L781.4 586.9L782.6 586.5L783.6 586.3L784.5 586.3L785.4 586.5L786.5 586.8L787.7 587.3L788.9 588L789.9 588.7L790.7 589.4L791.3 590.3L792 591.3L792.6 592.4L793 593.6L793.3 594.8L793.4 595.7L793.3 596.6L793.1 597.6L792.8 598.6L792.3 599.8L791.7 600.9L791 602L790.3 603.1L789.4 604.2L788.3 605.4L787.2 606.6L785.9 607.8L784.6 608.9L783.3 610.1L782 611.2L780.7 612.3L779.3 613.2L778 614.1L776.7 614.8L775.2 615.6L773.8 616.3L772.3 617L770.9 617.5L769.4 617.9L768.1 618.1L766.6 618.2L765 618.1L763.3 617.9L761.4 617.6L759.6 617.1L757.7 616.6L755.9 616L754.1 615.3L752.1 614.3L750.1 613.3L748 612.2L745.9 611.2L743.9 610.3L741.9 609.2L739.8 608.1L737.6 607L735.3 606L732.8 605.2L730.4 604.6L727.9 604.1L725.3 603.7L722.8 603.5L720.3 603.5L717.8 603.7L715.5 604L713.2 604.6L710.9 605.4L708.8 606.3L706.8 607.4L704.9 608.8L703.2 610.3L701.8 612.1L700.5 614L699.5 616L698.6 618L698 620.1L697.7 622.2L697.6 624.4L697.8 626.5L698.1 628.6L698.6 630.6L699.4 632.5L700.7 634.3L702.2 635.8L703.7 636.9L705.1 637.8L706.1 638.4L706.8 638.9z" fill="#fff" stroke="#fff" stroke-width="1.3" stroke-linejoin="round"/><circle cx="773.8" cy="595.2" r="2.4" fill="#fff"/><circle cx="708.7" cy="636.3" r="3.2" fill="#fff"/></g><g filter="url(#rM)"><circle cx="781.5" cy="596.2" r="6.1" fill="#fff"/></g><g filter="url(#rM)"><circle cx="713.3" cy="627.6" r="6.1" fill="#fff"/></g><g filter="url(#rL)"><g transform="translate(1599 0) scale(-1 1)"><path d="M713.3 594C716.6 593.5 717 591.8 723.1 592.5C729.2 593.3 726.6 592.4 731.7 596.2C736.8 600 737 599.7 738.4 604C739.8 608.4 740.2 608.7 735.9 609.3C731.7 609.8 731.5 607.9 725.6 605.6C719.6 603.4 722.3 606.4 718.2 602.6C714.1 598.7 714.9 596.8 713.3 594z" fill="#fff" stroke="#fff" stroke-width="1.3" stroke-linejoin="round"/></g></g><g filter="url(#rL)"><g transform="translate(1599 0) scale(-1 1)"><path d="M738.4 580.6C741 582.6 741.2 581.8 746.3 586.7C751.5 591.6 750.4 589.4 753.9 595.2C757.4 601 757 598.1 756.7 604C756.4 609.9 757.3 611.2 753.1 612.9C748.8 614.7 749.5 613.9 743.9 609.3C738.3 604.7 739.5 605.9 736.3 599.1C733.1 592.4 733.7 595.3 734.4 589.1C735 582.9 737.1 583.4 738.4 580.6z" fill="#fff" stroke="#fff" stroke-width="1.3" stroke-linejoin="round"/></g></g><g filter="url(#rL)"><g transform="translate(1599 0) scale(-1 1)"><path d="M763.7 596.2C764.6 598.7 763.9 598.9 766.5 603.8C769.1 608.7 766.7 607.4 771.4 610.9C776.1 614.3 779.3 611.2 780.6 614.2C781.8 617.2 780.8 618.3 775.1 619.9C769.4 621.5 769.4 621.9 763.4 619.1C757.5 616.2 759.4 616.9 757.1 611.4C754.8 605.9 754.3 607.6 756.5 602.6C758.7 597.5 761.3 598.3 763.7 596.2z" fill="#fff" stroke="#fff" stroke-width="1.3" stroke-linejoin="round"/></g></g><g filter="url(#rM)"><g transform="translate(1599 0) scale(-1 1)"><path d="M725.6 629.7C724.3 627.6 722.1 627.4 721.6 623.3C721.2 619.3 720.6 620.2 724.3 617.5C728.1 614.7 726.4 615.2 732.9 615C739.4 614.9 737 614.7 743.9 617C750.8 619.3 747.1 619.3 753.7 621.9C760.2 624.5 764.3 623.3 763.4 624.8C762.6 626.3 759.4 627.2 751.2 626.4C743.1 625.6 745.9 623.3 739 622.4C732.1 621.4 734.9 621.1 730.4 623.6C726 626 727.2 627.7 725.6 629.7z" fill="#fff" stroke="#fff" stroke-width="1.3" stroke-linejoin="round"/></g></g><g filter="url(#rL)"><g transform="translate(1599 0) scale(-1 1)"><path d="M710.6 633.7L709.8 633.1L708.8 632.3L707.7 631.5L706.7 630.7L706.1 630L705.7 629.3L705.4 628.4L705.1 627.2L704.9 625.8L704.9 624.3L704.9 622.9L705.2 621.7L705.5 620.5L706.1 619.1L706.8 617.7L707.7 616.5L708.6 615.4L709.6 614.4L710.7 613.6L712 612.9L713.6 612.2L715.2 611.7L716.9 611.2L718.6 611L720.4 610.9L722.3 611L724.4 611.2L726.5 611.6L728.6 612.1L730.5 612.6L732.3 613.3L734 614.2L735.9 615.3L737.8 616.4L739.8 617.7L741.9 618.8L743.9 619.9L745.8 621.1L747.9 622.3L750 623.5L752.2 624.6L754.5 625.6L756.8 626.4L759 627.1L761.3 627.7L763.7 628.2L766.1 628.5L768.6 628.6L771.1 628.4L773.5 628L775.7 627.4L777.9 626.7L780 625.9L782 625L784 623.9L785.9 622.6L787.7 621.2L789.3 619.8L790.9 618.4L792.4 617L793.8 615.5L795.2 613.9L796.5 612.2L797.8 610.5L798.9 608.6L799.9 606.7L800.7 604.9L801.3 602.9L801.8 601L802.1 598.9L802.1 596.8L801.9 594.7L801.4 592.6L800.7 590.6L799.7 588.8L798.6 587L797.3 585.3L795.8 583.9L794.2 582.7L792.4 581.6L790.5 580.8L788.5 580.2L786.5 579.8L784.4 579.7L782.4 580L780.5 580.6L778.7 581.5L777 582.5L775.5 583.7L774.2 585.1L773.2 586.9L772.5 588.8L772.1 590.7L771.8 592.4L771.6 593.8L771.4 594.7L776.2 595.8L776.5 594.8L776.8 593.4L777.2 591.9L777.6 590.5L778.1 589.4L778.6 588.7L779.3 588.1L780.3 587.5L781.4 586.9L782.6 586.5L783.6 586.3L784.5 586.3L785.4 586.5L786.5 586.8L787.7 587.3L788.9 588L789.9 588.7L790.7 589.4L791.3 590.3L792 591.3L792.6 592.4L793 593.6L793.3 594.8L793.4 595.7L793.3 596.6L793.1 597.6L792.8 598.6L792.3 599.8L791.7 600.9L791 602L790.3 603.1L789.4 604.2L788.3 605.4L787.2 606.6L785.9 607.8L784.6 608.9L783.3 610.1L782 611.2L780.7 612.3L779.3 613.2L778 614.1L776.7 614.8L775.2 615.6L773.8 616.3L772.3 617L770.9 617.5L769.4 617.9L768.1 618.1L766.6 618.2L765 618.1L763.3 617.9L761.4 617.6L759.6 617.1L757.7 616.6L755.9 616L754.1 615.3L752.1 614.3L750.1 613.3L748 612.2L745.9 611.2L743.9 610.3L741.9 609.2L739.8 608.1L737.6 607L735.3 606L732.8 605.2L730.4 604.6L727.9 604.1L725.3 603.7L722.8 603.5L720.3 603.5L717.8 603.7L715.5 604L713.2 604.6L710.9 605.4L708.8 606.3L706.8 607.4L704.9 608.8L703.2 610.3L701.8 612.1L700.5 614L699.5 616L698.6 618L698 620.1L697.7 622.2L697.6 624.4L697.8 626.5L698.1 628.6L698.6 630.6L699.4 632.5L700.7 634.3L702.2 635.8L703.7 636.9L705.1 637.8L706.1 638.4L706.8 638.9z" fill="#fff" stroke="#fff" stroke-width="1.3" stroke-linejoin="round"/><circle cx="773.8" cy="595.2" r="2.4" fill="#fff"/><circle cx="708.7" cy="636.3" r="3.2" fill="#fff"/></g></g><g filter="url(#rM)"><g transform="translate(1599 0) scale(-1 1)"><circle cx="781.5" cy="596.2" r="6.1" fill="#fff"/></g></g><g filter="url(#rM)"><g transform="translate(1599 0) scale(-1 1)"><circle cx="713.3" cy="627.6" r="6.1" fill="#fff"/></g></g><g filter="url(#rL)"><g transform="translate(0 1343.4) scale(1 -1)"><path d="M713.3 594C716.6 593.5 717 591.8 723.1 592.5C729.2 593.3 726.6 592.4 731.7 596.2C736.8 600 737 599.7 738.4 604C739.8 608.4 740.2 608.7 735.9 609.3C731.7 609.8 731.5 607.9 725.6 605.6C719.6 603.4 722.3 606.4 718.2 602.6C714.1 598.7 714.9 596.8 713.3 594z" fill="#fff" stroke="#fff" stroke-width="1.3" stroke-linejoin="round"/></g></g><g filter="url(#rL)"><g transform="translate(0 1343.4) scale(1 -1)"><path d="M738.4 580.6C741 582.6 741.2 581.8 746.3 586.7C751.5 591.6 750.4 589.4 753.9 595.2C757.4 601 757 598.1 756.7 604C756.4 609.9 757.3 611.2 753.1 612.9C748.8 614.7 749.5 613.9 743.9 609.3C738.3 604.7 739.5 605.9 736.3 599.1C733.1 592.4 733.7 595.3 734.4 589.1C735 582.9 737.1 583.4 738.4 580.6z" fill="#fff" stroke="#fff" stroke-width="1.3" stroke-linejoin="round"/></g></g><g filter="url(#rL)"><g transform="translate(0 1343.4) scale(1 -1)"><path d="M763.7 596.2C764.6 598.7 763.9 598.9 766.5 603.8C769.1 608.7 766.7 607.4 771.4 610.9C776.1 614.3 779.3 611.2 780.6 614.2C781.8 617.2 780.8 618.3 775.1 619.9C769.4 621.5 769.4 621.9 763.4 619.1C757.5 616.2 759.4 616.9 757.1 611.4C754.8 605.9 754.3 607.6 756.5 602.6C758.7 597.5 761.3 598.3 763.7 596.2z" fill="#fff" stroke="#fff" stroke-width="1.3" stroke-linejoin="round"/></g></g><g filter="url(#rM)"><g transform="translate(0 1343.4) scale(1 -1)"><path d="M725.6 629.7C724.3 627.6 722.1 627.4 721.6 623.3C721.2 619.3 720.6 620.2 724.3 617.5C728.1 614.7 726.4 615.2 732.9 615C739.4 614.9 737 614.7 743.9 617C750.8 619.3 747.1 619.3 753.7 621.9C760.2 624.5 764.3 623.3 763.4 624.8C762.6 626.3 759.4 627.2 751.2 626.4C743.1 625.6 745.9 623.3 739 622.4C732.1 621.4 734.9 621.1 730.4 623.6C726 626 727.2 627.7 725.6 629.7z" fill="#fff" stroke="#fff" stroke-width="1.3" stroke-linejoin="round"/></g></g><g filter="url(#rL)"><g transform="translate(0 1343.4) scale(1 -1)"><path d="M710.6 633.7L709.8 633.1L708.8 632.3L707.7 631.5L706.7 630.7L706.1 630L705.7 629.3L705.4 628.4L705.1 627.2L704.9 625.8L704.9 624.3L704.9 622.9L705.2 621.7L705.5 620.5L706.1 619.1L706.8 617.7L707.7 616.5L708.6 615.4L709.6 614.4L710.7 613.6L712 612.9L713.6 612.2L715.2 611.7L716.9 611.2L718.6 611L720.4 610.9L722.3 611L724.4 611.2L726.5 611.6L728.6 612.1L730.5 612.6L732.3 613.3L734 614.2L735.9 615.3L737.8 616.4L739.8 617.7L741.9 618.8L743.9 619.9L745.8 621.1L747.9 622.3L750 623.5L752.2 624.6L754.5 625.6L756.8 626.4L759 627.1L761.3 627.7L763.7 628.2L766.1 628.5L768.6 628.6L771.1 628.4L773.5 628L775.7 627.4L777.9 626.7L780 625.9L782 625L784 623.9L785.9 622.6L787.7 621.2L789.3 619.8L790.9 618.4L792.4 617L793.8 615.5L795.2 613.9L796.5 612.2L797.8 610.5L798.9 608.6L799.9 606.7L800.7 604.9L801.3 602.9L801.8 601L802.1 598.9L802.1 596.8L801.9 594.7L801.4 592.6L800.7 590.6L799.7 588.8L798.6 587L797.3 585.3L795.8 583.9L794.2 582.7L792.4 581.6L790.5 580.8L788.5 580.2L786.5 579.8L784.4 579.7L782.4 580L780.5 580.6L778.7 581.5L777 582.5L775.5 583.7L774.2 585.1L773.2 586.9L772.5 588.8L772.1 590.7L771.8 592.4L771.6 593.8L771.4 594.7L776.2 595.8L776.5 594.8L776.8 593.4L777.2 591.9L777.6 590.5L778.1 589.4L778.6 588.7L779.3 588.1L780.3 587.5L781.4 586.9L782.6 586.5L783.6 586.3L784.5 586.3L785.4 586.5L786.5 586.8L787.7 587.3L788.9 588L789.9 588.7L790.7 589.4L791.3 590.3L792 591.3L792.6 592.4L793 593.6L793.3 594.8L793.4 595.7L793.3 596.6L793.1 597.6L792.8 598.6L792.3 599.8L791.7 600.9L791 602L790.3 603.1L789.4 604.2L788.3 605.4L787.2 606.6L785.9 607.8L784.6 608.9L783.3 610.1L782 611.2L780.7 612.3L779.3 613.2L778 614.1L776.7 614.8L775.2 615.6L773.8 616.3L772.3 617L770.9 617.5L769.4 617.9L768.1 618.1L766.6 618.2L765 618.1L763.3 617.9L761.4 617.6L759.6 617.1L757.7 616.6L755.9 616L754.1 615.3L752.1 614.3L750.1 613.3L748 612.2L745.9 611.2L743.9 610.3L741.9 609.2L739.8 608.1L737.6 607L735.3 606L732.8 605.2L730.4 604.6L727.9 604.1L725.3 603.7L722.8 603.5L720.3 603.5L717.8 603.7L715.5 604L713.2 604.6L710.9 605.4L708.8 606.3L706.8 607.4L704.9 608.8L703.2 610.3L701.8 612.1L700.5 614L699.5 616L698.6 618L698 620.1L697.7 622.2L697.6 624.4L697.8 626.5L698.1 628.6L698.6 630.6L699.4 632.5L700.7 634.3L702.2 635.8L703.7 636.9L705.1 637.8L706.1 638.4L706.8 638.9z" fill="#fff" stroke="#fff" stroke-width="1.3" stroke-linejoin="round"/><circle cx="773.8" cy="595.2" r="2.4" fill="#fff"/><circle cx="708.7" cy="636.3" r="3.2" fill="#fff"/></g></g><g filter="url(#rM)"><g transform="translate(0 1343.4) scale(1 -1)"><circle cx="781.5" cy="596.2" r="6.1" fill="#fff"/></g></g><g filter="url(#rM)"><g transform="translate(0 1343.4) scale(1 -1)"><circle cx="713.3" cy="627.6" r="6.1" fill="#fff"/></g></g><g filter="url(#rL)"><g transform="translate(1599 1343.4) scale(-1 -1)"><path d="M713.3 594C716.6 593.5 717 591.8 723.1 592.5C729.2 593.3 726.6 592.4 731.7 596.2C736.8 600 737 599.7 738.4 604C739.8 608.4 740.2 608.7 735.9 609.3C731.7 609.8 731.5 607.9 725.6 605.6C719.6 603.4 722.3 606.4 718.2 602.6C714.1 598.7 714.9 596.8 713.3 594z" fill="#fff" stroke="#fff" stroke-width="1.3" stroke-linejoin="round"/></g></g><g filter="url(#rL)"><g transform="translate(1599 1343.4) scale(-1 -1)"><path d="M738.4 580.6C741 582.6 741.2 581.8 746.3 586.7C751.5 591.6 750.4 589.4 753.9 595.2C757.4 601 757 598.1 756.7 604C756.4 609.9 757.3 611.2 753.1 612.9C748.8 614.7 749.5 613.9 743.9 609.3C738.3 604.7 739.5 605.9 736.3 599.1C733.1 592.4 733.7 595.3 734.4 589.1C735 582.9 737.1 583.4 738.4 580.6z" fill="#fff" stroke="#fff" stroke-width="1.3" stroke-linejoin="round"/></g></g><g filter="url(#rL)"><g transform="translate(1599 1343.4) scale(-1 -1)"><path d="M763.7 596.2C764.6 598.7 763.9 598.9 766.5 603.8C769.1 608.7 766.7 607.4 771.4 610.9C776.1 614.3 779.3 611.2 780.6 614.2C781.8 617.2 780.8 618.3 775.1 619.9C769.4 621.5 769.4 621.9 763.4 619.1C757.5 616.2 759.4 616.9 757.1 611.4C754.8 605.9 754.3 607.6 756.5 602.6C758.7 597.5 761.3 598.3 763.7 596.2z" fill="#fff" stroke="#fff" stroke-width="1.3" stroke-linejoin="round"/></g></g><g filter="url(#rM)"><g transform="translate(1599 1343.4) scale(-1 -1)"><path d="M725.6 629.7C724.3 627.6 722.1 627.4 721.6 623.3C721.2 619.3 720.6 620.2 724.3 617.5C728.1 614.7 726.4 615.2 732.9 615C739.4 614.9 737 614.7 743.9 617C750.8 619.3 747.1 619.3 753.7 621.9C760.2 624.5 764.3 623.3 763.4 624.8C762.6 626.3 759.4 627.2 751.2 626.4C743.1 625.6 745.9 623.3 739 622.4C732.1 621.4 734.9 621.1 730.4 623.6C726 626 727.2 627.7 725.6 629.7z" fill="#fff" stroke="#fff" stroke-width="1.3" stroke-linejoin="round"/></g></g><g filter="url(#rL)"><g transform="translate(1599 1343.4) scale(-1 -1)"><path d="M710.6 633.7L709.8 633.1L708.8 632.3L707.7 631.5L706.7 630.7L706.1 630L705.7 629.3L705.4 628.4L705.1 627.2L704.9 625.8L704.9 624.3L704.9 622.9L705.2 621.7L705.5 620.5L706.1 619.1L706.8 617.7L707.7 616.5L708.6 615.4L709.6 614.4L710.7 613.6L712 612.9L713.6 612.2L715.2 611.7L716.9 611.2L718.6 611L720.4 610.9L722.3 611L724.4 611.2L726.5 611.6L728.6 612.1L730.5 612.6L732.3 613.3L734 614.2L735.9 615.3L737.8 616.4L739.8 617.7L741.9 618.8L743.9 619.9L745.8 621.1L747.9 622.3L750 623.5L752.2 624.6L754.5 625.6L756.8 626.4L759 627.1L761.3 627.7L763.7 628.2L766.1 628.5L768.6 628.6L771.1 628.4L773.5 628L775.7 627.4L777.9 626.7L780 625.9L782 625L784 623.9L785.9 622.6L787.7 621.2L789.3 619.8L790.9 618.4L792.4 617L793.8 615.5L795.2 613.9L796.5 612.2L797.8 610.5L798.9 608.6L799.9 606.7L800.7 604.9L801.3 602.9L801.8 601L802.1 598.9L802.1 596.8L801.9 594.7L801.4 592.6L800.7 590.6L799.7 588.8L798.6 587L797.3 585.3L795.8 583.9L794.2 582.7L792.4 581.6L790.5 580.8L788.5 580.2L786.5 579.8L784.4 579.7L782.4 580L780.5 580.6L778.7 581.5L777 582.5L775.5 583.7L774.2 585.1L773.2 586.9L772.5 588.8L772.1 590.7L771.8 592.4L771.6 593.8L771.4 594.7L776.2 595.8L776.5 594.8L776.8 593.4L777.2 591.9L777.6 590.5L778.1 589.4L778.6 588.7L779.3 588.1L780.3 587.5L781.4 586.9L782.6 586.5L783.6 586.3L784.5 586.3L785.4 586.5L786.5 586.8L787.7 587.3L788.9 588L789.9 588.7L790.7 589.4L791.3 590.3L792 591.3L792.6 592.4L793 593.6L793.3 594.8L793.4 595.7L793.3 596.6L793.1 597.6L792.8 598.6L792.3 599.8L791.7 600.9L791 602L790.3 603.1L789.4 604.2L788.3 605.4L787.2 606.6L785.9 607.8L784.6 608.9L783.3 610.1L782 611.2L780.7 612.3L779.3 613.2L778 614.1L776.7 614.8L775.2 615.6L773.8 616.3L772.3 617L770.9 617.5L769.4 617.9L768.1 618.1L766.6 618.2L765 618.1L763.3 617.9L761.4 617.6L759.6 617.1L757.7 616.6L755.9 616L754.1 615.3L752.1 614.3L750.1 613.3L748 612.2L745.9 611.2L743.9 610.3L741.9 609.2L739.8 608.1L737.6 607L735.3 606L732.8 605.2L730.4 604.6L727.9 604.1L725.3 603.7L722.8 603.5L720.3 603.5L717.8 603.7L715.5 604L713.2 604.6L710.9 605.4L708.8 606.3L706.8 607.4L704.9 608.8L703.2 610.3L701.8 612.1L700.5 614L699.5 616L698.6 618L698 620.1L697.7 622.2L697.6 624.4L697.8 626.5L698.1 628.6L698.6 630.6L699.4 632.5L700.7 634.3L702.2 635.8L703.7 636.9L705.1 637.8L706.1 638.4L706.8 638.9z" fill="#fff" stroke="#fff" stroke-width="1.3" stroke-linejoin="round"/><circle cx="773.8" cy="595.2" r="2.4" fill="#fff"/><circle cx="708.7" cy="636.3" r="3.2" fill="#fff"/></g></g><g filter="url(#rM)"><g transform="translate(1599 1343.4) scale(-1 -1)"><circle cx="781.5" cy="596.2" r="6.1" fill="#fff"/></g></g><g filter="url(#rM)"><g transform="translate(1599 1343.4) scale(-1 -1)"><circle cx="713.3" cy="627.6" r="6.1" fill="#fff"/></g></g><g filter="url(#rM)"><circle cx="799.5" cy="671.7" r="41.5" fill="none" stroke="url(#pgR)" stroke-width="10.5"/><circle cx="845.5" cy="676.2" r="4.9" fill="url(#pgR)"/><circle cx="843.7" cy="685.1" r="4.9" fill="url(#pgR)"/><circle cx="840.2" cy="693.5" r="4.9" fill="url(#pgR)"/><circle cx="835.2" cy="701" r="4.9" fill="url(#pgR)"/><circle cx="828.8" cy="707.4" r="4.9" fill="url(#pgR)"/><circle cx="821.3" cy="712.4" r="4.9" fill="url(#pgR)"/><circle cx="812.9" cy="715.9" r="4.9" fill="url(#pgR)"/><circle cx="804" cy="717.7" r="4.9" fill="url(#pgR)"/><circle cx="795" cy="717.7" r="4.9" fill="url(#pgR)"/><circle cx="786.1" cy="715.9" r="4.9" fill="url(#pgR)"/><circle cx="777.7" cy="712.4" r="4.9" fill="url(#pgR)"/><circle cx="770.2" cy="707.4" r="4.9" fill="url(#pgR)"/><circle cx="763.8" cy="701" r="4.9" fill="url(#pgR)"/><circle cx="758.8" cy="693.5" r="4.9" fill="url(#pgR)"/><circle cx="755.3" cy="685.1" r="4.9" fill="url(#pgR)"/><circle cx="753.5" cy="676.2" r="4.9" fill="url(#pgR)"/><circle cx="753.5" cy="667.2" r="4.9" fill="url(#pgR)"/><circle cx="755.3" cy="658.3" r="4.9" fill="url(#pgR)"/><circle cx="758.8" cy="649.9" r="4.9" fill="url(#pgR)"/><circle cx="763.8" cy="642.4" r="4.9" fill="url(#pgR)"/><circle cx="770.2" cy="636" r="4.9" fill="url(#pgR)"/><circle cx="777.7" cy="631" r="4.9" fill="url(#pgR)"/><circle cx="786.1" cy="627.5" r="4.9" fill="url(#pgR)"/><circle cx="795" cy="625.7" r="4.9" fill="url(#pgR)"/><circle cx="804" cy="625.7" r="4.9" fill="url(#pgR)"/><circle cx="812.9" cy="627.5" r="4.9" fill="url(#pgR)"/><circle cx="821.3" cy="631" r="4.9" fill="url(#pgR)"/><circle cx="828.8" cy="636" r="4.9" fill="url(#pgR)"/><circle cx="835.2" cy="642.4" r="4.9" fill="url(#pgR)"/><circle cx="840.2" cy="649.9" r="4.9" fill="url(#pgR)"/><circle cx="843.7" cy="658.3" r="4.9" fill="url(#pgR)"/><circle cx="845.5" cy="667.2" r="4.9" fill="url(#pgR)"/><path d="M837 671.7L849 671.7M836.3 679L848 681.4M834.1 686.1L845.2 690.6M830.7 692.5L840.7 699.2M826 698.2L834.5 706.7M820.3 702.9L827 712.9M813.9 706.3L818.4 717.4M806.8 708.5L809.2 720.2M799.5 709.2L799.5 721.2M792.2 708.5L789.8 720.2M785.1 706.3L780.6 717.4M778.7 702.9L772 712.9M773 698.2L764.5 706.7M768.3 692.5L758.3 699.2M764.9 686.1L753.8 690.6M762.7 679L751 681.4M762 671.7L750 671.7M762.7 664.4L751 662M764.9 657.3L753.8 652.8M768.3 650.9L758.3 644.2M773 645.2L764.5 636.7M778.7 640.5L772 630.5M785.1 637.1L780.6 626M792.2 634.9L789.8 623.2M799.5 634.2L799.5 622.2M806.8 634.9L809.2 623.2M813.9 637.1L818.4 626M820.3 640.5L827 630.5M826 645.2L834.5 636.7M830.7 650.9L840.7 644.2M834.1 657.3L845.2 652.8M836.3 664.4L848 662" stroke="#6a6a6a" stroke-width="1.2" fill="none"/></g><g filter="url(#rL)"><ellipse cx="817.8" cy="671.7" rx="12.6" ry="12.8" transform="rotate(0 817.8 671.7)" fill="url(#pgB)"/></g><g filter="url(#rL)"><ellipse cx="808.6" cy="687.5" rx="12.6" ry="12.8" transform="rotate(60 808.6 687.5)" fill="url(#pgB)"/></g><g filter="url(#rL)"><ellipse cx="790.4" cy="687.5" rx="12.6" ry="12.8" transform="rotate(120 790.4 687.5)" fill="url(#pgB)"/></g><g filter="url(#rL)"><ellipse cx="781.2" cy="671.7" rx="12.6" ry="12.8" transform="rotate(180 781.2 671.7)" fill="url(#pgB)"/></g><g filter="url(#rL)"><ellipse cx="790.4" cy="655.9" rx="12.6" ry="12.8" transform="rotate(240 790.4 655.9)" fill="url(#pgB)"/></g><g filter="url(#rL)"><ellipse cx="808.6" cy="655.9" rx="12.6" ry="12.8" transform="rotate(300 808.6 655.9)" fill="url(#pgB)"/></g><g filter="url(#rL)"><circle cx="799.5" cy="671.7" r="11.9" fill="#fff"/></g></svg>
<svg style="left:0;top:0" width="1600" height="900" class="ov"><rect x="404.3" y="867" width="39.2" height="33" fill="#a8682e"/><rect x="404.3" y="897.6" width="39.2" height="2.4" fill="#f08418"/><rect x="526.6" y="867" width="40.4" height="33" fill="#44596a"/><rect x="325.9" y="897.6" width="32.8" height="2.4" fill="#8cc4ee"/><rect x="366.3" y="897.6" width="28.2" height="2.4" fill="#8cc4ee"/><rect x="448.2" y="897.6" width="28.3" height="2.4" fill="#8cc4ee"/><rect x="488.6" y="897.6" width="33.2" height="2.4" fill="#8cc4ee"/><rect x="526.6" y="897.6" width="40.4" height="2.4" fill="#8cc4ee"/><rect x="395.3" y="897.6" width="4.2" height="2.4" fill="#6d9fc8"/><rect x="477.3" y="897.6" width="4.2" height="2.4" fill="#6d9fc8"/><circle cx="226.7" cy="878" r="7.3" fill="#2a8ae0"/><path d="M221.5 874.500q2-3 5-2.500l1.5 3-2.5 2.5 1 3-2 2.500q-3-2-3.5-5zM229 872.500q4 1 4.5 5l-2.5 3-2.5-3z" fill="#4cc04c"/><text x="226" y="895.5" font-size="9" font-family="DejaVu Sans,sans-serif" fill="#333">♫</text><circle cx="246.3" cy="878.5" r="7" fill="#ffc832"/><circle cx="244.5" cy="876.5" r="3" fill="#ffe890"/><path d="M243 885h6.600l-0.6 4h-5.400z" fill="#e8a020"/><path d="M243.6 889h5.400v3q-2.7 1.5-5.4 0z" fill="#b0a8c8"/><path d="M260.5 874h12v7.400h-12z" fill="#3a3a8a"/><path d="M260.5 871l12-0.500v3l-12 0.500z" fill="#222"/><path d="M262 871l1.5 3M265 870.800l1.5 3M268 870.700l1.5 3M262 876.500h9M262 879h9" stroke="#d8d8f0" stroke-width="0.8"/><path d="M257 884.500h14v3.500h-14z" fill="#4a9a4a"/><path d="M258.5 888h14v3.500h-14z" fill="#e0b030"/><path d="M256 891.500h15v3.500h-15z" fill="#c86a28"/><path d="M257 895h15.500v1.800h-15.500z" fill="#f0e8d0"/><g fill="none" stroke="#fff" stroke-width="1.3"><rect x="294" y="878.6" width="9" height="7.8"/><path d="M292.6 877v1.800M292.6 886.200v1.800M294 876.800h9M294 888.200h9"/><path d="M306 877v2M306 881.500v6.5" stroke-width="1.6"/></g><circle cx="342.5" cy="882.6" r="9.5" fill="#e53935"/><path d="M342.5 882.600L334.3 877.800A9.5 9.5 0 0 0 341 892z" fill="#43a047"/><path d="M342.5 882.600L341 892A9.5 9.5 0 0 0 350.7 877.800z" fill="#fdd835"/><circle cx="342.5" cy="882.6" r="4.4" fill="#fff"/><circle cx="342.5" cy="882.6" r="3.4" fill="#4285f4"/><circle cx="348.4" cy="888.2" r="5" fill="#f4f4f4"/><path d="M346 886l4.8 4.200M350.8 886l-4.8 4.2" stroke="#333" stroke-width="0.9"/><circle cx="348.4" cy="889.8" r="1.6" fill="#c01818"/><path d="M374.6 877.400q0-1 1-1h5l1.5 1.600h8.900q1 0 1 1v11.400h-17.400z" fill="#f4b400"/><path d="M374.6 880h17.400v10.500h-17.400z" fill="#ffd75e"/><path d="M378.3 884.500h10v6h-10z" fill="#2f8de4"/><path d="M381.3 887.500h4v3h-4z" fill="#ffd75e"/><rect x="415" y="873.8" width="17.8" height="18.2" rx="3.2" fill="#1a73e8"/><path d="M415.5 890l6.5-8 4.2 5 2.3-2.5 4 5q-1 2.5-3.5 2.500h-10.500q-2.5 0-3-2z" fill="#7fd3ff"/><path d="M415.5 890l6.5-8 6 10h-9.500q-2.5 0-3-2z" fill="#3fb0ff"/><circle cx="428" cy="878" r="1.6" fill="#fff"/><path d="M456 876.500h18v4.200h-18z" fill="#8a2a8a"/><path d="M455.5 880.700h19v4.200h-19z" fill="#2a52c8"/><path d="M456 884.900h18v4.200h-18z" fill="#2a9a3a"/><path d="M456 876.500h18M455.5 880.700h19M455.5 884.900h19M456 889.100h18" stroke="#e8d8b0" stroke-width="0.8"/><path d="M464 875.500h2.500v14.500h-2.500z" fill="#d8b048"/><rect x="463.3" y="880.5" width="4" height="3.4" fill="#c8c8c8" stroke="#555" stroke-width="0.5"/><path d="M500.5 875.500l11.5-1.2 2.8 13.8-12.8 2.600z" fill="#cfeef6"/><path d="M500.5 875.500l11.5-1.2 0.8 3-11.8 1.400z" fill="#eafaff"/><path d="M497 888.500l3.5-13 1.5 15.200z" fill="#8ab8c8"/><path d="M502 890.700l12.8-2.6-1 2.2-11 2z" fill="#5a8a9a"/><path d="M538.5 889.500h17v3h-17z" fill="#5cb8e8"/><path d="M541 892.500h12v2.200h-12z" fill="#3a88c0"/><rect x="541.5" y="873" width="5.5" height="9" rx="2" fill="#8ad0f0"/><path d="M543 882h2.500v7.500h-2.500z" fill="#b8e0f4"/><path d="M547 892l4.5-19h2.500l3.5 19h-3l-0.7-4.500h-3.600l-0.8 4.500z" fill="#d020c8"/><path d="M551 884.500h2.500l-1.2-6.500z" fill="#44596a"/><path d="M549 892l3.5-17" stroke="#8a0a88" stroke-width="0.9"/><path d="M1228.5 873.6a9.2 9.2 0 1 0 8.6 12.2a7.4 7.4 0 0 1-8.6-12.2z" fill="#f2a023"/><path d="M1217.5 879.2q0-2.6 2.8-2.6 1-2.4 3.5-2.1 2.5 0.3 2.9 2.8 2.3 0 2.3 2.1t-2.3 2.1h-6.8q-2.400 0-2.400-2.3z" fill="#b9d7f2"/><path d="M1224.5 889.3q0-2.3 2.5-2.3 0.9-2 3.1-1.800 2.2 0.3 2.6 2.400 3.3-0.3 3.3 1.900t-2.100 2.100h-7.100q-2.3 0-2.3-2.3z" fill="#a6ccee"/><path d="M1344.2 886.400l4.9-5 4.9 5" fill="none" stroke="#fff" stroke-width="1.3"/><g fill="none" stroke="#fff" stroke-width="1.1"><path d="M1372 889.500a9.5 9.5 0 0 1 9.5-9.5"/><path d="M1375 889.500a6.5 6.5 0 0 1 6.5-6.5" /><path d="M1378 889.500a3.5 3.5 0 0 1 3.5-3.5"/></g><circle cx="1381" cy="889" r="1.1" fill="#fff"/><g fill="none" stroke="#fff" stroke-width="1.1"><rect x="1398.5" y="879" width="6.5" height="7" rx="1.5"/><path d="M1405 881.500l2.5-1.500v5l-2.5-1.5"/><path d="M1399 877q3.5-2.5 7 0M1399 888.500q3.5 2.5 7 0"/></g><g fill="none" stroke="#fff" stroke-width="1.1"><rect x="1425.5" y="880" width="10" height="7" rx="1"/><path d="M1422 881v3.500h3M1423 879v2M1425 879v2"/></g><path d="M1436 882v3" stroke="#fff" stroke-width="1.4"/><path d="M1449.5 882.200h2.500l3-2.800v9.200l-3-2.800h-2.500z" fill="none" stroke="#fff" stroke-width="1.1"/><path d="M1457 881.500q1.6 2.5 0 5M1459 880q2.6 4 0 8" fill="none" stroke="#fff" stroke-width="1"/><path d="M1461.3 879q3 5 0 10" fill="none" stroke="#7f8c96" stroke-width="0.9"/><g fill="none" stroke="#fff" stroke-width="1.2"><path d="M1482 890.500l1-3.5 7-10q1.8-0.5 2.5 1.200l-7 10.300z"/><path d="M1480 888q-1.5-3 1.5-3.500t4 1.5"/></g><path d="M1566.5 877.500h13v9h-6l-3 3v-3h-4z" fill="none" stroke="#fff" stroke-width="1.2"/><path d="M1569 880.500h8M1569 883h8" stroke="#fff" stroke-width="1"/><circle cx="1578.5" cy="888.5" r="2.6" fill="#1c2f3e" stroke="#fff" stroke-width="0.9"/></svg>
</body></html>
